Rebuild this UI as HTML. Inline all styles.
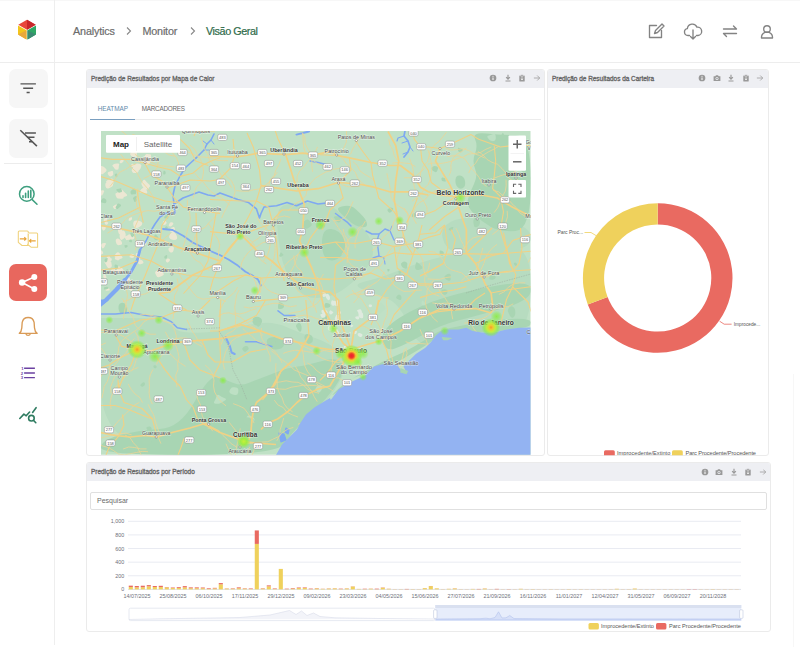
<!DOCTYPE html>
<html><head><meta charset="utf-8">
<style>
*{margin:0;padding:0;box-sizing:border-box}
html,body{width:800px;height:647px;overflow:hidden;background:#fff;font-family:"Liberation Sans",sans-serif;position:relative}
.abs{position:absolute}
svg text{font-family:"Liberation Sans",sans-serif}
.crumb{top:25px;font-size:10.8px;color:#6c6c6c;white-space:nowrap;-webkit-text-stroke:0.2px currentColor}
.sbtn{left:8.5px;width:39px;height:39px;border-radius:7px;background:#f6f6f6}
.panel{border:1px solid #ebebeb;border-radius:3px;background:#fff;overflow:hidden}
.phead{position:absolute;left:0;top:0;right:0;height:17.6px;background:#eeeff3}
.ptitle{position:absolute;left:4px;top:5.2px;font-size:6.45px;font-weight:normal;-webkit-text-stroke:0.3px #666;color:#5e5e5e;white-space:nowrap;letter-spacing:0}
</style></head><body>
<div class="abs" style="left:0;top:0;width:800px;height:1px;background:#f7f7f7"></div>
<div class="abs" style="left:54px;top:0;width:1.1px;height:645px;background:#eeeeee"></div>
<div class="abs" style="left:0;top:62px;width:800px;height:1px;background:#ededed"></div>
<div class="abs" style="left:793px;top:374px;width:1px;height:273px;background:#f7f7f7"></div>
<svg class="abs" style="left:16px;top:18px" width="22" height="23" viewBox="0 0 22 23"><polygon points="11,1.7 19.7,6.7 11,11.7 2.3,6.7" fill="#e8463b"/><polygon points="11,1.7 19.7,6.7 11,11.7" fill="#c8262a"/><polygon points="2,7.4 10.5,12.3 10.5,21.5 2,16.6" fill="#f3c51c"/><polygon points="2,16.6 10.5,12.3 10.5,21.5" fill="#e9a83a"/><polygon points="20,7.4 11.5,12.3 11.5,21.5 20,16.6" fill="#2fa865"/><polygon points="20,16.6 11.5,12.3 11.5,21.5" fill="#3c8a72"/></svg>
<div class="abs crumb" style="left:73px;letter-spacing:-0.15px">Analytics</div>
<svg class="abs" style="left:124px;top:25px" width="10" height="12" viewBox="0 0 10 12"><path d="M3 2.5l3.5 3.5L3 9.5" stroke="#888" stroke-width="1.1" fill="none"/></svg>
<div class="abs crumb" style="left:142.5px;letter-spacing:-0.2px">Monitor</div>
<svg class="abs" style="left:187.5px;top:25px" width="10" height="12" viewBox="0 0 10 12"><path d="M3 2.5l3.5 3.5L3 9.5" stroke="#888" stroke-width="1.1" fill="none"/></svg>
<div class="abs crumb" style="left:206px;color:#2f6b4a;letter-spacing:-0.42px">Visão Geral</div>
<svg class="abs" style="left:646px;top:21px" width="20" height="20" viewBox="0 0 20 20" fill="none" stroke="#838383" stroke-width="1.35" stroke-linecap="round" stroke-linejoin="round"><path d="M10.5 4.5H3.5v12h12V9.5"/><path d="M8.5 12.5l1-3 6.5-6.5 2 2-6.5 6.5z"/></svg>
<svg class="abs" style="left:683px;top:21px" width="20" height="20" viewBox="0 0 20 20" fill="none" stroke="#838383" stroke-width="1.35" stroke-linecap="round" stroke-linejoin="round"><path d="M6.5 14.5H5a3.5 3.5 0 0 1-.6-6.95A5 5 0 0 1 14 6.2a4 4 0 0 1 1 8.3h-1.5"/><path d="M10 9v9M7.5 15.5L10 18l2.5-2.5"/></svg>
<svg class="abs" style="left:720px;top:21px" width="20" height="20" viewBox="0 0 20 20" fill="none" stroke="#838383" stroke-width="1.35" stroke-linecap="round" stroke-linejoin="round"><path d="M3.5 8h13l-3-3M16.5 12.5h-13l3 3"/></svg>
<svg class="abs" style="left:757px;top:21px" width="20" height="20" viewBox="0 0 20 20" fill="none" stroke="#838383" stroke-width="1.35" stroke-linecap="round" stroke-linejoin="round"><circle cx="10" cy="8" r="3.3"/><path d="M4.5 17v-1a5.5 5 0 0 1 11 0v1z"/></svg>
<div class="abs sbtn" style="top:68.5px"></div>
<div class="abs sbtn" style="top:118.5px"></div>
<div class="abs" style="left:4px;top:162.5px;width:48px;height:1px;background:#ececec"></div>
<div class="abs" style="left:9.3px;top:264.3px;width:37.5px;height:37.2px;border-radius:7px;background:#e8675e"></div>
<svg class="abs" style="left:8px;top:68px" width="40" height="40" viewBox="0 0 40 40" stroke="#555" stroke-width="1.4" stroke-linecap="butt"><path d="M12.5 15.9h15.4M15.2 20.2h9.9M18.6 24.5h3.1"/></svg>
<svg class="abs" style="left:8px;top:118px" width="40" height="40" viewBox="0 0 40 40" stroke="#555" stroke-width="1.4" stroke-linecap="butt"><path d="M17 15h10.9M19 19.3h7.5M21 23.8h3.1"/><path d="M12.3 12.2l16.6 15.9" stroke-width="1.5"/></svg>
<svg class="abs" style="left:8px;top:176px" width="40" height="40" viewBox="0 0 40 40" fill="none" stroke="#3e9f7f" stroke-width="1.5" stroke-linecap="round"><circle cx="18.8" cy="17.9" r="7.3"/><path d="M24.2 23.6l4.8 4.6"/><path d="M15 21.5v-1.8M17.6 21.5v-4.2M20.3 21.5v-6.5M22.8 21.5v-7.2" stroke-width="1.6"/></svg>
<svg class="abs" style="left:8px;top:222px" width="40" height="40" viewBox="0 0 40 40" fill="none" stroke-width="1.05" stroke-linejoin="round"><path d="M11.3 9h8a1 1 0 0 1 1 1v13.5h-6.3l-3.7-3.2V10a1 1 0 0 1 1-1z" stroke="#f0d27a" fill="#fff"/><path d="M20.3 11h8.3a1 1 0 0 1 1 1v13.2h-6.6l-3.7-3.2" stroke="#f0d27a" fill="#fff"/><path d="M20.3 12v10" stroke="#f0d27a"/><path d="M11.8 16.8h6.2M16.3 15.1l1.8 1.7-1.8 1.7" stroke="#e9a53b" stroke-width="1.15"/><path d="M27.7 18.8h-6.3M23.2 17.1l-1.8 1.7 1.8 1.7" stroke="#e9a53b" stroke-width="1.15"/></svg>
<svg class="abs" style="left:8px;top:262px" width="40" height="42" viewBox="0 0 40 42" fill="#fff" stroke="#fff"><path d="M14.1 20.5l12.2-5.4M14.1 20.5l12.2 6.5" stroke-width="1.6"/><circle cx="14.1" cy="20.5" r="3.2" stroke="none"/><circle cx="26.3" cy="15.1" r="3" stroke="none"/><circle cx="26.3" cy="27" r="3" stroke="none"/></svg>
<svg class="abs" style="left:8px;top:306px" width="40" height="40" viewBox="0 0 40 40" fill="none" stroke="#d99b57" stroke-width="1.35" stroke-linejoin="round"><path d="M11.3 27.4h17.8c-1.6-1.2-2.4-3-2.6-5.5l-.4-5.6a6.1 6.1 0 0 0-11.9 0l-.4 5.6c-.2 2.5-1 4.3-2.5 5.5z"/><path d="M17.8 27.6a2.4 2.4 0 0 0 4.6 0"/></svg>
<svg class="abs" style="left:8px;top:352px" width="40" height="40" viewBox="0 0 40 40" fill="none" stroke="#6b41a1" stroke-width="1.4"><path d="M16.1 16.3h10.8M16.1 21h10.8M16.1 25.6h10.8"/><text x="13.2" y="18" font-size="4.2" font-family="Liberation Sans" fill="#6b41a1" stroke="none" font-weight="bold">1</text><text x="12.8" y="22.6" font-size="4.2" font-family="Liberation Sans" fill="#6b41a1" stroke="none" font-weight="bold">2</text><text x="12.8" y="27.2" font-size="4.2" font-family="Liberation Sans" fill="#6b41a1" stroke="none" font-weight="bold">3</text></svg>
<svg class="abs" style="left:8px;top:396px" width="40" height="40" viewBox="0 0 40 40" fill="none" stroke="#2e7b60" stroke-width="1.6" stroke-linecap="round" stroke-linejoin="round"><path d="M11.8 22.5l4.1-4.4 2.3 1.7 3.4-3.8"/><path d="M24.6 16.4l3.5-4.7"/><circle cx="23.4" cy="22.2" r="2.8"/><path d="M25.4 24.3l2.4 2.4"/></svg>

<div class="abs panel" style="left:86px;top:69px;width:459px;height:386.5px">
  <div class="phead"><div class="ptitle">Predição de Resultados por Mapa de Calor</div></div>
</div>
<div class="abs" style="left:97.7px;top:104.5px;font-size:6.4px;color:#5f8aab;white-space:nowrap">HEATMAP</div>
<div class="abs" style="left:141.7px;top:104.5px;font-size:6.3px;color:#666;white-space:nowrap;letter-spacing:-0.2px">MARCADORES</div>
<div class="abs" style="left:90.4px;top:119px;width:451px;height:1px;background:#ececec"></div>
<div class="abs" style="left:90.4px;top:118.8px;width:44.4px;height:1.5px;background:#7a9fc0"></div>
<svg class="abs" style="left:489.4px;top:74px" width="8" height="8" viewBox="0 0 8 8"><circle cx="4" cy="4" r="3.35" fill="#999999"/><path d="M4 3.5v2.5" stroke="#fff" stroke-width="1"/><circle cx="4" cy="2.3" r="0.55" fill="#fff"/></svg>
<svg class="abs" style="left:503.9px;top:74px" width="8" height="8" viewBox="0 0 8 8"><path d="M4 0.8v4.2M2.1 3.2L4 5.1 5.9 3.2M1.5 7h5" stroke="#999999" stroke-width="1.15" fill="none"/></svg>
<svg class="abs" style="left:518.4px;top:74px" width="8" height="8" viewBox="0 0 8 8"><rect x="1.3" y="1.5" width="5.4" height="6" rx="0.6" fill="#999999"/><rect x="2.7" y="0.7" width="2.6" height="1.6" rx="0.3" fill="#999999" stroke="#eeeff3" stroke-width="0.5"/><path d="M4 3.3v2.6M3 4.9L4 5.9 5 4.9" stroke="#fff" stroke-width="0.75" fill="none"/></svg>
<svg class="abs" style="left:532.9px;top:74px" width="8" height="8" viewBox="0 0 8 8"><path d="M0.9 4h5.8M4.2 1.5L6.7 4 4.2 6.5" stroke="#9c9c9c" stroke-width="0.8" fill="none"/></svg>

<div class="abs panel" style="left:547px;top:69px;width:221.5px;height:386.5px">
  <div class="phead"><div class="ptitle">Predição de Resultados da Carteira</div></div>
</div>
<svg class="abs" style="left:698px;top:74px" width="8" height="8" viewBox="0 0 8 8"><circle cx="4" cy="4" r="3.35" fill="#999999"/><path d="M4 3.5v2.5" stroke="#fff" stroke-width="1"/><circle cx="4" cy="2.3" r="0.55" fill="#fff"/></svg>
<svg class="abs" style="left:712.5px;top:74px" width="8" height="8" viewBox="0 0 8 8"><path d="M0.6 2.3h1.7l.7-1h2l.7 1h1.7v4.6H0.6z" fill="#999999"/><circle cx="4" cy="4.5" r="1.5" fill="#eeeff3"/><circle cx="4" cy="4.5" r="0.8" fill="#999999"/></svg>
<svg class="abs" style="left:727.0px;top:74px" width="8" height="8" viewBox="0 0 8 8"><path d="M4 0.8v4.2M2.1 3.2L4 5.1 5.9 3.2M1.5 7h5" stroke="#999999" stroke-width="1.15" fill="none"/></svg>
<svg class="abs" style="left:741.5px;top:74px" width="8" height="8" viewBox="0 0 8 8"><rect x="1.3" y="1.5" width="5.4" height="6" rx="0.6" fill="#999999"/><rect x="2.7" y="0.7" width="2.6" height="1.6" rx="0.3" fill="#999999" stroke="#eeeff3" stroke-width="0.5"/><path d="M4 3.3v2.6M3 4.9L4 5.9 5 4.9" stroke="#fff" stroke-width="0.75" fill="none"/></svg>
<svg class="abs" style="left:756.0px;top:74px" width="8" height="8" viewBox="0 0 8 8"><path d="M0.9 4h5.8M4.2 1.5L6.7 4 4.2 6.5" stroke="#9c9c9c" stroke-width="0.8" fill="none"/></svg>

<div class="abs panel" style="left:86px;top:462.3px;width:685px;height:169.6px">
  <div class="phead"><div class="ptitle">Predição de Resultados por Período</div></div>
</div>
<svg class="abs" style="left:700.5px;top:467.5px" width="8" height="8" viewBox="0 0 8 8"><circle cx="4" cy="4" r="3.35" fill="#999999"/><path d="M4 3.5v2.5" stroke="#fff" stroke-width="1"/><circle cx="4" cy="2.3" r="0.55" fill="#fff"/></svg>
<svg class="abs" style="left:715.0px;top:467.5px" width="8" height="8" viewBox="0 0 8 8"><path d="M0.6 2.3h1.7l.7-1h2l.7 1h1.7v4.6H0.6z" fill="#999999"/><circle cx="4" cy="4.5" r="1.5" fill="#eeeff3"/><circle cx="4" cy="4.5" r="0.8" fill="#999999"/></svg>
<svg class="abs" style="left:729.5px;top:467.5px" width="8" height="8" viewBox="0 0 8 8"><path d="M4 0.8v4.2M2.1 3.2L4 5.1 5.9 3.2M1.5 7h5" stroke="#999999" stroke-width="1.15" fill="none"/></svg>
<svg class="abs" style="left:744.0px;top:467.5px" width="8" height="8" viewBox="0 0 8 8"><rect x="1.3" y="1.5" width="5.4" height="6" rx="0.6" fill="#999999"/><rect x="2.7" y="0.7" width="2.6" height="1.6" rx="0.3" fill="#999999" stroke="#eeeff3" stroke-width="0.5"/><path d="M4 3.3v2.6M3 4.9L4 5.9 5 4.9" stroke="#fff" stroke-width="0.75" fill="none"/></svg>
<svg class="abs" style="left:758.5px;top:467.5px" width="8" height="8" viewBox="0 0 8 8"><path d="M0.9 4h5.8M4.2 1.5L6.7 4 4.2 6.5" stroke="#9c9c9c" stroke-width="0.8" fill="none"/></svg>
<div class="abs" style="left:90.4px;top:492px;width:676.5px;height:17.6px;border:1px solid #e0e0e0;border-radius:2px"></div>
<div class="abs" style="left:97px;top:497.3px;font-size:7px;color:#6a6a6a">Pesquisar</div>

<svg class="abs" style="left:0;top:0" width="800" height="647">
<defs><clipPath id="mc"><rect x="101" y="131" width="429.5" height="323.8"/></clipPath>
<radialGradient id="hG"><stop offset="0" stop-color="#88ee3c" stop-opacity="0.85"/><stop offset="0.55" stop-color="#8bee45" stop-opacity="0.5"/><stop offset="1" stop-color="#8bee45" stop-opacity="0"/></radialGradient>
<radialGradient id="hY"><stop offset="0" stop-color="#c6f03a" stop-opacity="1"/><stop offset="0.45" stop-color="#9aee3c" stop-opacity="0.9"/><stop offset="1" stop-color="#8bee45" stop-opacity="0"/></radialGradient>
<radialGradient id="hO"><stop offset="0" stop-color="#f39a2c" stop-opacity="1"/><stop offset="0.2" stop-color="#f0c834" stop-opacity="1"/><stop offset="0.45" stop-color="#c4ef3a" stop-opacity="0.95"/><stop offset="0.75" stop-color="#8bee45" stop-opacity="0.6"/><stop offset="1" stop-color="#8bee45" stop-opacity="0"/></radialGradient>
<radialGradient id="hR"><stop offset="0" stop-color="#ee1c2e" stop-opacity="1"/><stop offset="0.2" stop-color="#f03a2a" stop-opacity="1"/><stop offset="0.4" stop-color="#f4c834" stop-opacity="1"/><stop offset="0.62" stop-color="#b4ef3c" stop-opacity="0.9"/><stop offset="0.85" stop-color="#8bee45" stop-opacity="0.5"/><stop offset="1" stop-color="#8bee45" stop-opacity="0"/></radialGradient>
</defs>
<g clip-path="url(#mc)">
<rect x="101" y="131" width="430" height="324" fill="#c0e1c6"/>
<path d="M101.0 318.0 Q101.0 318.0 123.5 318.0 Q146.0 318.0 154.0 319.0 Q162.0 320.0 167.0 322.5 Q172.0 325.0 175.0 328.5 Q178.0 332.0 189.0 332.5 Q200.0 333.0 210.0 332.0 Q220.0 331.0 235.0 327.5 Q250.0 324.0 262.5 323.0 Q275.0 322.0 287.5 327.5 Q300.0 333.0 315.0 338.0 Q330.0 343.0 340.0 352.5 Q350.0 362.0 340.0 381.0 Q330.0 400.0 315.0 410.0 Q300.0 420.0 288.0 437.5 Q276.0 455.0 188.5 455.0 Q101.0 455.0 101.0 386.5 Q101.0 318.0 101.0 318.0Z" fill="#b7dcc0"/>
<path d="M277.0 223.0 Q276.0 206.0 288.0 204.0 Q300.0 202.0 315.0 203.0 Q330.0 204.0 336.0 209.5 Q342.0 215.0 355.0 222.5 Q368.0 230.0 372.0 244.0 Q376.0 258.0 364.0 271.0 Q352.0 284.0 341.0 291.0 Q330.0 298.0 316.0 298.0 Q302.0 298.0 293.0 284.0 Q284.0 270.0 281.0 255.0 Q278.0 240.0 277.0 223.0Z" fill="#b7dcc0"/>
<path d="M365.0 290.0 Q350.0 285.0 365.0 281.5 Q380.0 278.0 400.0 270.0 Q420.0 262.0 445.0 256.0 Q470.0 250.0 500.5 245.0 Q531.0 240.0 531.0 284.0 Q531.0 328.0 515.5 330.0 Q500.0 332.0 470.0 333.5 Q440.0 335.0 430.0 342.5 Q420.0 350.0 410.0 327.5 Q400.0 305.0 390.0 300.0 Q380.0 295.0 365.0 290.0Z" fill="#b7dcc0"/>
<path d="M442.5 237.5 Q440.0 225.0 455.0 220.0 Q470.0 215.0 500.5 220.0 Q531.0 225.0 531.0 237.5 Q531.0 250.0 500.5 252.5 Q470.0 255.0 457.5 252.5 Q445.0 250.0 442.5 237.5Z" fill="#b7dcc0"/>
<path d="M101.0 447.5 Q101.0 440.0 120.5 435.0 Q140.0 430.0 160.0 429.0 Q180.0 428.0 195.0 401.0 Q210.0 374.0 218.0 377.0 Q226.0 380.0 233.5 383.0 Q241.0 386.0 248.5 383.0 Q256.0 380.0 264.0 377.0 Q272.0 374.0 279.5 371.0 Q287.0 368.0 295.0 367.0 Q303.0 366.0 310.5 364.0 Q318.0 362.0 326.5 360.0 Q335.0 358.0 340.0 361.5 Q345.0 365.0 342.5 372.5 Q340.0 380.0 333.0 389.5 Q326.0 399.0 317.5 407.5 Q309.0 416.0 300.5 424.5 Q292.0 433.0 284.0 444.0 Q276.0 455.0 188.5 455.0 Q101.0 455.0 101.0 447.5Z" fill="#a8d5b3"/>
<path d="M338.0 209.0 Q338.0 207.0 344.5 206.0 Q351.0 205.0 355.5 209.0 Q360.0 213.0 363.5 217.0 Q367.0 221.0 367.0 224.5 Q367.0 228.0 361.0 227.0 Q355.0 226.0 350.5 222.0 Q346.0 218.0 342.0 214.5 Q338.0 211.0 338.0 209.0Z" fill="#a8d5b3"/>
<path d="M475.0 139.0 Q472.0 132.0 486.0 133.5 Q500.0 135.0 515.5 135.0 Q531.0 135.0 531.0 182.5 Q531.0 230.0 515.5 231.0 Q500.0 232.0 491.0 227.0 Q482.0 222.0 474.0 214.0 Q466.0 206.0 468.0 199.0 Q470.0 192.0 474.0 184.0 Q478.0 176.0 475.0 168.5 Q472.0 161.0 475.0 153.5 Q478.0 146.0 475.0 139.0Z" fill="#a8d5b3"/>
<path d="M382.5 341.0 Q380.0 330.0 400.0 317.5 Q420.0 305.0 445.0 297.5 Q470.0 290.0 500.5 285.0 Q531.0 280.0 531.0 290.0 Q531.0 300.0 505.5 307.5 Q480.0 315.0 460.0 320.0 Q440.0 325.0 422.5 335.0 Q405.0 345.0 395.0 348.5 Q385.0 352.0 382.5 341.0Z" fill="#a8d5b3"/>
<path d="M335.0 393.5 Q340.0 390.0 346.0 384.0 Q352.0 378.0 360.0 374.0 Q368.0 370.0 376.5 365.0 Q385.0 360.0 395.0 356.0 Q405.0 352.0 415.0 346.0 Q425.0 340.0 432.5 335.0 Q440.0 330.0 450.0 328.0 Q460.0 326.0 475.0 323.0 Q490.0 320.0 510.5 319.0 Q531.0 318.0 531.0 322.5 Q531.0 327.0 521.0 328.0 Q511.0 329.0 502.5 330.5 Q494.0 332.0 485.5 332.0 Q477.0 332.0 471.0 332.5 Q465.0 333.0 456.5 333.0 Q448.0 333.0 442.0 335.5 Q436.0 338.0 430.5 342.0 Q425.0 346.0 419.0 349.5 Q413.0 353.0 404.5 358.0 Q396.0 363.0 387.5 365.5 Q379.0 368.0 373.0 370.5 Q367.0 373.0 358.5 376.0 Q350.0 379.0 344.5 383.5 Q339.0 388.0 334.5 392.5 Q330.0 397.0 335.0 393.5Z" fill="#a8d5b3"/>
<path d="M322.0 243.0 Q322.0 228.0 331.0 229.0 Q340.0 230.0 344.0 239.0 Q348.0 248.0 342.0 255.0 Q336.0 262.0 329.0 260.0 Q322.0 258.0 322.0 243.0Z" fill="#a8d5b3"/>
<path d="M455.5 179.5 Q456.0 175.0 460.0 175.5 Q464.0 176.0 465.0 181.0 Q466.0 186.0 463.0 188.0 Q460.0 190.0 457.5 187.0 Q455.0 184.0 455.5 179.5Z" fill="#a8d5b3"/>
<path d="M267.5 344.5 Q265.0 339.0 270.5 337.5 Q276.0 336.0 280.5 338.5 Q285.0 341.0 284.0 345.0 Q283.0 349.0 276.5 349.5 Q270.0 350.0 267.5 344.5Z" fill="#a8d5b3"/>
<path d="M252.5 321.5 Q252.0 318.0 255.0 317.0 Q258.0 316.0 260.5 318.0 Q263.0 320.0 261.5 323.0 Q260.0 326.0 256.5 325.5 Q253.0 325.0 252.5 321.5Z" fill="#a8d5b3"/>
<path d="M118.5 308.5 Q118.0 304.0 121.0 303.0 Q124.0 302.0 126.0 305.0 Q128.0 308.0 127.0 311.5 Q126.0 315.0 122.5 314.0 Q119.0 313.0 118.5 308.5Z" fill="#a8d5b3"/>
<path d="M125.4 233.1 Q126.4 235.9 125.1 237.2 Q123.9 238.5 122.4 239.5 Q121.0 240.6 120.2 238.7 Q119.5 236.7 119.5 235.9 Q119.5 235.1 120.7 233.0 Q121.9 231.0 123.2 230.6 Q124.5 230.3 125.4 233.1Z" fill="#ece7d3"/>
<path d="M173.9 248.4 Q173.7 249.7 173.4 250.7 Q173.0 251.7 172.4 252.2 Q171.7 252.7 170.6 252.5 Q169.4 252.2 168.6 250.3 Q167.8 248.3 169.4 247.4 Q171.0 246.4 172.6 246.7 Q174.2 247.1 173.9 248.4Z" fill="#ece7d3"/>
<path d="M126.2 193.8 Q128.1 195.4 126.2 196.2 Q124.4 196.9 123.3 197.1 Q122.2 197.4 120.2 197.3 Q118.2 197.3 117.6 194.4 Q117.0 191.5 118.8 189.6 Q120.6 187.6 122.5 189.9 Q124.4 192.2 126.2 193.8Z" fill="#ece7d3"/>
<path d="M108.8 288.1 Q109.7 289.3 109.7 289.9 Q109.8 290.5 108.0 290.6 Q106.3 290.7 105.8 290.4 Q105.3 290.1 104.9 288.1 Q104.5 286.2 105.3 286.3 Q106.2 286.5 107.0 286.7 Q107.9 286.9 108.8 288.1Z" fill="#ece7d3"/>
<path d="M132.1 218.1 Q132.0 219.3 131.7 219.8 Q131.4 220.2 130.8 220.4 Q130.3 220.6 129.2 220.7 Q128.1 220.7 128.7 219.4 Q129.2 218.1 129.9 217.8 Q130.6 217.6 131.4 217.2 Q132.2 216.9 132.1 218.1Z" fill="#ece7d3"/>
<path d="M141.4 165.5 Q141.3 166.5 140.5 168.4 Q139.7 170.3 138.7 170.1 Q137.6 169.8 135.9 170.0 Q134.2 170.1 133.7 167.9 Q133.2 165.6 134.9 164.3 Q136.6 163.0 139.0 163.7 Q141.5 164.5 141.4 165.5Z" fill="#ece7d3"/>
<path d="M133.5 281.1 Q134.6 281.4 133.6 282.4 Q132.6 283.4 132.2 283.9 Q131.8 284.5 131.1 283.4 Q130.4 282.3 130.1 281.2 Q129.8 280.2 130.7 280.1 Q131.6 280.1 132.0 280.5 Q132.4 280.9 133.5 281.1Z" fill="#ece7d3"/>
<path d="M146.0 189.2 Q147.1 190.7 147.3 192.2 Q147.5 193.6 145.7 193.6 Q143.9 193.5 141.5 193.1 Q139.0 192.6 140.1 190.8 Q141.1 189.0 142.5 188.3 Q143.9 187.6 144.5 187.6 Q145.0 187.6 146.0 189.2Z" fill="#ece7d3"/>
<path d="M123.6 160.3 Q123.7 160.9 123.4 161.5 Q123.0 162.2 121.6 162.9 Q120.3 163.7 119.8 162.8 Q119.4 161.9 119.9 161.2 Q120.4 160.4 120.7 160.2 Q121.0 160.1 122.3 159.8 Q123.5 159.6 123.6 160.3Z" fill="#ece7d3"/>
<path d="M142.0 222.5 Q142.7 223.8 141.6 225.2 Q140.5 226.6 138.0 227.8 Q135.6 229.0 134.4 227.3 Q133.2 225.7 133.2 223.5 Q133.3 221.4 134.7 220.8 Q136.0 220.2 138.7 220.8 Q141.3 221.3 142.0 222.5Z" fill="#ece7d3"/>
<path d="M123.1 269.2 Q124.1 270.8 123.3 272.3 Q122.5 273.8 120.6 273.4 Q118.8 273.0 116.4 272.9 Q114.0 272.7 114.8 270.1 Q115.7 267.5 116.9 266.7 Q118.1 265.8 120.1 266.8 Q122.1 267.7 123.1 269.2Z" fill="#ece7d3"/>
<path d="M151.1 155.3 Q150.9 156.4 150.5 157.9 Q150.1 159.3 148.6 160.0 Q147.0 160.8 146.9 159.2 Q146.8 157.5 145.8 156.4 Q144.7 155.2 146.1 154.8 Q147.4 154.3 149.4 154.3 Q151.4 154.2 151.1 155.3Z" fill="#ece7d3"/>
<path d="M123.3 284.9 Q123.1 285.9 123.2 287.0 Q123.4 288.1 121.6 288.4 Q119.8 288.7 119.4 287.9 Q119.0 287.1 119.4 286.1 Q119.7 285.2 120.2 283.9 Q120.6 282.6 122.1 283.2 Q123.6 283.9 123.3 284.9Z" fill="#ece7d3"/>
<path d="M107.3 218.6 Q107.5 219.2 107.1 220.4 Q106.7 221.5 105.8 222.1 Q105.0 222.6 104.1 221.3 Q103.2 220.0 103.6 219.6 Q104.0 219.3 104.7 218.8 Q105.4 218.2 106.3 218.1 Q107.1 217.9 107.3 218.6Z" fill="#ece7d3"/>
<path d="M113.9 270.0 Q113.9 270.4 114.0 271.1 Q114.1 271.9 113.2 271.8 Q112.4 271.8 111.8 271.8 Q111.2 271.9 111.0 270.9 Q110.9 270.0 111.5 269.4 Q112.2 268.8 113.1 269.2 Q113.9 269.7 113.9 270.0Z" fill="#ece7d3"/>
<path d="M108.1 222.6 Q108.6 222.7 108.0 223.6 Q107.4 224.5 107.0 224.8 Q106.5 225.0 105.6 224.5 Q104.7 223.9 104.6 223.0 Q104.5 222.0 105.2 221.4 Q105.9 220.8 106.8 221.6 Q107.7 222.5 108.1 222.6Z" fill="#ece7d3"/>
<path d="M169.9 259.6 Q170.2 260.3 169.5 261.1 Q168.8 261.9 168.1 262.3 Q167.4 262.8 166.5 261.9 Q165.5 261.1 165.8 260.3 Q166.1 259.5 166.7 258.9 Q167.2 258.3 168.4 258.6 Q169.7 259.0 169.9 259.6Z" fill="#ece7d3"/>
<path d="M148.7 183.9 Q150.9 185.7 149.6 187.0 Q148.3 188.2 146.4 189.0 Q144.4 189.7 143.0 187.3 Q141.6 184.8 141.4 184.0 Q141.2 183.2 142.7 181.0 Q144.1 178.9 145.4 180.5 Q146.6 182.1 148.7 183.9Z" fill="#ece7d3"/>
<path d="M115.8 269.2 Q115.9 269.8 115.6 271.1 Q115.3 272.3 114.2 272.5 Q113.1 272.7 112.4 272.0 Q111.6 271.4 112.1 270.6 Q112.6 269.9 113.2 269.3 Q113.7 268.7 114.7 268.7 Q115.6 268.7 115.8 269.2Z" fill="#ece7d3"/>
<path d="M129.6 277.7 Q130.4 278.2 130.0 280.3 Q129.5 282.4 128.4 282.6 Q127.4 282.7 125.9 280.9 Q124.4 279.1 124.9 278.3 Q125.5 277.4 126.2 276.4 Q126.9 275.4 127.9 276.3 Q128.8 277.2 129.6 277.7Z" fill="#ece7d3"/>
<path d="M174.8 228.3 Q175.2 229.9 174.8 230.9 Q174.3 231.9 173.4 232.0 Q172.5 232.2 170.7 231.7 Q169.0 231.2 169.9 229.6 Q170.7 228.0 171.3 227.8 Q171.9 227.7 173.2 227.1 Q174.4 226.6 174.8 228.3Z" fill="#ece7d3"/>
<path d="M166.4 221.9 Q167.1 223.0 166.1 224.0 Q165.1 225.0 164.5 224.9 Q163.9 224.8 163.4 224.7 Q162.9 224.6 162.8 223.5 Q162.7 222.4 163.1 221.6 Q163.6 220.9 164.6 220.8 Q165.7 220.8 166.4 221.9Z" fill="#ece7d3"/>
<path d="M105.8 227.3 Q105.9 228.2 105.4 229.1 Q104.9 230.1 104.1 230.5 Q103.2 230.8 102.8 230.2 Q102.3 229.6 101.9 228.4 Q101.4 227.3 102.2 226.5 Q103.0 225.7 104.3 226.0 Q105.6 226.4 105.8 227.3Z" fill="#ece7d3"/>
<path d="M111.3 262.3 Q111.5 263.9 111.8 265.4 Q112.1 267.0 110.0 267.9 Q108.0 268.8 106.8 266.2 Q105.7 263.7 104.7 262.7 Q103.7 261.8 105.6 261.3 Q107.4 260.8 109.2 260.8 Q111.1 260.8 111.3 262.3Z" fill="#ece7d3"/>
<path d="M119.7 253.9 Q120.3 254.5 119.9 255.6 Q119.4 256.8 119.0 256.6 Q118.5 256.3 117.8 255.8 Q117.0 255.2 117.3 254.7 Q117.6 254.2 117.8 254.0 Q118.0 253.9 118.6 253.6 Q119.1 253.3 119.7 253.9Z" fill="#ece7d3"/>
<path d="M128.2 236.5 Q128.3 237.0 128.3 238.4 Q128.2 239.8 127.3 239.1 Q126.4 238.4 125.6 238.7 Q124.9 239.1 124.8 237.7 Q124.7 236.3 125.5 235.9 Q126.3 235.5 127.2 235.7 Q128.1 235.9 128.2 236.5Z" fill="#ece7d3"/>
<path d="M137.0 153.0 Q136.7 154.5 136.9 155.9 Q137.0 157.3 135.4 156.9 Q133.8 156.6 132.5 156.4 Q131.3 156.2 130.3 154.7 Q129.4 153.2 131.7 151.5 Q134.0 149.7 135.7 150.6 Q137.3 151.5 137.0 153.0Z" fill="#ece7d3"/>
<path d="M121.5 241.6 Q122.3 243.0 122.0 243.9 Q121.6 244.8 119.4 245.1 Q117.3 245.5 116.6 244.1 Q116.0 242.6 115.7 241.0 Q115.5 239.4 116.9 238.8 Q118.2 238.2 119.4 239.2 Q120.7 240.1 121.5 241.6Z" fill="#ece7d3"/>
<path d="M147.4 161.1 Q147.0 162.6 147.3 163.6 Q147.6 164.6 146.3 164.5 Q145.0 164.4 143.9 163.8 Q142.7 163.1 142.8 162.3 Q142.9 161.6 144.0 160.8 Q145.1 160.0 146.4 159.8 Q147.7 159.6 147.4 161.1Z" fill="#ece7d3"/>
<path d="M140.2 256.0 Q140.0 257.8 140.3 259.4 Q140.5 261.0 139.1 260.8 Q137.7 260.6 136.8 259.8 Q135.9 259.0 135.8 257.7 Q135.7 256.3 135.9 254.3 Q136.0 252.4 138.2 253.3 Q140.4 254.3 140.2 256.0Z" fill="#ece7d3"/>
<path d="M176.2 234.6 Q177.8 237.7 176.9 238.9 Q176.0 240.1 173.6 239.9 Q171.1 239.7 170.1 238.7 Q169.0 237.8 169.1 236.8 Q169.2 235.9 170.1 234.1 Q171.0 232.4 172.8 231.9 Q174.6 231.4 176.2 234.6Z" fill="#ece7d3"/>
<path d="M122.4 229.1 Q122.4 230.8 122.0 232.4 Q121.7 233.9 120.5 234.4 Q119.4 234.9 118.8 233.5 Q118.2 232.0 118.1 231.2 Q117.9 230.4 118.0 228.9 Q118.1 227.3 120.2 227.3 Q122.3 227.3 122.4 229.1Z" fill="#ece7d3"/>
<path d="M151.3 158.3 Q150.8 160.2 150.4 161.8 Q149.9 163.3 148.4 164.5 Q146.8 165.8 145.6 163.9 Q144.4 162.1 144.3 159.1 Q144.1 156.0 145.4 154.7 Q146.6 153.3 149.3 154.8 Q151.9 156.3 151.3 158.3Z" fill="#ece7d3"/>
<path d="M105.9 244.3 Q105.0 245.3 104.8 246.2 Q104.5 247.1 103.6 248.0 Q102.7 248.9 102.0 247.8 Q101.4 246.7 101.2 245.5 Q101.0 244.4 102.1 243.5 Q103.2 242.7 104.9 243.0 Q106.7 243.4 105.9 244.3Z" fill="#ece7d3"/>
<path d="M148.9 187.3 Q149.0 188.3 148.3 188.7 Q147.7 189.1 147.1 189.5 Q146.6 189.9 145.7 189.2 Q144.9 188.6 144.9 187.6 Q144.8 186.6 145.5 186.5 Q146.2 186.5 147.5 186.4 Q148.8 186.3 148.9 187.3Z" fill="#ece7d3"/>
<path d="M104.1 191.5 Q103.6 192.8 103.3 193.4 Q102.9 194.0 102.4 194.9 Q101.9 195.9 100.5 194.9 Q99.0 193.9 99.2 192.8 Q99.3 191.6 100.1 191.0 Q100.9 190.4 102.7 190.3 Q104.5 190.2 104.1 191.5Z" fill="#ece7d3"/>
<path d="M106.1 169.0 Q107.0 170.3 106.0 171.4 Q104.9 172.4 103.3 173.7 Q101.8 175.0 100.0 173.6 Q98.3 172.2 99.0 170.0 Q99.7 167.7 100.5 166.5 Q101.2 165.3 103.2 166.5 Q105.1 167.8 106.1 169.0Z" fill="#ece7d3"/>
<path d="M119.2 164.6 Q118.7 165.9 118.7 167.9 Q118.6 169.8 116.9 169.8 Q115.1 169.7 114.5 168.5 Q113.8 167.3 112.7 166.3 Q111.7 165.3 113.2 164.4 Q114.7 163.5 117.2 163.4 Q119.7 163.2 119.2 164.6Z" fill="#ece7d3"/>
<path d="M113.1 172.1 Q113.2 173.7 113.3 174.5 Q113.3 175.3 111.7 176.1 Q110.0 176.9 108.7 175.5 Q107.5 174.1 107.7 173.1 Q107.9 172.1 109.1 171.8 Q110.2 171.4 111.6 171.0 Q113.0 170.5 113.1 172.1Z" fill="#ece7d3"/>
<path d="M117.4 205.5 Q118.1 206.7 117.9 207.7 Q117.8 208.6 116.2 209.0 Q114.7 209.3 113.9 208.4 Q113.1 207.5 112.9 206.8 Q112.6 206.0 114.2 205.4 Q115.7 204.8 116.2 204.6 Q116.7 204.4 117.4 205.5Z" fill="#ece7d3"/>
<path d="M133.9 235.7 Q134.9 237.6 134.0 238.7 Q133.0 239.8 130.6 239.8 Q128.3 239.7 126.8 240.1 Q125.2 240.6 126.2 238.0 Q127.2 235.4 128.0 234.8 Q128.9 234.2 130.9 233.9 Q133.0 233.7 133.9 235.7Z" fill="#ece7d3"/>
<path d="M112.9 183.7 Q113.6 185.1 112.4 186.3 Q111.1 187.5 109.0 188.2 Q106.8 188.9 106.1 187.8 Q105.4 186.8 105.3 184.7 Q105.2 182.6 107.1 182.1 Q109.0 181.6 110.6 181.9 Q112.3 182.2 112.9 183.7Z" fill="#ece7d3"/>
<path d="M162.6 272.2 Q164.7 274.2 163.1 275.2 Q161.5 276.3 159.5 277.0 Q157.5 277.7 156.7 276.2 Q155.9 274.7 155.2 273.2 Q154.5 271.7 157.0 270.5 Q159.5 269.3 160.0 269.8 Q160.5 270.3 162.6 272.2Z" fill="#ece7d3"/>
<path d="M122.6 193.9 Q123.6 194.8 123.8 196.9 Q124.0 198.9 121.4 198.8 Q118.9 198.7 117.9 198.6 Q116.9 198.6 115.8 195.7 Q114.8 192.9 116.7 193.1 Q118.7 193.3 120.1 193.1 Q121.6 192.9 122.6 193.9Z" fill="#ece7d3"/>
<path d="M110.5 258.0 Q110.7 259.2 110.4 260.2 Q110.1 261.2 108.7 261.7 Q107.4 262.1 106.0 261.7 Q104.6 261.3 105.3 259.9 Q106.1 258.5 107.3 256.8 Q108.4 255.1 109.4 255.9 Q110.3 256.7 110.5 258.0Z" fill="#ece7d3"/>
<path d="M173.1 222.9 Q173.8 223.6 172.8 224.8 Q171.8 226.1 171.1 226.3 Q170.4 226.5 169.3 226.3 Q168.3 226.1 168.9 224.8 Q169.5 223.5 169.7 223.0 Q169.9 222.6 171.2 222.3 Q172.4 222.1 173.1 222.9Z" fill="#ece7d3"/>
<path d="M146.5 241.9 Q146.3 242.6 146.4 243.6 Q146.6 244.7 145.4 244.9 Q144.2 245.1 143.7 244.1 Q143.1 243.1 143.3 242.7 Q143.5 242.3 144.0 242.1 Q144.6 241.8 145.6 241.5 Q146.7 241.2 146.5 241.9Z" fill="#ece7d3"/>
<path d="M111.7 258.8 Q112.0 259.5 111.5 260.4 Q111.0 261.3 110.3 261.0 Q109.6 260.8 109.1 260.4 Q108.6 259.9 109.0 259.3 Q109.4 258.8 109.8 258.5 Q110.2 258.2 110.8 258.1 Q111.4 258.1 111.7 258.8Z" fill="#ece7d3"/>
<path d="M106.1 276.2 Q106.4 276.6 106.5 277.5 Q106.6 278.5 105.4 278.6 Q104.2 278.8 103.8 278.1 Q103.4 277.3 103.1 276.6 Q102.7 275.9 103.9 274.8 Q105.1 273.6 105.5 274.7 Q105.8 275.8 106.1 276.2Z" fill="#ece7d3"/>
<path d="M118.5 257.5 Q118.9 258.6 119.1 259.4 Q119.4 260.3 117.7 260.2 Q116.1 260.0 115.6 259.6 Q115.1 259.2 114.9 258.4 Q114.6 257.7 115.4 257.2 Q116.1 256.7 117.2 256.6 Q118.2 256.4 118.5 257.5Z" fill="#ece7d3"/>
<path d="M113.5 179.8 Q114.6 181.5 113.4 183.5 Q112.1 185.6 110.5 186.2 Q108.9 186.7 108.2 185.2 Q107.6 183.6 106.4 182.4 Q105.3 181.1 107.3 180.2 Q109.2 179.4 110.8 178.7 Q112.3 178.1 113.5 179.8Z" fill="#ece7d3"/>
<path d="M134.5 164.9 Q134.9 165.2 134.6 165.9 Q134.4 166.5 133.5 166.9 Q132.5 167.3 131.9 166.9 Q131.3 166.6 131.2 165.2 Q131.2 163.9 132.1 163.8 Q132.9 163.7 133.6 164.1 Q134.2 164.5 134.5 164.9Z" fill="#ece7d3"/>
<path d="M121.9 256.3 Q123.4 257.9 121.6 258.5 Q119.8 259.0 118.8 259.9 Q117.9 260.8 116.8 259.4 Q115.7 258.0 114.9 256.7 Q114.2 255.3 116.1 253.3 Q118.1 251.2 119.3 253.0 Q120.4 254.7 121.9 256.3Z" fill="#ece7d3"/>
<path d="M152.1 286.2 Q153.1 287.2 153.0 288.5 Q152.9 289.8 150.7 290.0 Q148.4 290.2 147.3 289.5 Q146.1 288.7 145.9 287.5 Q145.8 286.3 147.7 285.7 Q149.7 285.2 150.3 285.2 Q151.0 285.2 152.1 286.2Z" fill="#ece7d3"/>
<path d="M134.4 255.9 Q134.2 257.1 133.6 257.5 Q133.1 257.8 132.2 257.9 Q131.3 258.0 130.4 257.6 Q129.5 257.1 129.6 256.2 Q129.7 255.3 130.3 254.4 Q130.9 253.4 132.8 254.1 Q134.7 254.8 134.4 255.9Z" fill="#ece7d3"/>
<path d="M138.1 168.9 Q139.6 169.7 138.5 171.5 Q137.4 173.3 135.2 173.1 Q133.1 173.0 132.5 172.2 Q132.0 171.4 131.7 170.7 Q131.5 169.9 133.0 167.4 Q134.6 164.9 135.6 166.4 Q136.5 168.0 138.1 168.9Z" fill="#ece7d3"/>
<path d="M143.1 261.5 Q144.0 262.8 143.1 263.3 Q142.2 263.8 141.2 264.1 Q140.3 264.4 139.2 264.2 Q138.2 264.0 138.1 263.0 Q138.0 262.0 138.8 261.0 Q139.6 260.0 140.9 260.1 Q142.2 260.1 143.1 261.5Z" fill="#ece7d3"/>
<path d="M102.9 252.2 Q103.4 253.2 103.0 253.6 Q102.5 254.0 101.6 254.4 Q100.7 254.8 99.9 254.1 Q99.1 253.3 99.0 252.4 Q98.9 251.5 100.1 250.8 Q101.3 250.1 101.9 250.6 Q102.5 251.2 102.9 252.2Z" fill="#ece7d3"/>
<path d="M133.0 286.9 Q134.1 287.8 133.2 289.0 Q132.2 290.1 131.8 290.8 Q131.3 291.5 129.4 290.0 Q127.5 288.6 127.7 287.3 Q127.9 286.0 129.0 285.3 Q130.0 284.6 131.0 285.3 Q132.0 285.9 133.0 286.9Z" fill="#ece7d3"/>
<path d="M134.4 233.8 Q134.9 234.6 134.1 235.7 Q133.4 236.7 132.7 237.1 Q132.1 237.4 131.6 236.8 Q131.1 236.1 130.5 234.7 Q129.8 233.3 130.8 232.8 Q131.9 232.3 133.0 232.6 Q134.0 233.0 134.4 233.8Z" fill="#a9d5b3"/>
<path d="M118.2 266.5 Q118.2 267.5 117.8 268.0 Q117.4 268.6 116.5 269.6 Q115.6 270.7 115.3 269.5 Q115.0 268.4 114.7 267.4 Q114.4 266.3 114.6 265.1 Q114.9 263.9 116.6 264.7 Q118.3 265.5 118.2 266.5Z" fill="#a9d5b3"/>
<path d="M127.5 245.4 Q128.0 245.5 127.6 246.4 Q127.1 247.2 126.0 247.7 Q124.9 248.1 124.9 247.4 Q124.9 246.6 124.4 246.0 Q123.9 245.4 124.9 245.2 Q126.0 245.0 126.5 245.1 Q127.0 245.2 127.5 245.4Z" fill="#a9d5b3"/>
<path d="M136.1 191.0 Q136.4 193.0 135.9 193.7 Q135.4 194.3 134.3 194.2 Q133.2 194.1 132.1 194.5 Q131.0 194.8 130.5 192.9 Q129.9 190.9 132.0 189.7 Q134.1 188.5 134.9 188.7 Q135.8 188.9 136.1 191.0Z" fill="#a9d5b3"/>
<path d="M167.7 227.2 Q168.0 227.6 167.6 228.3 Q167.3 228.9 166.9 229.0 Q166.6 229.1 165.6 228.9 Q164.7 228.6 164.8 227.9 Q164.9 227.2 165.8 226.6 Q166.7 226.1 167.0 226.4 Q167.3 226.7 167.7 227.2Z" fill="#a9d5b3"/>
<path d="M167.2 255.7 Q167.2 256.8 166.9 257.7 Q166.6 258.5 166.0 258.6 Q165.4 258.8 164.8 258.5 Q164.2 258.2 164.3 257.2 Q164.4 256.2 165.1 255.8 Q165.8 255.4 166.5 255.0 Q167.2 254.6 167.2 255.7Z" fill="#a9d5b3"/>
<path d="M120.8 204.7 Q121.7 205.6 120.2 206.7 Q118.8 207.7 118.2 208.5 Q117.6 209.4 116.3 208.7 Q115.1 208.1 115.8 206.8 Q116.5 205.5 117.1 204.4 Q117.7 203.4 118.8 203.6 Q119.9 203.8 120.8 204.7Z" fill="#a9d5b3"/>
<path d="M158.0 236.8 Q158.7 237.8 158.3 238.9 Q158.0 240.0 156.8 240.1 Q155.7 240.3 154.7 239.6 Q153.6 238.8 153.6 237.7 Q153.5 236.5 154.6 235.3 Q155.6 234.0 156.4 235.0 Q157.2 235.9 158.0 236.8Z" fill="#a9d5b3"/>
<path d="M136.9 197.3 Q136.8 198.8 136.9 200.1 Q137.1 201.4 135.7 201.8 Q134.3 202.2 134.0 201.0 Q133.8 199.9 133.2 199.1 Q132.6 198.3 133.6 197.3 Q134.6 196.3 135.8 196.1 Q136.9 195.9 136.9 197.3Z" fill="#a9d5b3"/>
<path d="M108.4 287.4 Q109.4 288.0 108.4 288.6 Q107.4 289.2 106.7 289.3 Q105.9 289.5 104.8 289.5 Q103.6 289.5 103.9 288.3 Q104.2 287.0 105.0 286.7 Q105.8 286.3 106.6 286.5 Q107.5 286.7 108.4 287.4Z" fill="#a9d5b3"/>
<path d="M121.7 189.7 Q122.4 191.5 121.7 191.9 Q121.0 192.3 119.8 192.6 Q118.5 192.9 117.9 192.0 Q117.2 191.1 116.4 190.2 Q115.6 189.3 117.3 189.0 Q119.0 188.8 120.0 188.4 Q121.0 188.0 121.7 189.7Z" fill="#a9d5b3"/>
<path d="M106.0 199.6 Q106.6 200.6 106.3 202.0 Q105.9 203.4 104.9 203.3 Q103.8 203.2 101.8 202.5 Q99.7 201.9 100.7 200.9 Q101.7 199.9 102.1 199.0 Q102.5 198.1 103.9 198.3 Q105.3 198.5 106.0 199.6Z" fill="#a9d5b3"/>
<path d="M168.2 216.5 Q168.6 218.0 168.2 218.2 Q167.9 218.5 166.9 218.5 Q165.9 218.6 165.0 218.6 Q164.1 218.6 164.3 217.3 Q164.4 215.9 165.4 215.5 Q166.3 215.2 167.1 215.1 Q167.9 215.0 168.2 216.5Z" fill="#a9d5b3"/>
<path d="M128.8 270.8 Q129.1 271.4 128.8 272.1 Q128.5 272.7 128.0 272.8 Q127.6 273.0 126.9 272.7 Q126.3 272.3 125.7 271.4 Q125.1 270.4 126.3 269.7 Q127.4 269.0 127.9 269.5 Q128.5 270.1 128.8 270.8Z" fill="#a9d5b3"/>
<path d="M107.7 258.9 Q107.3 259.7 107.4 260.4 Q107.4 261.0 106.5 262.0 Q105.6 262.9 105.0 261.7 Q104.4 260.4 104.5 259.9 Q104.7 259.3 105.4 258.6 Q106.2 257.9 107.1 258.0 Q108.1 258.1 107.7 258.9Z" fill="#a9d5b3"/>
<path d="M165.5 171.8 Q165.8 172.6 165.6 173.4 Q165.3 174.3 164.5 174.5 Q163.7 174.7 163.4 174.3 Q163.0 173.9 163.2 173.1 Q163.3 172.3 163.4 171.4 Q163.5 170.5 164.3 170.8 Q165.2 171.0 165.5 171.8Z" fill="#a9d5b3"/>
<path d="M131.8 240.2 Q132.1 240.9 131.9 241.7 Q131.7 242.5 131.2 242.2 Q130.7 242.0 129.8 241.9 Q128.9 241.9 129.1 241.0 Q129.2 240.1 129.9 239.7 Q130.7 239.4 131.1 239.4 Q131.5 239.4 131.8 240.2Z" fill="#a9d5b3"/>
<path d="M117.3 174.6 Q117.7 175.4 117.4 176.3 Q117.1 177.2 116.5 177.2 Q115.9 177.1 115.4 176.3 Q115.0 175.5 114.8 174.9 Q114.6 174.3 115.4 173.8 Q116.2 173.2 116.6 173.5 Q117.0 173.8 117.3 174.6Z" fill="#a9d5b3"/>
<path d="M253.8 417.9 Q255.1 419.1 254.2 420.8 Q253.4 422.5 251.0 424.0 Q248.5 425.6 247.4 423.9 Q246.3 422.1 246.3 419.2 Q246.2 416.3 247.9 415.7 Q249.6 415.1 251.0 415.9 Q252.5 416.6 253.8 417.9Z" fill="#bde0c4"/>
<path d="M224.3 398.0 Q227.3 399.1 225.0 400.4 Q222.8 401.8 220.7 402.9 Q218.7 404.1 215.8 403.8 Q213.0 403.6 214.4 401.2 Q215.9 398.7 216.6 396.2 Q217.3 393.7 219.3 395.3 Q221.2 397.0 224.3 398.0Z" fill="#bde0c4"/>
<path d="M384.6 306.0 Q386.4 308.4 384.2 310.0 Q382.0 311.7 380.9 312.9 Q379.8 314.2 377.9 312.6 Q376.0 311.0 376.1 308.2 Q376.1 305.3 378.5 303.8 Q380.9 302.3 381.9 303.0 Q382.8 303.7 384.6 306.0Z" fill="#bde0c4"/>
<path d="M424.9 302.5 Q425.5 303.2 425.4 304.3 Q425.3 305.5 424.2 305.4 Q423.1 305.3 422.3 305.1 Q421.6 304.8 421.5 303.6 Q421.4 302.5 421.8 301.2 Q422.1 300.0 423.2 301.0 Q424.3 301.9 424.9 302.5Z" fill="#bde0c4"/>
<path d="M322.3 387.6 Q322.0 389.2 321.4 390.3 Q320.8 391.4 319.7 392.3 Q318.7 393.2 316.7 391.6 Q314.7 390.0 315.5 388.6 Q316.3 387.3 317.5 386.1 Q318.8 384.9 320.7 385.4 Q322.7 385.9 322.3 387.6Z" fill="#bde0c4"/>
<path d="M521.8 171.5 Q523.6 173.2 523.2 175.8 Q522.7 178.4 519.8 177.1 Q516.9 175.9 516.1 175.2 Q515.3 174.5 514.9 173.6 Q514.5 172.8 516.1 169.7 Q517.7 166.6 518.9 168.2 Q520.0 169.8 521.8 171.5Z" fill="#bde0c4"/>
<path d="M238.0 388.6 Q238.7 389.5 238.2 392.6 Q237.7 395.6 234.7 395.0 Q231.6 394.4 230.1 393.2 Q228.7 392.0 229.8 390.0 Q231.0 388.0 231.8 387.5 Q232.5 387.0 234.9 387.3 Q237.3 387.7 238.0 388.6Z" fill="#bde0c4"/>
<path d="M311.3 453.6 Q311.6 454.7 311.4 455.7 Q311.3 456.8 309.9 456.3 Q308.6 455.7 307.3 455.6 Q305.9 455.4 306.4 454.2 Q306.9 453.0 308.0 451.7 Q309.0 450.3 310.0 451.5 Q311.1 452.6 311.3 453.6Z" fill="#bde0c4"/>
<path d="M193.2 441.2 Q194.0 441.8 193.3 442.9 Q192.5 443.9 191.7 444.1 Q190.9 444.3 189.9 443.4 Q188.9 442.4 189.6 441.6 Q190.4 440.9 190.9 440.4 Q191.4 439.9 192.0 440.3 Q192.5 440.7 193.2 441.2Z" fill="#bde0c4"/>
<path d="M495.5 135.1 Q496.0 137.0 495.7 139.1 Q495.5 141.2 493.1 141.2 Q490.6 141.1 489.6 140.0 Q488.7 139.0 487.6 137.4 Q486.6 135.8 488.9 135.4 Q491.3 135.1 493.1 134.1 Q495.0 133.2 495.5 135.1Z" fill="#bde0c4"/>
<path d="M514.8 195.1 Q516.1 195.9 515.9 198.2 Q515.7 200.6 512.5 201.7 Q509.3 202.9 508.2 200.9 Q507.1 199.0 507.4 196.9 Q507.8 194.8 508.2 193.2 Q508.6 191.6 511.1 192.9 Q513.6 194.3 514.8 195.1Z" fill="#a9d5b3"/>
<path d="M529.9 176.3 Q530.7 177.8 530.1 179.4 Q529.5 180.9 526.9 181.7 Q524.3 182.6 523.6 181.0 Q523.0 179.5 523.7 178.2 Q524.3 177.0 525.4 175.4 Q526.4 173.8 527.7 174.3 Q529.0 174.7 529.9 176.3Z" fill="#a9d5b3"/>
<path d="M283.3 254.4 Q283.8 255.2 283.0 255.6 Q282.2 256.1 281.4 256.6 Q280.7 257.1 279.8 256.5 Q279.0 256.0 279.6 255.0 Q280.1 254.0 280.3 252.9 Q280.5 251.8 281.6 252.7 Q282.7 253.7 283.3 254.4Z" fill="#a9d5b3"/>
<path d="M275.4 411.7 Q275.7 412.5 275.8 413.1 Q275.8 413.6 274.4 414.1 Q273.1 414.5 272.3 413.5 Q271.5 412.5 271.4 411.6 Q271.4 410.7 272.0 410.2 Q272.7 409.6 273.8 410.3 Q275.0 410.9 275.4 411.7Z" fill="#a9d5b3"/>
<path d="M450.8 276.1 Q450.5 278.1 450.7 279.2 Q450.8 280.2 449.5 280.7 Q448.2 281.1 446.5 279.8 Q444.9 278.5 444.4 277.4 Q444.0 276.3 446.0 274.9 Q448.0 273.4 449.5 273.7 Q451.1 274.1 450.8 276.1Z" fill="#a9d5b3"/>
<path d="M445.2 178.6 Q445.2 178.9 445.7 180.5 Q446.2 182.0 444.5 181.5 Q442.9 181.0 442.2 180.9 Q441.6 180.8 441.4 179.1 Q441.2 177.4 442.4 177.5 Q443.6 177.6 444.5 177.9 Q445.3 178.2 445.2 178.6Z" fill="#a9d5b3"/>
<path d="M389.7 269.4 Q389.7 269.9 389.4 270.5 Q389.1 271.0 388.5 271.4 Q387.9 271.8 387.7 271.2 Q387.6 270.6 387.4 269.9 Q387.1 269.2 387.6 269.1 Q388.0 269.1 388.9 269.0 Q389.8 269.0 389.7 269.4Z" fill="#a9d5b3"/>
<path d="M419.2 246.3 Q419.3 247.0 419.1 248.1 Q418.9 249.1 417.8 249.2 Q416.6 249.3 416.0 248.8 Q415.3 248.3 415.6 247.0 Q415.9 245.6 416.6 245.4 Q417.4 245.1 418.2 245.3 Q419.0 245.5 419.2 246.3Z" fill="#a9d5b3"/>
<path d="M479.8 221.1 Q480.5 223.6 479.2 225.2 Q477.9 226.8 476.2 227.2 Q474.5 227.7 474.1 226.0 Q473.8 224.4 473.4 223.0 Q472.9 221.7 473.8 219.3 Q474.6 217.0 476.8 217.8 Q479.0 218.6 479.8 221.1Z" fill="#a9d5b3"/>
<path d="M392.7 208.0 Q393.9 208.7 392.9 210.0 Q392.0 211.4 390.7 212.3 Q389.5 213.3 388.2 211.8 Q386.9 210.3 387.6 209.5 Q388.3 208.7 389.2 208.2 Q390.0 207.7 390.7 207.5 Q391.4 207.4 392.7 208.0Z" fill="#a9d5b3"/>
<path d="M253.5 419.3 Q254.0 420.3 252.8 422.7 Q251.6 425.1 249.8 425.4 Q248.1 425.8 246.0 424.7 Q243.9 423.6 243.8 420.4 Q243.7 417.2 246.5 417.3 Q249.2 417.5 251.1 417.9 Q253.1 418.3 253.5 419.3Z" fill="#a9d5b3"/>
<path d="M275.4 342.6 Q275.2 343.7 274.9 344.0 Q274.6 344.3 273.9 345.1 Q273.1 345.9 272.7 345.1 Q272.3 344.2 271.9 343.1 Q271.4 341.9 272.4 341.7 Q273.4 341.5 274.5 341.5 Q275.6 341.4 275.4 342.6Z" fill="#a9d5b3"/>
<path d="M437.4 166.8 Q438.7 167.7 437.5 170.3 Q436.4 172.8 435.6 172.2 Q434.8 171.6 433.3 170.9 Q431.7 170.2 431.3 169.1 Q430.8 168.1 432.2 167.0 Q433.6 165.9 434.9 165.9 Q436.1 165.9 437.4 166.8Z" fill="#a9d5b3"/>
<path d="M324.4 223.8 Q325.1 225.0 324.4 226.2 Q323.8 227.4 322.1 228.6 Q320.4 229.9 318.3 229.0 Q316.3 228.1 316.1 226.2 Q315.8 224.4 317.3 222.2 Q318.7 220.1 321.2 221.3 Q323.7 222.6 324.4 223.8Z" fill="#a9d5b3"/>
<path d="M516.7 263.5 Q517.4 263.9 516.9 264.9 Q516.4 265.9 515.9 265.9 Q515.4 265.9 515.0 265.5 Q514.7 265.0 514.0 264.3 Q513.4 263.6 514.2 263.0 Q515.1 262.3 515.6 262.7 Q516.0 263.0 516.7 263.5Z" fill="#a9d5b3"/>
<path d="M151.3 427.6 Q152.1 428.6 151.4 430.3 Q150.6 432.0 149.5 431.6 Q148.4 431.2 147.5 430.1 Q146.7 429.1 146.4 428.3 Q146.0 427.6 147.1 427.0 Q148.2 426.4 149.4 426.5 Q150.6 426.5 151.3 427.6Z" fill="#a9d5b3"/>
<path d="M462.6 149.6 Q463.4 150.2 462.6 150.8 Q461.9 151.5 460.9 152.2 Q459.9 152.8 459.0 152.0 Q458.1 151.2 457.8 149.7 Q457.6 148.2 458.2 147.8 Q458.8 147.4 460.3 148.2 Q461.8 149.0 462.6 149.6Z" fill="#a9d5b3"/>
<path d="M260.8 322.7 Q261.3 324.0 260.4 325.1 Q259.6 326.3 258.6 326.7 Q257.6 327.1 257.1 326.0 Q256.6 324.9 256.4 324.4 Q256.1 323.9 256.5 322.5 Q257.0 321.1 258.7 321.2 Q260.4 321.4 260.8 322.7Z" fill="#a9d5b3"/>
<path d="M278.4 220.1 Q279.4 221.5 277.4 223.6 Q275.5 225.8 274.4 226.8 Q273.4 227.8 271.6 226.0 Q269.8 224.1 269.5 223.0 Q269.3 222.0 270.6 220.5 Q271.9 219.1 274.7 218.9 Q277.5 218.8 278.4 220.1Z" fill="#a9d5b3"/>
<path d="M420.9 265.6 Q423.0 267.5 422.4 268.2 Q421.8 268.9 419.4 269.8 Q417.0 270.6 415.8 269.2 Q414.7 267.8 415.1 266.4 Q415.5 264.9 415.9 263.2 Q416.3 261.5 417.6 262.6 Q418.9 263.6 420.9 265.6Z" fill="#a9d5b3"/>
<path d="M515.0 309.5 Q515.5 311.3 515.2 314.1 Q514.9 317.0 513.0 317.7 Q511.2 318.4 509.9 315.8 Q508.7 313.3 508.0 311.8 Q507.3 310.4 508.8 308.0 Q510.4 305.6 512.5 306.6 Q514.6 307.7 515.0 309.5Z" fill="#a9d5b3"/>
<path d="M269.0 382.3 Q269.1 383.2 268.9 383.7 Q268.6 384.2 268.2 384.2 Q267.7 384.3 266.9 384.2 Q266.1 384.1 266.2 383.2 Q266.3 382.3 266.9 381.5 Q267.4 380.6 268.2 381.0 Q269.0 381.4 269.0 382.3Z" fill="#a9d5b3"/>
<path d="M309.8 447.4 Q309.6 448.9 309.8 449.9 Q309.9 450.9 308.5 450.8 Q307.1 450.7 306.0 450.8 Q305.0 450.9 304.8 449.2 Q304.7 447.5 305.7 446.7 Q306.8 445.9 308.5 445.8 Q310.1 445.8 309.8 447.4Z" fill="#a9d5b3"/>
<path d="M495.6 276.4 Q496.0 277.5 495.1 278.6 Q494.2 279.7 492.8 279.8 Q491.4 279.8 490.1 279.5 Q488.9 279.2 489.3 278.1 Q489.7 276.9 490.0 275.5 Q490.3 274.0 492.7 274.7 Q495.2 275.4 495.6 276.4Z" fill="#a9d5b3"/>
<path d="M144.9 383.3 Q145.3 384.4 144.6 385.2 Q143.9 386.1 143.0 386.6 Q142.1 387.1 141.0 386.3 Q139.9 385.5 140.6 384.6 Q141.3 383.8 142.2 382.9 Q143.1 382.1 143.8 382.2 Q144.6 382.3 144.9 383.3Z" fill="#a9d5b3"/>
<path d="M415.4 214.3 Q415.9 215.3 415.4 216.3 Q415.0 217.3 414.2 217.5 Q413.4 217.6 412.7 217.2 Q411.9 216.9 411.8 216.2 Q411.8 215.4 412.3 214.2 Q412.9 212.9 413.9 213.1 Q415.0 213.2 415.4 214.3Z" fill="#a9d5b3"/>
<path d="M471.4 326.6 Q472.0 328.5 471.6 330.3 Q471.1 332.0 469.3 331.3 Q467.5 330.5 466.2 330.8 Q465.0 331.2 464.7 328.8 Q464.5 326.5 465.9 325.8 Q467.3 325.0 469.1 324.8 Q470.8 324.7 471.4 326.6Z" fill="#a9d5b3"/>
<path d="M509.3 292.2 Q509.4 294.1 508.5 295.3 Q507.6 296.4 506.3 297.1 Q504.9 297.8 504.0 297.6 Q503.2 297.4 503.2 295.5 Q503.2 293.6 503.9 291.7 Q504.6 289.8 506.9 290.1 Q509.2 290.4 509.3 292.2Z" fill="#a9d5b3"/>
<path d="M128.7 345.8 Q129.2 346.1 128.7 347.2 Q128.2 348.4 127.3 348.5 Q126.5 348.5 126.5 347.8 Q126.4 347.0 126.4 346.5 Q126.3 346.0 126.7 345.5 Q127.1 345.1 127.7 345.3 Q128.2 345.6 128.7 345.8Z" fill="#a9d5b3"/>
<path d="M407.4 264.0 Q407.2 264.8 407.1 267.1 Q406.9 269.3 405.3 268.5 Q403.6 267.7 402.7 267.4 Q401.9 267.1 401.1 265.1 Q400.4 263.2 402.4 262.2 Q404.4 261.1 406.0 262.1 Q407.6 263.1 407.4 264.0Z" fill="#a9d5b3"/>
<path d="M505.3 135.8 Q506.8 136.8 505.9 138.1 Q505.1 139.5 503.6 138.9 Q502.1 138.3 500.5 138.4 Q498.9 138.5 499.9 137.3 Q501.0 136.2 502.0 134.1 Q503.0 132.0 503.4 133.4 Q503.7 134.8 505.3 135.8Z" fill="#a9d5b3"/>
<path d="M327.0 317.1 Q326.7 318.9 327.7 320.3 Q328.7 321.7 325.3 322.4 Q321.9 323.2 321.6 321.7 Q321.4 320.2 321.9 319.0 Q322.3 317.7 323.3 316.5 Q324.3 315.3 325.8 315.3 Q327.3 315.3 327.0 317.1Z" fill="#a9d5b3"/>
<path d="M248.3 347.2 Q249.3 348.7 248.1 349.7 Q246.8 350.7 245.9 351.5 Q245.0 352.4 243.8 351.2 Q242.7 350.1 242.3 349.2 Q241.8 348.3 243.0 347.4 Q244.1 346.4 245.7 346.1 Q247.3 345.8 248.3 347.2Z" fill="#a9d5b3"/>
<path d="M442.1 305.1 Q442.2 305.7 442.1 306.2 Q442.1 306.6 441.1 306.8 Q440.1 306.9 439.4 306.8 Q438.7 306.8 439.2 305.6 Q439.7 304.4 439.8 304.0 Q439.9 303.5 440.9 304.0 Q442.0 304.5 442.1 305.1Z" fill="#a9d5b3"/>
<path d="M443.8 252.4 Q443.9 253.5 443.4 254.7 Q442.9 255.8 442.0 255.8 Q441.1 255.8 440.3 255.0 Q439.6 254.1 439.6 253.2 Q439.6 252.2 439.6 251.2 Q439.6 250.2 441.6 250.8 Q443.7 251.3 443.8 252.4Z" fill="#a9d5b3"/>
<path d="M249.9 432.3 Q250.8 432.8 249.9 433.1 Q249.0 433.4 248.1 434.2 Q247.2 435.0 246.3 434.2 Q245.4 433.4 245.9 432.6 Q246.4 431.8 246.9 431.4 Q247.3 431.1 248.2 431.4 Q249.0 431.8 249.9 432.3Z" fill="#a9d5b3"/>
<path d="M330.3 304.8 Q331.1 306.2 329.8 306.9 Q328.4 307.6 327.9 307.7 Q327.4 307.8 325.7 307.8 Q323.9 307.9 324.4 305.6 Q324.9 303.3 325.6 303.1 Q326.3 302.9 327.9 303.2 Q329.4 303.5 330.3 304.8Z" fill="#a9d5b3"/>
<path d="M300.9 324.4 Q301.9 325.9 301.6 328.9 Q301.2 331.9 300.1 331.7 Q299.0 331.5 297.7 329.4 Q296.4 327.3 296.0 326.3 Q295.6 325.2 297.0 324.0 Q298.4 322.7 299.2 322.8 Q299.9 322.9 300.9 324.4Z" fill="#a9d5b3"/>
<path d="M447.6 290.9 Q447.3 292.2 447.3 293.1 Q447.2 294.0 446.0 294.6 Q444.8 295.2 443.2 294.3 Q441.5 293.5 441.2 292.0 Q440.8 290.5 442.2 289.8 Q443.6 289.1 445.7 289.4 Q447.8 289.7 447.6 290.9Z" fill="#a9d5b3"/>
<path d="M283.2 303.9 Q284.5 305.1 284.0 306.8 Q283.5 308.5 281.0 308.9 Q278.5 309.3 278.2 308.4 Q277.8 307.4 278.1 305.6 Q278.4 303.8 278.6 303.0 Q278.8 302.1 280.4 302.4 Q281.9 302.6 283.2 303.9Z" fill="#a9d5b3"/>
<path d="M171.0 436.7 Q171.6 437.2 171.1 438.5 Q170.6 439.8 169.3 440.6 Q168.0 441.3 167.4 440.1 Q166.8 438.9 166.5 438.2 Q166.3 437.6 167.1 436.5 Q167.8 435.4 169.1 435.8 Q170.4 436.2 171.0 436.7Z" fill="#a9d5b3"/>
<path d="M312.4 336.7 Q312.8 337.8 312.9 340.0 Q313.1 342.2 310.4 343.5 Q307.8 344.8 306.1 342.1 Q304.5 339.4 304.4 337.4 Q304.4 335.3 305.6 334.4 Q306.8 333.5 309.4 334.5 Q312.1 335.6 312.4 336.7Z" fill="#a9d5b3"/>
<path d="M311.4 223.4 Q312.2 224.5 311.5 225.5 Q310.8 226.6 308.4 228.1 Q306.0 229.6 304.2 227.5 Q302.3 225.4 302.9 223.4 Q303.6 221.5 305.7 220.1 Q307.8 218.8 309.3 220.6 Q310.7 222.4 311.4 223.4Z" fill="#a9d5b3"/>
<path d="M453.3 227.8 Q452.6 228.9 452.6 229.5 Q452.6 230.2 451.5 230.6 Q450.3 231.0 449.2 230.1 Q448.1 229.2 449.1 228.5 Q450.1 227.8 450.6 227.4 Q451.1 227.1 452.5 226.9 Q453.9 226.8 453.3 227.8Z" fill="#a9d5b3"/>
<path d="M156.4 366.0 Q156.9 366.6 156.5 367.4 Q156.0 368.2 155.1 368.3 Q154.2 368.5 153.8 367.6 Q153.3 366.8 153.4 366.2 Q153.5 365.6 153.9 365.4 Q154.3 365.1 155.1 365.2 Q155.8 365.3 156.4 366.0Z" fill="#a9d5b3"/>
<path d="M401.4 296.8 Q401.5 297.4 401.4 298.8 Q401.3 300.2 399.9 299.9 Q398.6 299.6 397.3 299.0 Q396.1 298.3 396.1 297.4 Q396.1 296.5 397.6 295.2 Q399.1 294.0 400.2 295.1 Q401.3 296.2 401.4 296.8Z" fill="#a9d5b3"/>
<path d="M473.9 303.0 Q474.3 304.4 474.4 305.3 Q474.4 306.2 473.1 306.5 Q471.7 306.7 471.1 306.0 Q470.4 305.2 469.7 304.1 Q468.9 302.9 470.4 301.7 Q472.0 300.5 472.8 301.1 Q473.6 301.7 473.9 303.0Z" fill="#a9d5b3"/>
<path d="M515.7 168.9 Q517.1 170.0 516.3 171.2 Q515.4 172.4 513.5 172.8 Q511.5 173.3 511.1 172.3 Q510.8 171.4 511.0 169.5 Q511.1 167.5 511.5 166.9 Q511.9 166.2 513.1 167.0 Q514.2 167.7 515.7 168.9Z" fill="#a9d5b3"/>
<path d="M340.4 217.4 Q341.4 219.0 340.8 220.8 Q340.3 222.6 338.5 222.4 Q336.7 222.2 336.2 221.0 Q335.8 219.8 334.3 218.0 Q332.9 216.2 335.5 216.2 Q338.1 216.2 338.7 215.9 Q339.3 215.7 340.4 217.4Z" fill="#a9d5b3"/>
<path d="M400.9 271.6 Q401.7 272.1 401.1 272.9 Q400.5 273.8 399.7 274.1 Q398.9 274.4 398.7 273.5 Q398.6 272.6 398.5 272.1 Q398.5 271.5 398.6 271.0 Q398.7 270.5 399.4 270.8 Q400.1 271.1 400.9 271.6Z" fill="#a9d5b3"/>
<path d="M150.3 437.5 Q151.2 439.9 151.1 442.2 Q151.0 444.5 148.7 444.1 Q146.4 443.7 144.0 443.5 Q141.6 443.4 142.1 440.8 Q142.7 438.2 143.7 436.2 Q144.7 434.2 147.0 434.6 Q149.3 435.1 150.3 437.5Z" fill="#a9d5b3"/>
<path d="M359.4 317.1 Q359.3 317.9 359.1 318.7 Q358.9 319.5 358.0 319.5 Q357.1 319.6 356.4 319.1 Q355.6 318.5 355.3 317.7 Q355.1 316.9 356.0 316.6 Q357.0 316.3 358.3 316.3 Q359.6 316.3 359.4 317.1Z" fill="#dfeadf"/>
<path d="M363.1 314.2 Q363.3 315.6 363.2 317.0 Q363.1 318.3 361.7 318.2 Q360.4 318.1 359.5 317.4 Q358.7 316.6 358.5 315.5 Q358.3 314.4 359.4 313.1 Q360.6 311.7 361.7 312.2 Q362.9 312.7 363.1 314.2Z" fill="#dfeadf"/>
<path d="M325.4 314.7 Q325.8 315.7 325.3 316.7 Q324.7 317.8 323.3 317.8 Q321.8 317.9 321.5 317.2 Q321.2 316.5 320.5 315.5 Q319.7 314.5 321.3 314.1 Q322.8 313.7 323.9 313.7 Q325.0 313.7 325.4 314.7Z" fill="#dfeadf"/>
<path d="M362.2 334.2 Q362.8 334.9 362.2 336.1 Q361.5 337.3 360.4 337.0 Q359.3 336.7 358.7 336.3 Q358.2 335.9 357.7 334.7 Q357.3 333.5 358.3 333.2 Q359.2 333.0 360.4 333.2 Q361.6 333.5 362.2 334.2Z" fill="#dfeadf"/>
<path d="M332.2 327.8 Q332.8 328.5 332.2 329.6 Q331.7 330.7 331.0 331.1 Q330.3 331.5 329.0 330.6 Q327.6 329.7 327.8 327.9 Q328.0 326.1 329.2 325.9 Q330.5 325.7 331.1 326.4 Q331.7 327.0 332.2 327.8Z" fill="#dfeadf"/>
<path d="M338.6 331.6 Q339.3 332.6 339.0 333.1 Q338.6 333.7 337.7 333.6 Q336.7 333.6 335.6 333.6 Q334.5 333.6 334.7 332.6 Q334.9 331.6 336.0 330.1 Q337.0 328.5 337.5 329.5 Q337.9 330.5 338.6 331.6Z" fill="#dfeadf"/>
<path d="M329.6 295.9 Q330.1 297.3 330.0 298.4 Q329.9 299.5 329.0 300.0 Q328.1 300.6 327.0 299.0 Q325.9 297.4 325.5 296.3 Q325.1 295.2 325.9 294.3 Q326.7 293.4 328.0 294.0 Q329.2 294.6 329.6 295.9Z" fill="#dfeadf"/>
<path d="M340.5 316.7 Q340.8 317.8 339.6 318.7 Q338.5 319.6 338.0 320.2 Q337.5 320.8 336.0 320.4 Q334.5 320.1 334.8 318.4 Q335.2 316.7 336.0 315.4 Q336.7 314.1 338.5 314.9 Q340.3 315.7 340.5 316.7Z" fill="#dfeadf"/>
<path d="M332.9 311.7 Q334.0 312.0 332.7 313.2 Q331.4 314.4 330.9 314.5 Q330.3 314.6 329.7 313.8 Q329.1 313.1 329.2 312.4 Q329.2 311.7 329.9 310.8 Q330.5 309.9 331.1 310.6 Q331.7 311.4 332.9 311.7Z" fill="#dfeadf"/>
<path d="M327.2 311.2 Q328.4 312.7 327.1 313.2 Q325.8 313.7 325.1 314.9 Q324.4 316.2 323.3 315.1 Q322.2 314.0 321.6 312.3 Q321.0 310.5 322.1 310.1 Q323.2 309.6 324.6 309.6 Q326.0 309.6 327.2 311.2Z" fill="#dfeadf"/>
<path d="M341.1 312.2 Q341.1 312.7 341.0 313.2 Q340.9 313.7 340.2 313.9 Q339.4 314.2 338.7 314.2 Q338.1 314.3 338.1 313.2 Q338.2 312.2 338.6 311.4 Q339.0 310.7 340.1 311.2 Q341.2 311.6 341.1 312.2Z" fill="#dfeadf"/>
<path d="M356.9 331.3 Q357.0 332.1 356.6 332.9 Q356.3 333.8 355.4 334.1 Q354.4 334.4 353.3 333.7 Q352.1 333.0 352.9 332.4 Q353.8 331.8 354.2 331.4 Q354.5 331.0 355.7 330.8 Q356.8 330.6 356.9 331.3Z" fill="#dfeadf"/>
<path d="M339.0 301.6 Q339.6 303.8 338.9 305.0 Q338.2 306.1 337.0 305.9 Q335.8 305.7 334.2 305.2 Q332.7 304.7 333.0 302.5 Q333.3 300.4 334.8 300.8 Q336.2 301.3 337.3 300.4 Q338.4 299.5 339.0 301.6Z" fill="#dfeadf"/>
<path d="M350.7 321.2 Q351.0 322.3 350.3 322.6 Q349.6 322.9 349.1 322.8 Q348.7 322.7 348.3 322.8 Q347.9 322.9 348.0 322.1 Q348.2 321.3 348.4 320.3 Q348.7 319.4 349.6 319.7 Q350.5 320.0 350.7 321.2Z" fill="#dfeadf"/>
<path d="M352.9 325.3 Q353.7 325.7 353.0 326.2 Q352.2 326.7 351.8 327.1 Q351.3 327.4 350.7 327.0 Q350.2 326.6 350.5 326.0 Q350.8 325.3 350.9 324.7 Q350.9 324.1 351.5 324.5 Q352.1 324.9 352.9 325.3Z" fill="#dfeadf"/>
<path d="M361.5 310.4 Q362.1 311.4 361.8 312.4 Q361.5 313.4 360.0 314.1 Q358.6 314.8 358.4 313.4 Q358.3 311.9 357.3 311.3 Q356.2 310.7 357.7 310.0 Q359.1 309.3 360.0 309.3 Q360.9 309.4 361.5 310.4Z" fill="#dfeadf"/>
<path d="M347.3 346.6 Q348.0 347.2 347.6 348.1 Q347.2 348.9 346.1 349.5 Q344.9 350.0 344.6 349.4 Q344.2 348.9 343.8 347.8 Q343.5 346.7 344.2 346.1 Q344.9 345.5 345.7 345.7 Q346.5 345.9 347.3 346.6Z" fill="#dfeadf"/>
<path d="M372.0 305.6 Q372.4 306.4 371.9 306.5 Q371.4 306.7 370.9 307.0 Q370.3 307.3 369.4 306.9 Q368.4 306.4 368.7 305.5 Q368.9 304.6 369.6 304.5 Q370.2 304.4 370.9 304.5 Q371.7 304.7 372.0 305.6Z" fill="#dfeadf"/>
<path d="M326.3 319.8 Q326.1 320.6 326.7 321.4 Q327.3 322.2 326.0 322.2 Q324.7 322.2 324.0 322.0 Q323.3 321.8 323.6 320.7 Q323.9 319.6 324.2 319.1 Q324.5 318.6 325.5 318.9 Q326.5 319.1 326.3 319.8Z" fill="#dfeadf"/>
<path d="M336.1 301.7 Q337.4 302.1 336.4 303.1 Q335.5 304.1 334.4 305.3 Q333.2 306.4 332.1 305.3 Q330.9 304.2 331.1 302.7 Q331.3 301.2 331.8 300.6 Q332.3 300.0 333.5 300.7 Q334.8 301.3 336.1 301.7Z" fill="#dfeadf"/>
<path d="M325.5 292.8 Q325.7 293.5 326.4 294.7 Q327.0 295.9 324.9 296.7 Q322.7 297.5 322.6 296.2 Q322.4 294.9 322.1 293.9 Q321.9 293.0 322.4 292.3 Q322.9 291.7 324.1 291.9 Q325.3 292.1 325.5 292.8Z" fill="#dfeadf"/>
<path d="M332.0 322.0 Q332.5 322.6 332.0 323.5 Q331.5 324.4 330.9 324.3 Q330.2 324.2 329.7 323.9 Q329.1 323.6 329.3 323.1 Q329.4 322.7 329.9 321.8 Q330.4 321.0 331.0 321.2 Q331.6 321.4 332.0 322.0Z" fill="#dfeadf"/>
<polygon points="279.0,433.0 284.0,434.0 286.0,440.0 281.0,442.0" fill="#7ea8f2" stroke="#7ea8f2" stroke-width="1.2" stroke-linejoin="round"/>
<polygon points="286.0,428.0 289.0,430.0 288.0,434.0 285.0,432.0" fill="#7ea8f2" stroke="#7ea8f2" stroke-width="1.2" stroke-linejoin="round"/>
<polygon points="100.0,300.0 108.0,300.0 100.0,306.0" fill="#7ea8f2" stroke="#7ea8f2" stroke-width="1.2" stroke-linejoin="round"/>
<path d="M214.0 134.0 L211.0 140.0 L207.0 144.0 L204.0 150.0 L200.0 154.0 L196.0 158.0" stroke="#7ea8f2" stroke-width="1.6" fill="none" stroke-linejoin="round" stroke-linecap="round"/>
<path d="M211.0 140.0 L214.0 144.0" stroke="#7ea8f2" stroke-width="1.0" fill="none" stroke-linejoin="round" stroke-linecap="round"/>
<path d="M207.0 144.0 L203.0 141.0" stroke="#7ea8f2" stroke-width="1.0" fill="none" stroke-linejoin="round" stroke-linecap="round"/>
<path d="M204.0 150.0 L209.0 150.0" stroke="#7ea8f2" stroke-width="1.0" fill="none" stroke-linejoin="round" stroke-linecap="round"/>
<path d="M405.0 131.0 L404.0 136.0 L408.0 141.0 L410.0 147.0 L408.0 152.0 L404.0 157.0" stroke="#7ea8f2" stroke-width="1.7" fill="none" stroke-linejoin="round" stroke-linecap="round"/>
<path d="M404.0 136.0 L398.0 138.0 L397.0 141.0" stroke="#7ea8f2" stroke-width="1.2" fill="none" stroke-linejoin="round" stroke-linecap="round"/>
<path d="M408.0 141.0 L402.0 143.0" stroke="#7ea8f2" stroke-width="1.0" fill="none" stroke-linejoin="round" stroke-linecap="round"/>
<path d="M410.0 147.0 L413.0 151.0" stroke="#7ea8f2" stroke-width="1.0" fill="none" stroke-linejoin="round" stroke-linecap="round"/>
<path d="M408.0 152.0 L403.0 154.0" stroke="#7ea8f2" stroke-width="1.0" fill="none" stroke-linejoin="round" stroke-linecap="round"/>
<path d="M366.0 231.0 L372.0 234.0 L379.0 234.0 L385.0 229.0 L390.0 231.0 L394.0 240.0" stroke="#7ea8f2" stroke-width="1.4" fill="none" stroke-linejoin="round" stroke-linecap="round"/>
<path d="M379.0 234.0 L377.0 241.0 L378.0 248.0 L379.0 256.0 L373.0 258.0" stroke="#7ea8f2" stroke-width="1.4" fill="none" stroke-linejoin="round" stroke-linecap="round"/>
<path d="M379.0 256.0 L384.0 258.0 L385.0 264.0" stroke="#7ea8f2" stroke-width="1.2" fill="none" stroke-linejoin="round" stroke-linecap="round"/>
<path d="M390.0 231.0 L392.0 226.0" stroke="#7ea8f2" stroke-width="1.0" fill="none" stroke-linejoin="round" stroke-linecap="round"/>
<path d="M196.0 158.0 L185.0 168.0 L180.0 176.0 L175.0 186.0 L173.0 195.0 L174.0 204.0 L175.0 213.0 L166.0 213.0 L160.0 217.0 L155.0 224.0 L152.0 229.0 L146.0 241.0 L140.0 250.0 L137.0 261.0 L131.0 272.0 L125.0 280.0 L116.0 290.0 L106.0 300.0 L100.0 304.0" stroke="#7ea8f2" stroke-width="1.6" fill="none" stroke-linejoin="round" stroke-linecap="round"/>
<path d="M125.0 280.0 L116.0 290.0 L106.0 300.0 L100.0 305.0" stroke="#7ea8f2" stroke-width="4.2" fill="none" stroke-linejoin="round" stroke-linecap="round"/>
<path d="M140.0 250.0 L137.0 261.0 L131.0 272.0 L125.0 280.0" stroke="#7ea8f2" stroke-width="2.8" fill="none" stroke-linejoin="round" stroke-linecap="round"/>
<path d="M174.0 204.0 L183.0 198.0 L199.0 192.0 L208.0 195.0 L214.0 196.0 L220.0 193.0 L237.8 199.5 L248.6 202.6 L256.4 208.8 L259.5 218.0 L261.0 213.5 L264.0 207.0 L276.5 205.7 L287.0 202.6 L296.6 205.7 L307.4 201.0 L318.0 204.0 L330.0 202.6" stroke="#7ea8f2" stroke-width="1.6" fill="none" stroke-linejoin="round" stroke-linecap="round"/>
<path d="M163.0 229.0 L172.6 230.0 L183.5 236.0 L192.7 242.5 L208.2 250.0 L219.3 254.8 L228.5 259.5 L237.8 265.6 L245.5 271.8 L251.7 275.0 L258.0 279.6 L261.0 285.7" stroke="#7ea8f2" stroke-width="1.8" fill="none" stroke-linejoin="round" stroke-linecap="round"/>
<path d="M100.0 314.0 L115.5 314.0 L131.0 312.4 L146.4 315.5 L161.8 317.0 L171.1 321.6 L177.3 327.8 L186.6 329.4" stroke="#7ea8f2" stroke-width="1.5" fill="none" stroke-linejoin="round" stroke-linecap="round"/>
<path d="M225.5 337.0 L230.0 346.4 L231.6 352.5 L234.7 354.0" stroke="#7ea8f2" stroke-width="2.0" fill="none" stroke-linejoin="round" stroke-linecap="round"/>
<path d="M245.5 341.7 L256.4 341.7 L271.8 346.4" stroke="#7ea8f2" stroke-width="1.6" fill="none" stroke-linejoin="round" stroke-linecap="round"/>
<path d="M278.0 310.8 L284.2 315.5 L295.0 315.5" stroke="#7ea8f2" stroke-width="1.5" fill="none" stroke-linejoin="round" stroke-linecap="round"/>
<path d="M310.0 161.0 L318.0 162.5 L330.0 165.5" stroke="#7ea8f2" stroke-width="1.4" fill="none" stroke-linejoin="round" stroke-linecap="round"/>
<path d="M296.5 134.6 L309.0 131.5" stroke="#7ea8f2" stroke-width="2.0" fill="none" stroke-linejoin="round" stroke-linecap="round"/>
<path d="M335.5 213.5 L347.8 222.7 L351.0 226.0" stroke="#7ea8f2" stroke-width="1.5" fill="none" stroke-linejoin="round" stroke-linecap="round"/>
<path d="M484.7 158.1 L479.4 155.4 L473.7 153.6 L468.5 150.5 L462.8 148.6 L456.9 149.7 L450.9 150.0 L445.3 148.0" stroke="#ecd496" stroke-width="0.8" fill="none" stroke-linejoin="round"/>
<path d="M146.5 448.9 L140.5 448.9 L134.7 447.5 L128.7 447.0 L123.1 449.0" stroke="#ecd496" stroke-width="0.8" fill="none" stroke-linejoin="round"/>
<path d="M437.7 321.9 L433.2 318.0 L429.7 313.1 L426.5 308.0 L425.3 302.2 L426.8 296.4 L427.1 290.4 L430.1 285.2 L433.5 280.2" stroke="#ecd496" stroke-width="0.8" fill="none" stroke-linejoin="round"/>
<path d="M451.1 188.6 L445.2 189.5 L439.2 189.6 L433.5 191.6 L428.8 195.2 L424.8 199.7 L419.5 202.6 L415.4 207.0 L413.3 212.6 L413.5 218.6 L416.4 223.9" stroke="#ecd496" stroke-width="0.8" fill="none" stroke-linejoin="round"/>
<path d="M219.5 316.6 L219.8 310.6 L222.4 305.2 L225.3 299.9 L230.0 296.2 L234.4 292.2 L237.6 287.1" stroke="#ecd496" stroke-width="0.8" fill="none" stroke-linejoin="round"/>
<path d="M165.3 331.8 L168.1 337.1 L172.2 341.4 L176.1 346.0 L177.9 351.7 L179.0 357.6 L177.6 363.4 L178.1 369.4 L175.8 375.0 L176.1 381.0 L176.9 386.9" stroke="#ecd496" stroke-width="0.8" fill="none" stroke-linejoin="round"/>
<path d="M111.0 393.3 L110.5 387.3 L112.6 381.7 L114.9 376.2 L119.6 372.4 L125.0 369.8" stroke="#ecd496" stroke-width="0.8" fill="none" stroke-linejoin="round"/>
<path d="M249.8 446.7 L247.9 452.4 L247.3 458.3 L246.4 464.3 L244.0 469.8 L241.9 475.4" stroke="#ecd496" stroke-width="0.8" fill="none" stroke-linejoin="round"/>
<path d="M228.1 160.7 L222.1 160.6 L216.1 160.2 L210.6 157.9 L204.6 157.1 L198.6 156.8 L193.2 154.2 L187.7 151.8 L181.9 150.4 L177.1 146.8" stroke="#ecd496" stroke-width="0.8" fill="none" stroke-linejoin="round"/>
<path d="M396.7 264.7 L397.0 258.7 L398.7 252.9 L400.6 247.3 L402.1 241.5 L402.5 235.5 L404.9 230.0 L407.9 224.8 L408.4 218.8 L407.5 212.9 L404.1 208.0" stroke="#ecd496" stroke-width="0.8" fill="none" stroke-linejoin="round"/>
<path d="M160.9 443.6 L158.6 438.1 L159.0 432.1 L156.9 426.5 L155.2 420.7 L153.7 414.9 L150.7 409.7 L148.1 404.3" stroke="#ecd496" stroke-width="0.8" fill="none" stroke-linejoin="round"/>
<path d="M303.4 276.7 L301.3 271.1 L296.8 267.0 L294.6 261.5 L293.8 255.5" stroke="#ecd496" stroke-width="0.8" fill="none" stroke-linejoin="round"/>
<path d="M273.8 388.1 L279.7 389.0 L285.7 389.3 L291.3 387.2 L297.2 386.3 L303.1 385.2 L309.1 385.3 L315.1 385.6 L321.1 386.3 L327.0 387.0" stroke="#ecd496" stroke-width="0.8" fill="none" stroke-linejoin="round"/>
<path d="M229.1 422.2 L232.8 426.9 L236.5 431.6 L238.7 437.2 L240.0 443.0" stroke="#ecd496" stroke-width="0.8" fill="none" stroke-linejoin="round"/>
<path d="M361.2 225.5 L357.1 229.9 L354.2 235.1 L349.3 238.6 L345.9 243.6 L345.0 249.5 L341.9 254.7" stroke="#ecd496" stroke-width="0.8" fill="none" stroke-linejoin="round"/>
<path d="M388.2 375.9 L391.7 371.0 L392.9 365.1 L392.4 359.2 L390.6 353.5 L390.8 347.5 L391.1 341.5 L389.0 335.8 L386.7 330.3" stroke="#ecd496" stroke-width="0.8" fill="none" stroke-linejoin="round"/>
<path d="M153.0 314.4 L148.9 318.8 L143.8 321.9 L140.2 326.7 L135.5 330.5 L130.6 333.9 L125.8 337.4 L121.3 341.4 L118.8 346.9 L118.1 352.9 L117.0 358.8" stroke="#ecd496" stroke-width="0.8" fill="none" stroke-linejoin="round"/>
<path d="M368.5 383.7 L371.6 388.9 L373.7 394.5 L376.9 399.5 L381.9 402.8 L385.2 407.9 L387.7 413.3 L391.8 417.7 L393.4 423.5" stroke="#ecd496" stroke-width="0.8" fill="none" stroke-linejoin="round"/>
<path d="M493.1 190.2 L498.8 192.0 L503.3 196.0 L508.4 199.0 L512.0 203.8 L516.5 207.8 L519.7 212.9 L524.8 216.1 L530.7 216.7" stroke="#ecd496" stroke-width="0.8" fill="none" stroke-linejoin="round"/>
<path d="M427.7 164.2 L433.6 162.9 L439.5 163.7 L445.5 162.7 L451.3 161.3 L456.8 158.9 L462.5 157.1" stroke="#ecd496" stroke-width="0.8" fill="none" stroke-linejoin="round"/>
<path d="M330.3 409.3 L324.7 411.5 L320.0 415.1 L315.0 418.5 L309.3 420.5 L303.8 422.8 L298.0 424.2" stroke="#ecd496" stroke-width="0.8" fill="none" stroke-linejoin="round"/>
<path d="M254.3 449.2 L252.2 454.8 L250.8 460.6 L251.3 466.6 L250.8 472.6" stroke="#ecd496" stroke-width="0.8" fill="none" stroke-linejoin="round"/>
<path d="M170.6 233.3 L165.9 237.1 L161.4 241.1 L156.0 243.6 L150.3 245.5" stroke="#ecd496" stroke-width="0.8" fill="none" stroke-linejoin="round"/>
<path d="M279.2 210.7 L277.9 216.6 L274.9 221.7 L272.5 227.2 L270.8 233.0 L269.0 238.7 L270.2 244.6 L269.0 250.5 L267.0 256.1 L263.4 260.9" stroke="#ecd496" stroke-width="0.8" fill="none" stroke-linejoin="round"/>
<path d="M179.1 273.6 L181.7 279.0 L186.3 282.8 L189.4 288.0 L193.1 292.8 L197.2 297.1 L202.9 299.2 L208.8 298.5 L214.7 297.3 L220.5 298.8 L225.8 301.7" stroke="#ecd496" stroke-width="0.8" fill="none" stroke-linejoin="round"/>
<path d="M405.8 347.6 L407.1 353.4 L405.4 359.2 L402.5 364.4 L398.0 368.5 L393.7 372.6" stroke="#ecd496" stroke-width="0.8" fill="none" stroke-linejoin="round"/>
<path d="M283.1 353.4 L288.8 351.5 L294.7 350.3 L300.7 350.6 L306.6 351.5 L312.5 352.6 L318.4 352.0 L324.2 350.4 L330.1 351.6 L336.1 351.5 L341.9 350.1" stroke="#ecd496" stroke-width="0.8" fill="none" stroke-linejoin="round"/>
<path d="M313.1 307.9 L313.7 301.9 L315.6 296.2 L316.0 290.3 L317.3 284.4 L320.2 279.2 L323.5 274.1" stroke="#ecd496" stroke-width="0.8" fill="none" stroke-linejoin="round"/>
<path d="M128.2 383.9 L131.1 389.2 L134.9 393.9 L139.7 397.4 L142.5 402.7" stroke="#ecd496" stroke-width="0.8" fill="none" stroke-linejoin="round"/>
<path d="M351.5 399.7 L357.5 399.6 L362.9 402.1 L368.0 405.4 L373.0 408.7" stroke="#ecd496" stroke-width="0.8" fill="none" stroke-linejoin="round"/>
<path d="M218.0 316.6 L223.1 313.5 L229.1 312.8 L234.8 314.6 L240.2 317.2 L245.0 320.8 L249.2 325.1 L254.7 327.6 L259.0 331.7 L263.4 335.8" stroke="#ecd496" stroke-width="0.8" fill="none" stroke-linejoin="round"/>
<path d="M212.8 431.2 L209.0 426.5 L205.6 421.6 L202.5 416.5 L201.0 410.7 L200.4 404.7 L197.7 399.3 L196.6 393.4" stroke="#ecd496" stroke-width="0.8" fill="none" stroke-linejoin="round"/>
<path d="M253.2 320.1 L247.7 322.6 L242.2 325.0 L236.8 327.6 L232.1 331.4 L226.7 334.0 L223.1 338.8 L221.2 344.5" stroke="#ecd496" stroke-width="0.8" fill="none" stroke-linejoin="round"/>
<path d="M233.1 403.6 L238.7 405.7 L244.1 408.3 L247.7 413.0 L250.8 418.2 L254.2 423.1" stroke="#ecd496" stroke-width="0.8" fill="none" stroke-linejoin="round"/>
<path d="M319.0 393.3 L313.2 391.6 L307.6 389.3 L303.4 385.1 L298.1 382.3 L292.1 382.0 L286.2 380.8 L280.3 381.9 L274.4 382.6" stroke="#ecd496" stroke-width="0.8" fill="none" stroke-linejoin="round"/>
<path d="M424.8 168.3 L420.3 172.3 L415.8 176.3 L410.0 177.8 L404.0 177.7" stroke="#ecd496" stroke-width="0.8" fill="none" stroke-linejoin="round"/>
<path d="M143.6 211.3 L139.7 215.8 L137.5 221.4 L135.1 226.9 L134.1 232.8 L135.8 238.5 L137.0 244.4 L135.3 250.2" stroke="#ecd496" stroke-width="0.8" fill="none" stroke-linejoin="round"/>
<path d="M434.6 369.5 L438.7 374.0 L444.3 376.1 L450.3 375.5 L456.1 376.8 L462.1 376.0 L467.9 377.6 L473.8 378.3 L479.7 377.3" stroke="#ecd496" stroke-width="0.8" fill="none" stroke-linejoin="round"/>
<path d="M404.5 349.2 L403.1 355.0 L401.7 360.9 L398.7 366.1 L396.3 371.5 L392.9 376.5 L390.2 381.9 L386.4 386.5 L384.2 392.1 L380.1 396.5 L374.5 398.6" stroke="#ecd496" stroke-width="0.8" fill="none" stroke-linejoin="round"/>
<path d="M111.2 409.1 L110.1 403.2 L111.2 397.3 L113.2 391.7 L116.1 386.4 L120.5 382.4 L124.3 377.7 L127.6 372.7 L132.7 369.6 L138.3 367.5" stroke="#ecd496" stroke-width="0.8" fill="none" stroke-linejoin="round"/>
<path d="M277.1 172.3 L273.7 177.3 L269.6 181.7 L265.0 185.6 L260.0 188.9 L254.1 189.7 L248.3 191.2 L242.3 191.2 L236.3 190.6" stroke="#ecd496" stroke-width="0.8" fill="none" stroke-linejoin="round"/>
<path d="M274.0 240.8 L275.3 246.7 L274.9 252.7 L274.1 258.6 L271.3 263.9" stroke="#ecd496" stroke-width="0.8" fill="none" stroke-linejoin="round"/>
<path d="M307.3 363.0 L312.5 365.9 L316.4 370.4 L321.3 374.0 L327.1 375.4 L332.7 377.5 L338.7 378.0 L343.8 381.2" stroke="#ecd496" stroke-width="0.8" fill="none" stroke-linejoin="round"/>
<path d="M283.7 418.1 L282.0 423.9 L280.2 429.6 L279.8 435.6 L276.8 440.8" stroke="#ecd496" stroke-width="0.8" fill="none" stroke-linejoin="round"/>
<path d="M187.4 200.3 L187.4 206.3 L189.5 211.9 L190.3 217.9 L189.6 223.8 L187.5 229.5 L186.4 235.4 L185.0 241.2 L183.1 246.9" stroke="#ecd496" stroke-width="0.8" fill="none" stroke-linejoin="round"/>
<path d="M466.5 147.7 L461.9 151.5 L456.5 154.2 L452.7 158.8 L450.9 164.6 L451.0 170.6 L448.9 176.2" stroke="#ecd496" stroke-width="0.8" fill="none" stroke-linejoin="round"/>
<path d="M223.1 171.7 L226.8 176.5 L231.3 180.5 L234.0 185.8 L235.1 191.7 L233.6 197.5 L229.5 201.9 L226.9 207.3 L224.0 212.6 L221.6 218.1" stroke="#ecd496" stroke-width="0.8" fill="none" stroke-linejoin="round"/>
<path d="M358.5 325.1 L364.3 326.4 L369.6 329.3 L374.1 333.3 L376.9 338.6" stroke="#ecd496" stroke-width="0.8" fill="none" stroke-linejoin="round"/>
<path d="M455.6 306.3 L450.3 303.4 L444.3 303.2 L438.4 303.9 L432.4 302.9" stroke="#ecd496" stroke-width="0.8" fill="none" stroke-linejoin="round"/>
<path d="M376.3 383.5 L370.9 381.0 L364.9 380.3 L359.3 382.3 L353.3 382.1 L347.3 381.4" stroke="#ecd496" stroke-width="0.8" fill="none" stroke-linejoin="round"/>
<path d="M148.1 451.7 L142.1 451.4 L136.2 452.5 L130.3 453.7 L124.4 454.9 L118.5 454.1 L113.6 450.6 L108.5 447.5 L102.7 446.0 L97.3 443.4 L93.5 438.7" stroke="#ecd496" stroke-width="0.8" fill="none" stroke-linejoin="round"/>
<path d="M152.9 369.5 L150.2 374.9 L149.1 380.8 L149.5 386.7 L149.1 392.7 L149.9 398.7 L152.4 404.1" stroke="#ecd496" stroke-width="0.8" fill="none" stroke-linejoin="round"/>
<path d="M137.8 188.3 L138.2 194.3 L136.1 199.9 L136.7 205.9 L139.9 211.0" stroke="#ecd496" stroke-width="0.8" fill="none" stroke-linejoin="round"/>
<path d="M178.9 143.6 L173.3 141.4 L167.4 140.2 L161.5 139.1 L155.8 137.2 L149.9 137.9 L144.1 136.3 L138.1 136.1 L132.4 134.4" stroke="#ecd496" stroke-width="0.8" fill="none" stroke-linejoin="round"/>
<path d="M158.2 161.4 L157.3 167.3 L153.9 172.3 L149.1 175.9 L143.7 178.4" stroke="#ecd496" stroke-width="0.8" fill="none" stroke-linejoin="round"/>
<path d="M290.3 217.4 L284.5 216.0 L278.6 217.3 L273.9 221.1 L268.7 224.0 L265.4 229.0 L262.2 234.0 L258.3 238.6 L253.1 241.6 L249.9 246.7" stroke="#ecd496" stroke-width="0.8" fill="none" stroke-linejoin="round"/>
<path d="M273.8 232.4 L268.2 230.4 L263.8 226.3 L259.6 222.0 L257.1 216.6" stroke="#ecd496" stroke-width="0.8" fill="none" stroke-linejoin="round"/>
<path d="M498.8 294.4 L504.2 291.8 L508.2 287.3 L513.3 284.1 L519.2 282.9 L525.2 282.8" stroke="#ecd496" stroke-width="0.8" fill="none" stroke-linejoin="round"/>
<path d="M236.3 446.9 L231.2 443.7 L227.1 439.3 L222.7 435.2 L218.9 430.6 L213.5 428.1 L207.5 428.1" stroke="#ecd496" stroke-width="0.8" fill="none" stroke-linejoin="round"/>
<path d="M241.7 335.5 L236.2 337.7 L231.4 341.4 L228.5 346.6 L225.5 351.9 L224.1 357.7 L223.1 363.6 L224.5 369.5" stroke="#ecd496" stroke-width="0.8" fill="none" stroke-linejoin="round"/>
<path d="M139.7 314.9 L145.7 314.3 L151.5 315.6 L157.3 317.1 L162.2 320.5 L167.9 322.6 L173.8 323.7" stroke="#ecd496" stroke-width="0.8" fill="none" stroke-linejoin="round"/>
<path d="M513.3 303.8 L508.0 306.6 L502.0 306.9 L496.2 308.6 L491.4 312.2 L487.1 316.4 L481.7 318.9 L475.7 319.8 L470.4 322.6 L464.4 323.1" stroke="#ecd496" stroke-width="0.8" fill="none" stroke-linejoin="round"/>
<path d="M519.3 182.3 L515.9 177.4 L514.7 171.5 L513.1 165.7 L511.8 159.8" stroke="#ecd496" stroke-width="0.8" fill="none" stroke-linejoin="round"/>
<path d="M492.8 178.7 L498.4 176.5 L504.1 174.6 L510.1 174.0 L515.6 171.6" stroke="#ecd496" stroke-width="0.8" fill="none" stroke-linejoin="round"/>
<path d="M451.1 276.9 L445.2 277.7 L439.4 279.4 L433.4 279.3 L427.5 278.9" stroke="#ecd496" stroke-width="0.8" fill="none" stroke-linejoin="round"/>
<path d="M280.9 158.8 L279.0 164.5 L276.0 169.7 L274.1 175.4 L270.1 179.9 L268.8 185.8 L267.0 191.5" stroke="#ecd496" stroke-width="0.8" fill="none" stroke-linejoin="round"/>
<path d="M298.0 417.0 L292.3 414.9 L286.9 412.3 L283.3 407.6 L277.9 404.9 L274.3 400.1" stroke="#ecd496" stroke-width="0.8" fill="none" stroke-linejoin="round"/>
<path d="M134.9 154.3 L139.8 157.7 L145.2 160.4 L151.0 162.0 L156.3 164.7 L162.2 166.0 L168.2 166.2 L174.2 166.9" stroke="#ecd496" stroke-width="0.8" fill="none" stroke-linejoin="round"/>
<path d="M506.0 179.7 L506.2 185.6 L505.2 191.6 L501.9 196.6 L500.0 202.3 L497.7 207.8 L494.1 212.6" stroke="#ecd496" stroke-width="0.8" fill="none" stroke-linejoin="round"/>
<path d="M331.2 217.7 L334.9 222.4 L338.1 227.5 L341.7 232.3 L343.9 237.8 L345.5 243.6 L347.7 249.2 L346.9 255.2 L348.1 261.1 L351.9 265.7 L357.2 268.6" stroke="#ecd496" stroke-width="0.8" fill="none" stroke-linejoin="round"/>
<path d="M397.6 160.8 L394.3 155.8 L392.9 149.9 L389.8 144.8 L388.8 138.9" stroke="#ecd496" stroke-width="0.8" fill="none" stroke-linejoin="round"/>
<path d="M155.8 287.6 L150.8 290.9 L145.6 293.8 L139.7 295.0 L134.1 297.1 L128.7 299.9 L123.0 301.5" stroke="#ecd496" stroke-width="0.8" fill="none" stroke-linejoin="round"/>
<path d="M428.2 355.4 L429.2 361.3 L430.9 367.1 L434.6 371.8 L437.2 377.2 L440.3 382.4 L442.3 388.0 L442.0 394.0" stroke="#ecd496" stroke-width="0.8" fill="none" stroke-linejoin="round"/>
<path d="M266.4 264.1 L261.5 260.6 L257.6 256.1 L255.2 250.5 L254.1 244.7 L250.3 240.0 L245.6 236.3 L240.1 233.9 L234.1 234.3 L228.1 233.9" stroke="#ecd496" stroke-width="0.8" fill="none" stroke-linejoin="round"/>
<path d="M355.2 248.3 L355.0 242.3 L356.9 236.6 L358.8 230.9 L362.3 226.1 L365.4 221.0" stroke="#ecd496" stroke-width="0.8" fill="none" stroke-linejoin="round"/>
<path d="M301.9 132.3 L304.9 137.5 L305.1 143.5 L307.8 148.9 L310.9 154.0 L311.9 159.9 L311.8 165.9 L312.6 171.8" stroke="#ecd496" stroke-width="0.8" fill="none" stroke-linejoin="round"/>
<path d="M412.1 217.3 L407.3 213.7 L403.7 208.9 L398.5 205.9 L393.8 202.2 L391.0 196.9 L390.7 190.9 L389.5 185.0 L388.1 179.1 L386.9 173.3" stroke="#ecd496" stroke-width="0.8" fill="none" stroke-linejoin="round"/>
<path d="M154.9 202.7 L153.2 196.9 L150.1 191.8 L146.4 187.1 L142.4 182.6 L139.4 177.4 L136.5 172.2 L132.0 168.2 L128.2 163.6 L124.4 159.0 L120.7 154.2" stroke="#ecd496" stroke-width="0.8" fill="none" stroke-linejoin="round"/>
<path d="M292.6 411.8 L287.6 408.5 L284.0 403.7 L282.2 398.0 L279.2 392.7 L277.2 387.1 L277.1 381.1 L276.1 375.2 L275.6 369.2 L276.0 363.2" stroke="#ecd496" stroke-width="0.8" fill="none" stroke-linejoin="round"/>
<path d="M331.8 170.5 L326.0 171.9 L320.8 174.8 L315.7 178.0 L311.4 182.2 L308.2 187.3" stroke="#ecd496" stroke-width="0.8" fill="none" stroke-linejoin="round"/>
<path d="M312.4 378.4 L317.0 382.3 L322.3 385.0 L327.7 387.7 L332.8 390.7" stroke="#ecd496" stroke-width="0.8" fill="none" stroke-linejoin="round"/>
<path d="M261.5 328.0 L260.6 333.9 L262.3 339.6 L265.8 344.5 L267.6 350.2 L270.1 355.7 L270.2 361.7" stroke="#ecd496" stroke-width="0.8" fill="none" stroke-linejoin="round"/>
<path d="M131.6 434.9 L125.9 433.1 L119.9 433.8 L114.0 434.5 L108.2 436.2 L102.4 437.6 L96.4 438.2 L90.5 437.5" stroke="#ecd496" stroke-width="0.8" fill="none" stroke-linejoin="round"/>
<path d="M302.9 133.1 L303.0 139.1 L303.4 145.1 L304.7 151.0 L308.5 155.6 L312.5 160.0 L317.4 163.5 L323.0 165.6 L328.5 168.0 L334.4 169.3 L340.2 168.1" stroke="#ecd496" stroke-width="0.8" fill="none" stroke-linejoin="round"/>
<path d="M202.9 344.6 L198.3 340.7 L195.3 335.5 L191.9 330.6 L189.5 325.1 L186.8 319.7" stroke="#ecd496" stroke-width="0.8" fill="none" stroke-linejoin="round"/>
<path d="M124.8 434.9 L130.1 437.8 L133.4 442.8 L137.5 447.1 L139.9 452.6 L143.2 457.7" stroke="#ecd496" stroke-width="0.8" fill="none" stroke-linejoin="round"/>
<path d="M485.5 277.5 L490.9 275.0 L496.6 273.1 L502.6 272.5 L508.6 272.3 L514.4 270.6" stroke="#ecd496" stroke-width="0.8" fill="none" stroke-linejoin="round"/>
<path d="M427.2 213.3 L426.9 207.3 L424.2 202.0 L420.4 197.3 L416.4 192.9 L414.4 187.2 L413.3 181.3 L413.7 175.3 L413.1 169.3 L411.5 163.6 L409.4 158.0" stroke="#ecd496" stroke-width="0.8" fill="none" stroke-linejoin="round"/>
<path d="M201.1 137.5 L202.8 143.2 L204.5 149.0 L207.6 154.1 L209.3 159.8 L213.4 164.2 L217.5 168.6 L220.5 173.8 L223.6 178.9 L228.4 182.6 L231.4 187.8" stroke="#ecd496" stroke-width="0.8" fill="none" stroke-linejoin="round"/>
<path d="M109.2 431.2 L113.5 427.0 L117.2 422.3 L121.5 418.1 L125.6 413.7 L130.1 409.7 L134.1 405.3 L139.4 402.4" stroke="#ecd496" stroke-width="0.8" fill="none" stroke-linejoin="round"/>
<path d="M233.4 312.8 L239.3 314.0 L245.1 312.8 L250.6 310.3 L256.4 308.7" stroke="#ecd496" stroke-width="0.8" fill="none" stroke-linejoin="round"/>
<path d="M107.4 233.2 L112.5 230.0 L117.8 227.2 L122.4 223.3 L126.0 218.5 L131.3 215.7 L136.8 213.5 L142.5 211.5 L148.4 210.6 L154.4 211.3 L160.3 210.0" stroke="#ecd496" stroke-width="0.8" fill="none" stroke-linejoin="round"/>
<path d="M437.7 287.4 L440.7 292.6 L444.5 297.2 L447.8 302.3 L451.0 307.3 L451.6 313.2 L452.7 319.2" stroke="#ecd496" stroke-width="0.8" fill="none" stroke-linejoin="round"/>
<path d="M412.0 201.2 L416.8 197.5 L421.5 193.8 L424.2 188.5 L428.4 184.2 L430.5 178.6 L431.4 172.6 L432.0 166.7 L430.9 160.8 L429.5 154.9 L427.7 149.2" stroke="#ecd496" stroke-width="0.8" fill="none" stroke-linejoin="round"/>
<path d="M329.0 342.3 L324.9 337.9 L322.7 332.3 L322.8 326.3 L320.7 320.7" stroke="#ecd496" stroke-width="0.8" fill="none" stroke-linejoin="round"/>
<path d="M107.8 371.4 L101.9 370.2 L96.5 367.6 L92.3 363.3 L90.6 357.5 L89.3 351.7 L85.7 346.9 L81.1 343.1 L76.3 339.5" stroke="#ecd496" stroke-width="0.8" fill="none" stroke-linejoin="round"/>
<path d="M477.9 151.4 L482.9 154.8 L486.8 159.3 L492.0 162.3 L497.7 164.3 L502.0 168.5 L505.9 173.0 L509.0 178.2 L513.9 181.6 L519.8 182.4" stroke="#ecd496" stroke-width="0.8" fill="none" stroke-linejoin="round"/>
<path d="M420.0 329.3 L422.3 334.8 L426.0 339.6 L428.0 345.3 L427.9 351.3 L428.8 357.2 L428.3 363.2 L426.0 368.7" stroke="#ecd496" stroke-width="0.8" fill="none" stroke-linejoin="round"/>
<path d="M380.6 332.2 L382.8 326.7 L384.3 320.9 L387.0 315.5 L387.5 309.5 L386.4 303.6 L387.0 297.6" stroke="#ecd496" stroke-width="0.8" fill="none" stroke-linejoin="round"/>
<path d="M249.0 272.1 L252.5 277.0 L255.5 282.2 L256.7 288.1 L257.7 294.0" stroke="#ecd496" stroke-width="0.8" fill="none" stroke-linejoin="round"/>
<path d="M377.9 267.5 L382.5 271.3 L386.3 276.0 L390.9 279.9 L393.8 285.1 L398.6 288.7 L403.9 291.4 L409.9 291.3 L415.8 290.3 L421.8 290.1" stroke="#ecd496" stroke-width="0.8" fill="none" stroke-linejoin="round"/>
<path d="M106.3 358.3 L104.5 352.6 L100.9 347.8 L96.0 344.3 L92.3 339.6" stroke="#ecd496" stroke-width="0.8" fill="none" stroke-linejoin="round"/>
<path d="M369.3 285.2 L364.6 289.0 L360.2 293.1 L357.5 298.4 L353.5 303.0" stroke="#ecd496" stroke-width="0.8" fill="none" stroke-linejoin="round"/>
<path d="M288.0 210.9 L292.1 206.5 L296.7 202.7 L302.0 199.9 L305.9 195.3 L307.2 189.5 L307.8 183.5" stroke="#ecd496" stroke-width="0.8" fill="none" stroke-linejoin="round"/>
<path d="M172.2 325.0 L174.8 330.4 L176.4 336.2 L175.4 342.1 L172.3 347.2 L167.7 351.1 L162.8 354.5 L158.5 358.7 L156.6 364.4" stroke="#ecd496" stroke-width="0.8" fill="none" stroke-linejoin="round"/>
<path d="M403.5 366.9 L407.3 371.5 L412.6 374.4 L418.3 376.2 L424.0 378.2 L429.7 380.0 L434.7 383.2 L440.6 384.5 L446.2 386.7" stroke="#ecd496" stroke-width="0.8" fill="none" stroke-linejoin="round"/>
<path d="M178.0 168.7 L178.5 162.7 L176.1 157.2 L172.2 152.6 L169.1 147.5 L166.1 142.3 L161.0 139.0 L155.2 137.7 L149.2 137.4 L143.5 139.2 L137.5 139.7" stroke="#ecd496" stroke-width="0.8" fill="none" stroke-linejoin="round"/>
<path d="M378.7 339.9 L380.2 334.1 L380.2 328.1 L377.5 322.7 L373.2 318.5 L370.1 313.4 L367.1 308.2 L364.0 303.0 L360.8 298.0 L355.6 294.9 L352.2 290.0" stroke="#ecd496" stroke-width="0.8" fill="none" stroke-linejoin="round"/>
<path d="M345.6 320.6 L339.7 321.0 L333.7 321.1 L327.9 319.5 L321.9 320.0 L316.1 318.5 L310.5 316.3 L304.6 315.1 L298.7 316.0 L292.7 316.7 L287.1 318.7" stroke="#ecd496" stroke-width="0.8" fill="none" stroke-linejoin="round"/>
<path d="M101.8 398.2 L103.3 392.4 L104.2 386.4 L107.4 381.4 L109.3 375.7 L109.7 369.7 L109.9 363.7" stroke="#ecd496" stroke-width="0.8" fill="none" stroke-linejoin="round"/>
<path d="M392.4 163.1 L398.4 162.4 L404.4 163.1 L410.3 163.6 L415.5 166.7" stroke="#ecd496" stroke-width="0.8" fill="none" stroke-linejoin="round"/>
<path d="M470.4 281.4 L466.2 277.2 L461.9 273.0 L456.1 271.3 L450.4 269.6 L445.7 265.8 L443.4 260.3 L439.5 255.7 L434.7 252.2 L428.7 251.3" stroke="#ecd496" stroke-width="0.8" fill="none" stroke-linejoin="round"/>
<path d="M132.5 139.7 L127.6 136.1 L123.1 132.2 L118.5 128.3 L112.7 126.8 L106.7 126.7 L100.7 127.2 L95.1 129.1" stroke="#ecd496" stroke-width="0.8" fill="none" stroke-linejoin="round"/>
<path d="M341.4 153.5 L343.8 148.0 L346.2 142.5 L346.6 136.5 L346.5 130.5" stroke="#ecd496" stroke-width="0.8" fill="none" stroke-linejoin="round"/>
<path d="M482.7 248.0 L481.4 253.8 L479.7 259.6 L478.5 265.5 L475.5 270.7 L471.0 274.7 L465.5 276.9 L461.2 281.1" stroke="#ecd496" stroke-width="0.8" fill="none" stroke-linejoin="round"/>
<path d="M173.0 319.0 L173.7 313.0 L175.4 307.2 L174.1 301.4 L174.6 295.4 L177.5 290.1 L178.2 284.2 L177.1 278.3" stroke="#ecd496" stroke-width="0.8" fill="none" stroke-linejoin="round"/>
<path d="M194.9 173.2 L198.6 177.9 L203.2 181.8 L206.7 186.6 L210.5 191.3 L215.4 194.7 L220.9 197.2 L225.5 201.1 L229.8 205.2" stroke="#ecd496" stroke-width="0.8" fill="none" stroke-linejoin="round"/>
<path d="M398.5 243.5 L393.2 246.3 L389.3 250.9 L386.2 256.0 L383.5 261.3 L380.1 266.3 L374.8 269.2 L370.1 272.9 L364.8 275.6 L359.6 278.7 L353.7 279.6" stroke="#ecd496" stroke-width="0.8" fill="none" stroke-linejoin="round"/>
<path d="M316.5 379.4 L310.9 377.2 L305.5 374.6 L299.9 372.4 L294.4 370.0 L290.1 365.9 L285.4 362.1 L280.6 358.6 L276.1 354.5 L271.5 350.7" stroke="#ecd496" stroke-width="0.8" fill="none" stroke-linejoin="round"/>
<path d="M293.5 279.8 L294.6 285.7 L297.6 290.9 L302.5 294.4 L307.7 297.3 L311.1 302.3 L315.0 306.9 L316.6 312.6" stroke="#ecd496" stroke-width="0.8" fill="none" stroke-linejoin="round"/>
<path d="M447.1 156.6 L453.0 155.8 L459.0 155.8 L464.4 158.5 L467.9 163.4 L471.2 168.4 L475.4 172.7 L479.1 177.4 L481.9 182.7 L486.5 186.5" stroke="#ecd496" stroke-width="0.8" fill="none" stroke-linejoin="round"/>
<path d="M446.5 132.2 L442.8 136.9 L438.9 141.5 L434.2 145.2 L430.5 149.9 L429.0 155.8 L427.5 161.6 L423.4 166.0 L420.9 171.4 L420.0 177.4 L419.9 183.4" stroke="#ecd496" stroke-width="0.8" fill="none" stroke-linejoin="round"/>
<path d="M338.4 181.1 L342.9 185.1 L348.7 186.8 L354.7 186.6 L360.7 186.2" stroke="#ecd496" stroke-width="0.8" fill="none" stroke-linejoin="round"/>
<path d="M288.2 298.8 L283.4 295.2 L277.5 294.2 L271.8 292.2 L266.8 289.0 L263.3 284.1 L262.2 278.2" stroke="#ecd496" stroke-width="0.8" fill="none" stroke-linejoin="round"/>
<path d="M271.4 265.3 L270.1 271.2 L267.0 276.3 L264.8 281.9 L261.3 286.8 L260.3 292.7" stroke="#ecd496" stroke-width="0.8" fill="none" stroke-linejoin="round"/>
<path d="M209.4 270.4 L204.1 267.7 L200.6 262.8 L195.3 260.0 L191.7 255.3 L188.9 249.9" stroke="#ecd496" stroke-width="0.8" fill="none" stroke-linejoin="round"/>
<path d="M528.1 262.4 L531.1 257.2 L534.2 252.1 L538.9 248.4 L542.8 243.8 L547.5 240.0 L552.3 236.5 L557.9 234.3 L563.9 234.6" stroke="#ecd496" stroke-width="0.8" fill="none" stroke-linejoin="round"/>
<path d="M343.1 228.7 L344.4 234.5 L347.6 239.6 L349.2 245.4 L347.9 251.2 L347.5 257.2 L347.0 263.2" stroke="#ecd496" stroke-width="0.8" fill="none" stroke-linejoin="round"/>
<path d="M273.4 237.5 L268.6 241.2 L262.8 242.6 L257.8 245.9 L252.5 248.6 L248.1 252.7 L244.4 257.5 L241.7 262.8 L240.6 268.7" stroke="#ecd496" stroke-width="0.8" fill="none" stroke-linejoin="round"/>
<path d="M353.2 201.4 L350.6 206.8 L348.2 212.3 L345.0 217.4 L339.7 220.3 L333.8 220.8" stroke="#ecd496" stroke-width="0.8" fill="none" stroke-linejoin="round"/>
<path d="M388.8 297.8 L382.8 297.8 L377.4 295.3 L371.4 294.9 L365.5 293.8 L359.6 294.5 L353.6 293.6" stroke="#ecd496" stroke-width="0.8" fill="none" stroke-linejoin="round"/>
<path d="M225.9 443.7 L228.4 449.2 L231.3 454.5 L232.0 460.4 L235.2 465.5 L240.0 469.1 L243.0 474.3 L247.9 477.8 L251.3 482.7" stroke="#ecd496" stroke-width="0.8" fill="none" stroke-linejoin="round"/>
<path d="M364.1 135.3 L359.1 138.6 L356.0 143.7 L352.8 148.8 L350.5 154.3" stroke="#ecd496" stroke-width="0.8" fill="none" stroke-linejoin="round"/>
<path d="M317.3 401.7 L314.1 396.6 L311.7 391.1 L307.9 386.5 L304.4 381.6 L300.6 376.9 L298.4 371.4 L295.3 366.2" stroke="#ecd496" stroke-width="0.8" fill="none" stroke-linejoin="round"/>
<path d="M135.1 331.6 L137.9 336.9 L138.6 342.8 L139.3 348.8 L138.4 354.7 L136.0 360.2 L134.4 366.0 L131.6 371.3" stroke="#ecd496" stroke-width="0.8" fill="none" stroke-linejoin="round"/>
<path d="M439.4 296.2 L433.8 294.1 L429.0 290.6 L425.6 285.6 L424.5 279.7 L425.3 273.8 L428.5 268.7 L429.7 262.8" stroke="#ecd496" stroke-width="0.8" fill="none" stroke-linejoin="round"/>
<path d="M134.7 344.2 L129.7 340.7 L124.9 337.2 L119.5 334.5 L113.9 332.5 L107.9 332.8 L101.9 332.5 L95.9 333.0 L89.9 332.5 L84.2 334.2 L78.4 335.8" stroke="#ecd496" stroke-width="0.8" fill="none" stroke-linejoin="round"/>
<path d="M291.7 338.1 L296.5 341.7 L301.0 345.7 L306.7 347.6 L312.0 350.5 L316.2 354.7 L321.3 357.9 L326.8 360.3 L332.7 361.4 L338.6 362.6 L344.4 361.2" stroke="#ecd496" stroke-width="0.8" fill="none" stroke-linejoin="round"/>
<path d="M134.6 338.4 L130.4 342.7 L128.5 348.4 L125.6 353.6 L120.7 357.1 L117.2 362.0 L113.3 366.5 L107.7 368.8 L103.2 372.7 L100.2 377.9 L97.2 383.1" stroke="#ecd496" stroke-width="0.8" fill="none" stroke-linejoin="round"/>
<path d="M123.3 318.9 L124.2 313.0 L125.4 307.1 L126.6 301.2 L127.5 295.3 L126.5 289.3 L126.2 283.4" stroke="#ecd496" stroke-width="0.8" fill="none" stroke-linejoin="round"/>
<path d="M166.5 352.0 L171.6 355.1 L175.7 359.6 L180.5 363.1 L185.5 366.4" stroke="#ecd496" stroke-width="0.8" fill="none" stroke-linejoin="round"/>
<path d="M497.0 244.4 L492.3 248.1 L488.4 252.6 L485.5 257.9 L483.8 263.7 L481.2 269.1 L478.5 274.4" stroke="#ecd496" stroke-width="0.8" fill="none" stroke-linejoin="round"/>
<path d="M341.4 329.1 L338.9 334.5 L334.5 338.6 L332.6 344.3 L332.4 350.3 L332.3 356.3 L332.6 362.3 L331.4 368.2 L330.9 374.2" stroke="#ecd496" stroke-width="0.8" fill="none" stroke-linejoin="round"/>
<path d="M105.9 342.9 L100.4 345.3 L95.8 349.1 L91.5 353.3 L85.8 355.1 L79.8 354.5 L73.8 354.8 L67.9 356.0 L62.7 359.0 L56.8 359.8" stroke="#ecd496" stroke-width="0.8" fill="none" stroke-linejoin="round"/>
<path d="M499.2 146.0 L494.1 149.1 L488.7 151.7 L483.6 154.8 L478.6 158.2 L475.6 163.4 L471.2 167.5 L468.7 173.0" stroke="#ecd496" stroke-width="0.8" fill="none" stroke-linejoin="round"/>
<path d="M348.5 416.3 L343.1 418.9 L338.8 423.1 L336.4 428.6 L334.6 434.3 L331.0 439.1 L329.0 444.7 L327.1 450.4 L324.6 455.9" stroke="#ecd496" stroke-width="0.8" fill="none" stroke-linejoin="round"/>
<path d="M180.9 252.3 L185.2 248.1 L190.3 244.9 L194.0 240.2 L195.6 234.4 L199.6 230.0 L205.1 227.4 L208.9 222.8 L213.0 218.5 L217.3 214.3 L219.4 208.7" stroke="#ecd496" stroke-width="0.8" fill="none" stroke-linejoin="round"/>
<path d="M293.4 427.4 L287.7 429.2 L282.7 432.5 L278.4 436.7 L272.9 439.2 L267.5 441.8 L261.6 442.1 L255.6 442.4 L249.7 443.5 L243.7 443.8 L238.5 446.8" stroke="#ecd496" stroke-width="0.8" fill="none" stroke-linejoin="round"/>
<path d="M307.1 245.0 L302.1 248.2 L299.2 253.5 L294.4 257.1 L289.6 260.7 L285.4 265.0 L281.4 269.5 L278.2 274.6" stroke="#ecd496" stroke-width="0.8" fill="none" stroke-linejoin="round"/>
<path d="M427.3 277.2 L424.2 272.0 L423.5 266.1 L422.7 260.1 L419.9 254.8 L415.7 250.5 L410.8 247.1 L407.2 242.3 L401.7 239.8" stroke="#ecd496" stroke-width="0.8" fill="none" stroke-linejoin="round"/>
<path d="M205.2 365.1 L209.6 369.2 L212.8 374.3 L214.0 380.2 L213.5 386.1 L214.6 392.0 L217.6 397.2 L221.3 402.0 L226.0 405.8" stroke="#ecd496" stroke-width="0.8" fill="none" stroke-linejoin="round"/>
<path d="M491.3 338.7 L485.8 336.4 L480.1 334.7 L475.3 331.0 L472.0 326.0" stroke="#ecd496" stroke-width="0.8" fill="none" stroke-linejoin="round"/>
<path d="M243.9 306.9 L249.8 308.0 L255.6 306.7 L261.6 306.3 L267.4 304.6 L273.2 303.3 L279.2 303.4 L284.8 305.5 L290.7 306.8 L296.6 305.6" stroke="#ecd496" stroke-width="0.8" fill="none" stroke-linejoin="round"/>
<path d="M366.3 185.8 L361.4 182.4 L357.5 177.9 L355.4 172.3 L351.1 168.0 L346.6 164.1 L343.1 159.2 L338.6 155.3" stroke="#ecd496" stroke-width="0.8" fill="none" stroke-linejoin="round"/>
<path d="M242.5 328.2 L246.8 332.3 L251.6 336.0 L255.8 340.2 L261.3 342.7 L266.9 344.8 L271.5 348.6 L276.1 352.5 L279.3 357.5 L282.2 362.8" stroke="#ecd496" stroke-width="0.8" fill="none" stroke-linejoin="round"/>
<path d="M239.2 290.0 L236.5 295.3 L235.6 301.3 L234.7 307.2 L235.4 313.1 L235.8 319.1 L235.2 325.1" stroke="#ecd496" stroke-width="0.8" fill="none" stroke-linejoin="round"/>
<path d="M507.2 210.8 L507.5 216.8 L505.7 222.5 L501.5 226.8 L497.1 231.0 L492.4 234.6" stroke="#ecd496" stroke-width="0.8" fill="none" stroke-linejoin="round"/>
<path d="M454.7 252.0 L460.6 250.8 L465.2 246.9 L468.3 241.8 L472.9 238.0 L478.7 236.4 L484.6 235.2" stroke="#ecd496" stroke-width="0.8" fill="none" stroke-linejoin="round"/>
<path d="M384.4 271.9 L381.6 277.2 L377.5 281.6 L372.3 284.6 L367.4 288.2 L361.9 290.4 L356.5 293.0 L350.7 294.6 L345.6 297.8" stroke="#ecd496" stroke-width="0.8" fill="none" stroke-linejoin="round"/>
<path d="M405.6 341.6 L411.2 343.9 L417.1 343.5 L423.1 343.7 L429.1 344.4 L434.7 342.3 L440.7 342.6 L446.6 343.9" stroke="#ecd496" stroke-width="0.8" fill="none" stroke-linejoin="round"/>
<path d="M397.1 211.5 L395.9 217.4 L393.4 222.8 L391.9 228.6 L387.9 233.1 L383.3 237.0 L379.5 241.6 L376.9 247.0 L372.1 250.7" stroke="#ecd496" stroke-width="0.8" fill="none" stroke-linejoin="round"/>
<path d="M463.3 156.7 L468.7 154.0 L474.7 153.5 L480.6 152.4 L485.8 149.3 L491.3 147.0" stroke="#ecd496" stroke-width="0.8" fill="none" stroke-linejoin="round"/>
<path d="M121.9 298.2 L125.3 303.1 L127.3 308.8 L130.5 313.8 L133.7 318.9 L135.0 324.8 L138.9 329.3 L144.2 332.2 L149.9 334.2 L155.9 334.2" stroke="#ecd496" stroke-width="0.8" fill="none" stroke-linejoin="round"/>
<path d="M214.6 267.7 L217.7 262.6 L218.3 256.6 L218.7 250.6 L219.7 244.7 L217.9 239.0 L214.2 234.2 L212.0 228.6 L208.5 223.7" stroke="#ecd496" stroke-width="0.8" fill="none" stroke-linejoin="round"/>
<path d="M473.0 258.9 L468.2 255.3 L465.1 250.2 L463.3 244.4 L460.4 239.2 L458.7 233.5 L455.9 228.1" stroke="#ecd496" stroke-width="0.8" fill="none" stroke-linejoin="round"/>
<path d="M374.7 181.2 L370.1 177.4 L364.8 174.4 L360.0 170.9 L357.3 165.5 L352.9 161.5" stroke="#ecd496" stroke-width="0.8" fill="none" stroke-linejoin="round"/>
<path d="M318.5 385.8 L314.8 381.0 L311.2 376.3 L307.5 371.5 L304.9 366.1 L303.8 360.2 L303.3 354.2 L301.9 348.4 L302.2 342.4" stroke="#ecd496" stroke-width="0.8" fill="none" stroke-linejoin="round"/>
<path d="M190.0 145.2 L194.7 149.1 L197.3 154.5 L200.6 159.5 L202.5 165.2 L203.6 171.0 L202.8 177.0 L200.8 182.6 L196.5 186.9 L194.5 192.5 L193.1 198.4" stroke="#ecd496" stroke-width="0.8" fill="none" stroke-linejoin="round"/>
<path d="M297.9 254.5 L296.1 260.2 L294.1 265.9 L291.2 271.1 L286.6 274.9" stroke="#ecd496" stroke-width="0.8" fill="none" stroke-linejoin="round"/>
<path d="M317.5 146.9 L315.0 152.4 L311.7 157.3 L307.5 161.7 L304.2 166.7 L299.8 170.8 L297.1 176.2 L297.1 182.2" stroke="#ecd496" stroke-width="0.8" fill="none" stroke-linejoin="round"/>
<path d="M110.0 186.5 L113.7 181.8 L116.4 176.4 L120.3 171.9 L125.7 169.3 L130.7 165.9 L136.2 163.6" stroke="#ecd496" stroke-width="0.8" fill="none" stroke-linejoin="round"/>
<path d="M163.8 343.6 L169.7 342.5 L174.6 339.0 L180.5 338.0 L186.5 338.0 L191.9 340.6 L196.9 343.8 L202.2 346.6" stroke="#ecd496" stroke-width="0.8" fill="none" stroke-linejoin="round"/>
<path d="M317.0 276.8 L320.0 282.0 L322.3 287.6 L322.9 293.5 L320.6 299.1 L316.9 303.8 L311.5 306.5 L306.0 308.9 L300.6 311.4 L294.7 312.3 L288.8 313.7" stroke="#ecd496" stroke-width="0.8" fill="none" stroke-linejoin="round"/>
<path d="M134.5 150.1 L140.2 151.9 L146.2 151.8 L152.1 150.6 L158.0 151.1 L164.0 151.7 L169.0 155.0 L174.9 156.2" stroke="#ecd496" stroke-width="0.8" fill="none" stroke-linejoin="round"/>
<path d="M240.3 428.4 L239.2 434.3 L238.1 440.2 L236.8 446.0 L235.7 451.9 L235.4 457.9 L233.1 463.5 L231.2 469.2 L227.3 473.7 L221.6 475.8" stroke="#ecd496" stroke-width="0.8" fill="none" stroke-linejoin="round"/>
<path d="M100.0 157.8 L112.4 159.4 L131.0 159.4 L144.8 163.2 L158.7 167.0 L171.0 170.0 L180.4 176.4 L192.7 173.3 L202.0 165.5 L211.3 161.0 L220.0 157.8" stroke="#f0d185" stroke-width="1.1" fill="none" stroke-linejoin="round"/>
<path d="M144.8 163.2 L151.0 174.8 L161.8 181.0 L168.0 188.7 L174.2 198.0 L183.5 207.3 L199.0 210.4 L220.0 213.5" stroke="#f0d185" stroke-width="1.1" fill="none" stroke-linejoin="round"/>
<path d="M100.0 176.4 L115.5 181.0 L137.0 190.3 L151.0 196.5 L165.0 201.0 L177.3 202.6" stroke="#f0d185" stroke-width="1.1" fill="none" stroke-linejoin="round"/>
<path d="M137.0 190.3 L140.0 207.3 L143.3 222.7" stroke="#f0d185" stroke-width="1.1" fill="none" stroke-linejoin="round"/>
<path d="M100.0 222.7 L118.5 218.0 L140.0 207.3" stroke="#f0d185" stroke-width="1.1" fill="none" stroke-linejoin="round"/>
<path d="M180.4 139.3 L189.6 148.5 L195.8 161.0 L208.2 165.5" stroke="#f0d185" stroke-width="1.1" fill="none" stroke-linejoin="round"/>
<path d="M233.0 139.0 L234.7 156.3 L230.0 168.6 L219.3 179.5 L210.0 181.0" stroke="#f0d185" stroke-width="1.1" fill="none" stroke-linejoin="round"/>
<path d="M285.7 154.7 L278.0 139.0 L275.0 130.0" stroke="#f0d185" stroke-width="1.1" fill="none" stroke-linejoin="round"/>
<path d="M247.0 133.0 L253.3 147.0 L259.5 170.0 L261.0 185.6 L256.4 201.0 L248.6 216.5 L241.0 230.0" stroke="#f0d185" stroke-width="1.1" fill="none" stroke-linejoin="round"/>
<path d="M210.0 199.5 L241.0 201.0 L256.4 201.0 L268.7 207.3 L273.4 226.0 L276.5 241.0 L278.0 261.0 L282.6 271.8 L284.2 281.0" stroke="#f0d185" stroke-width="1.1" fill="none" stroke-linejoin="round"/>
<path d="M172.6 210.0 L161.8 225.5 L160.3 239.4 L151.0 261.0 L144.8 276.5 L135.5 296.5 L131.0 310.0" stroke="#f0d185" stroke-width="1.1" fill="none" stroke-linejoin="round"/>
<path d="M100.0 256.4 L131.0 254.8 L151.0 261.0 L171.0 271.8 L186.6 275.0 L220.0 278.0 L245.5 275.0 L261.0 278.0 L287.3 276.5 L330.0 279.6" stroke="#f0d185" stroke-width="1.1" fill="none" stroke-linejoin="round"/>
<path d="M158.7 293.5 L172.6 302.7 L186.6 310.0" stroke="#f0d185" stroke-width="1.1" fill="none" stroke-linejoin="round"/>
<path d="M196.0 213.0 L197.4 255.0" stroke="#f0d185" stroke-width="1.1" fill="none" stroke-linejoin="round"/>
<path d="M216.0 213.0 L208.0 261.0 L200.5 275.0 L183.5 293.5" stroke="#f0d185" stroke-width="1.1" fill="none" stroke-linejoin="round"/>
<path d="M240.9 234.7 L228.5 248.6 L219.3 264.0 L213.0 279.6 L210.0 290.4" stroke="#f0d185" stroke-width="1.1" fill="none" stroke-linejoin="round"/>
<path d="M261.0 278.0 L245.5 275.0 L233.2 281.0 L219.3 290.4 L210.0 295.0" stroke="#f0d185" stroke-width="1.1" fill="none" stroke-linejoin="round"/>
<path d="M253.3 301.2 L271.8 299.6 L302.7 296.5 L330.0 292.0" stroke="#f0d185" stroke-width="1.1" fill="none" stroke-linejoin="round"/>
<path d="M253.3 301.2 L259.5 290.4 L261.0 278.0" stroke="#f0d185" stroke-width="1.1" fill="none" stroke-linejoin="round"/>
<path d="M210.0 231.6 L240.9 234.7 L268.0 225.0 L282.0 210.0 L302.7 210.0" stroke="#f0d185" stroke-width="1.1" fill="none" stroke-linejoin="round"/>
<path d="M304.3 251.7 L310.5 237.8 L319.7 225.5 L330.0 219.3" stroke="#f0d185" stroke-width="1.1" fill="none" stroke-linejoin="round"/>
<path d="M320.0 154.7 L337.0 155.5 L349.4 157.8 L351.0 170.2 L338.5 182.5 L343.2 198.0 L330.0 210.0 L322.0 230.0" stroke="#f0d185" stroke-width="1.1" fill="none" stroke-linejoin="round"/>
<path d="M355.5 140.8 L361.7 150.0 L371.0 162.5 L372.5 174.8 L377.2 191.8 L378.7 198.0 L394.2 211.9 L402.0 224.3" stroke="#f0d185" stroke-width="1.1" fill="none" stroke-linejoin="round"/>
<path d="M412.7 130.0 L414.3 139.3 L420.5 147.0 L428.2 147.0 L440.0 148.5 L451.0 144.0 L471.0 134.6 L478.7 139.3 L500.4 147.0 L512.7 145.5 L531.0 145.5" stroke="#f0d185" stroke-width="1.1" fill="none" stroke-linejoin="round"/>
<path d="M420.5 147.0 L422.0 161.0 L428.2 170.2 L431.3 182.5 L440.0 188.7" stroke="#f0d185" stroke-width="1.1" fill="none" stroke-linejoin="round"/>
<path d="M417.4 198.0 L412.7 210.4 L406.6 222.7" stroke="#f0d185" stroke-width="1.1" fill="none" stroke-linejoin="round"/>
<path d="M494.2 145.5 L495.7 161.0 L494.2 176.4 L492.6 188.7 L500.4 196.5 L503.5 211.9 L500.4 230.0 L506.6 250.0 L512.7 270.0" stroke="#f0d185" stroke-width="1.1" fill="none" stroke-linejoin="round"/>
<path d="M455.5 196.5 L435.5 210.4 L420.0 216.5" stroke="#f0d185" stroke-width="1.1" fill="none" stroke-linejoin="round"/>
<path d="M458.6 207.3 L444.7 216.5 L429.3 230.0" stroke="#f0d185" stroke-width="1.1" fill="none" stroke-linejoin="round"/>
<path d="M320.0 245.0 L335.5 242.0 L355.5 243.5 L371.0 240.5 L394.2 246.6 L412.7 243.5 L428.2 237.4 L440.0 234.3 L444.7 225.0" stroke="#f0d185" stroke-width="1.1" fill="none" stroke-linejoin="round"/>
<path d="M320.0 257.5 L338.5 257.5 L358.6 260.5 L381.8 257.5 L394.2 252.8 L412.7 254.4 L443.2 254.4 L466.4 253.6 L489.6 254.4 L512.7 252.8 L531.0 251.3" stroke="#f0d185" stroke-width="1.1" fill="none" stroke-linejoin="round"/>
<path d="M335.5 242.0 L347.8 255.9 L335.5 265.2 L334.0 286.8 L337.0 305.4 L338.5 325.0" stroke="#f0d185" stroke-width="1.1" fill="none" stroke-linejoin="round"/>
<path d="M320.0 279.0 L335.5 279.0 L354.0 277.5 L371.0 272.9 L385.0 279.0 L397.3 277.5 L406.6 274.5 L420.0 285.3 L441.6 284.5 L463.3 282.2 L481.8 276.0 L497.3 272.9 L506.6 271.4 L531.0 269.8" stroke="#f0d185" stroke-width="1.1" fill="none" stroke-linejoin="round"/>
<path d="M406.6 274.5 L412.7 255.9 L419.0 237.4 L422.0 225.0" stroke="#f0d185" stroke-width="1.1" fill="none" stroke-linejoin="round"/>
<path d="M397.3 277.5 L386.5 290.0 L378.7 302.3 L374.0 317.7 L371.0 325.0" stroke="#f0d185" stroke-width="1.1" fill="none" stroke-linejoin="round"/>
<path d="M415.8 290.0 L405.0 302.3 L394.2 314.6 L389.6 325.0" stroke="#f0d185" stroke-width="1.1" fill="none" stroke-linejoin="round"/>
<path d="M412.7 283.7 L428.2 283.7 L440.0 285.3" stroke="#f0d185" stroke-width="1.1" fill="none" stroke-linejoin="round"/>
<path d="M400.4 225.0 L406.6 245.0 L412.7 254.4" stroke="#f0d185" stroke-width="1.1" fill="none" stroke-linejoin="round"/>
<path d="M394.2 246.6 L397.3 268.3 L406.6 274.5" stroke="#f0d185" stroke-width="1.1" fill="none" stroke-linejoin="round"/>
<path d="M444.7 225.0 L447.8 248.2 L443.2 263.6 L429.3 271.4 L420.0 276.0" stroke="#f0d185" stroke-width="1.1" fill="none" stroke-linejoin="round"/>
<path d="M420.0 317.7 L438.5 311.6 L454.0 310.0" stroke="#f0d185" stroke-width="1.1" fill="none" stroke-linejoin="round"/>
<path d="M137.1 349.5 L118.5 358.7 L109.3 364.9 L100.0 368.0" stroke="#f0d185" stroke-width="1.1" fill="none" stroke-linejoin="round"/>
<path d="M115.5 335.5 L121.6 346.4 L137.1 349.5" stroke="#f0d185" stroke-width="1.1" fill="none" stroke-linejoin="round"/>
<path d="M155.6 355.6 L164.9 369.6 L171.1 377.3 L180.4 386.5 L186.6 400.0 L193.0 407.0 L197.5 419.0 L205.0 425.0 L220.0 432.5" stroke="#f0d185" stroke-width="1.1" fill="none" stroke-linejoin="round"/>
<path d="M137.1 349.5 L131.0 365.0 L123.2 377.3 L118.5 389.6 L118.0 380.0 L119.5 392.0 L124.0 402.5 L142.0 408.5 L152.5 419.0 L155.5 431.0 L157.0 437.0" stroke="#f0d185" stroke-width="1.1" fill="none" stroke-linejoin="round"/>
<path d="M100.0 405.5 L115.0 405.5 L130.0 410.0 L140.5 414.5 L152.5 419.0" stroke="#f0d185" stroke-width="1.1" fill="none" stroke-linejoin="round"/>
<path d="M122.5 414.5 L124.0 425.0 L118.0 437.0 L109.0 447.5 L106.0 455.0" stroke="#f0d185" stroke-width="1.1" fill="none" stroke-linejoin="round"/>
<path d="M184.0 438.5 L181.0 447.5 L178.0 455.0" stroke="#f0d185" stroke-width="1.1" fill="none" stroke-linejoin="round"/>
<path d="M210.0 331.0 L219.3 331.0 L240.9 323.2 L256.4 315.5 L265.6 300.0" stroke="#f0d185" stroke-width="1.1" fill="none" stroke-linejoin="round"/>
<path d="M220.8 300.0 L219.3 331.0 L220.8 361.8 L213.0 377.3" stroke="#f0d185" stroke-width="1.1" fill="none" stroke-linejoin="round"/>
<path d="M305.8 300.0 L309.0 335.5" stroke="#f0d185" stroke-width="1.1" fill="none" stroke-linejoin="round"/>
<path d="M281.0 371.0 L275.0 385.0 L268.7 392.7 L262.5 400.0" stroke="#f0d185" stroke-width="1.1" fill="none" stroke-linejoin="round"/>
<path d="M100.0 330.0 L115.0 331.0 L140.0 320.0 L160.0 318.0 L180.0 310.0 L198.0 312.0 L210.0 300.0" stroke="#f0d185" stroke-width="1.1" fill="none" stroke-linejoin="round"/>
<path d="M183.5 341.7 L190.0 360.0 L200.0 370.0 L220.0 378.0" stroke="#f0d185" stroke-width="1.1" fill="none" stroke-linejoin="round"/>
<path d="M202.0 340.2 L208.0 355.0 L215.0 362.0 L232.0 362.0 L250.0 352.0 L266.0 349.0" stroke="#f0d185" stroke-width="1.1" fill="none" stroke-linejoin="round"/>
<path d="M351.0 349.5 L335.5 361.8 L327.7 372.6 L320.0 380.4" stroke="#f0d185" stroke-width="1.1" fill="none" stroke-linejoin="round"/>
<path d="M351.0 349.5 L360.2 365.0 L366.4 374.2" stroke="#f0d185" stroke-width="1.1" fill="none" stroke-linejoin="round"/>
<path d="M381.8 340.2 L386.5 349.5 L389.6 361.8" stroke="#f0d185" stroke-width="1.1" fill="none" stroke-linejoin="round"/>
<path d="M100.0 270.0 L120.0 268.0 L137.0 261.0" stroke="#f0d185" stroke-width="1.1" fill="none" stroke-linejoin="round"/>
<path d="M168.0 188.0 L190.0 180.0 L210.0 181.0" stroke="#f0d185" stroke-width="1.1" fill="none" stroke-linejoin="round"/>
<path d="M194.0 136.0 L196.0 131.0 L215.0 131.0" stroke="#f0d185" stroke-width="1.1" fill="none" stroke-linejoin="round"/>
<path d="M503.5 232.7 L506.6 248.2 L509.6 263.6 L515.8 274.5 L512.7 286.8 L506.6 299.2 L500.4 325.0" stroke="#f0d185" stroke-width="1.1" fill="none" stroke-linejoin="round"/>
<path d="M520.5 228.0 L522.0 248.2 L519.0 263.6 L512.7 271.4" stroke="#f0d185" stroke-width="1.1" fill="none" stroke-linejoin="round"/>
<path d="M451.0 229.6 L455.5 238.9 L452.5 251.3" stroke="#f0d185" stroke-width="1.1" fill="none" stroke-linejoin="round"/>
<path d="M420.0 234.3 L435.5 232.7 L444.7 225.0" stroke="#f0d185" stroke-width="1.1" fill="none" stroke-linejoin="round"/>
<path d="M475.6 263.6 L491.0 256.0 L503.5 253.0" stroke="#f0d185" stroke-width="1.1" fill="none" stroke-linejoin="round"/>
<path d="M503.5 253.0 L512.7 240.5 L531.0 234.3" stroke="#f0d185" stroke-width="1.1" fill="none" stroke-linejoin="round"/>
<path d="M420.0 297.6 L435.5 293.0 L454.0 290.0 L466.4 286.8" stroke="#f0d185" stroke-width="1.1" fill="none" stroke-linejoin="round"/>
<path d="M491.0 293.0 L506.6 290.0 L531.0 286.8" stroke="#f0d185" stroke-width="1.1" fill="none" stroke-linejoin="round"/>
<path d="M512.7 286.8 L528.0 302.0 L531.0 311.6" stroke="#f0d185" stroke-width="1.1" fill="none" stroke-linejoin="round"/>
<path d="M466.4 308.5 L475.6 299.2 L485.0 293.0" stroke="#f0d185" stroke-width="1.1" fill="none" stroke-linejoin="round"/>
<path d="M420.0 276.0 L429.3 271.4 L443.2 263.6" stroke="#f0d185" stroke-width="1.1" fill="none" stroke-linejoin="round"/>
<path d="M466.4 253.0 L480.0 240.0 L492.0 228.0" stroke="#f0d185" stroke-width="1.1" fill="none" stroke-linejoin="round"/>
<path d="M285.7 154.7 L290.4 168.6 L294.2 181.0 L298.9 190.3 L304.3 204.2 L302.7 230.0 L299.6 241.0 L304.3 251.7 L312.0 268.7 L318.2 284.2 L321.3 296.5 L324.4 310.0 L335.5 331.0 L343.2 343.3 L351.0 349.5" stroke="#f0d185" stroke-width="1.7" fill="none" stroke-linejoin="round"/>
<path d="M240.9 234.7 L256.4 250.2 L271.8 261.0 L287.3 275.0 L301.2 285.7 L318.2 290.4 L330.0 292.0 L338.5 300.0 L340.0 320.0 L351.0 349.5" stroke="#f0d185" stroke-width="1.7" fill="none" stroke-linejoin="round"/>
<path d="M351.0 349.5 L366.4 344.8 L381.8 340.2 L400.4 331.0 L419.0 318.5 L440.0 309.3 L454.0 310.0 L475.6 308.5 L491.1 313.0" stroke="#f0d185" stroke-width="1.7" fill="none" stroke-linejoin="round"/>
<path d="M378.7 300.0 L375.6 315.5 L366.4 321.6 L354.0 331.0 L351.0 349.5" stroke="#f0d185" stroke-width="1.7" fill="none" stroke-linejoin="round"/>
<path d="M398.8 231.0 L397.3 216.5 L394.2 199.5 L395.7 181.0 L398.8 161.0 L395.7 145.5 L388.0 131.5" stroke="#f0d185" stroke-width="1.7" fill="none" stroke-linejoin="round"/>
<path d="M440.0 148.5 L435.5 161.0 L440.0 168.6 L449.4 184.0 L455.5 196.5 L458.6 207.3 L461.7 216.5 L466.4 230.0 L466.4 252.8 L475.6 263.6 L481.8 276.0 L485.0 283.7 L491.1 293.0 L492.6 305.4 L491.1 313.0" stroke="#f0d185" stroke-width="1.7" fill="none" stroke-linejoin="round"/>
<path d="M219.3 331.0 L240.9 324.7 L261.0 331.0 L281.0 338.6 L302.7 343.3 L318.2 347.9 L330.0 349.5 L351.0 349.5" stroke="#f0d185" stroke-width="1.7" fill="none" stroke-linejoin="round"/>
<path d="M137.1 349.5 L151.0 351.0 L168.0 344.8 L183.5 341.7 L202.0 340.2 L220.0 338.6 L240.0 335.0 L261.0 331.0" stroke="#f0d185" stroke-width="1.7" fill="none" stroke-linejoin="round"/>
<path d="M249.0 440.0 L251.0 431.0 L252.0 419.0 L253.5 410.0 L256.5 402.5 L265.5 395.0 L273.0 386.0 L281.0 371.0 L296.6 357.2 L309.0 335.5" stroke="#f0d185" stroke-width="1.7" fill="none" stroke-linejoin="round"/>
<path d="M261.0 429.5 L267.0 423.5 L277.5 419.0 L288.0 411.5 L297.0 402.5 L306.0 395.0 L318.0 389.0 L330.0 386.0 L351.0 349.5" stroke="#f0d185" stroke-width="1.7" fill="none" stroke-linejoin="round"/>
<path d="M100.0 432.5 L115.0 435.5 L130.0 437.0 L145.0 435.5 L157.0 437.0 L172.0 432.5 L190.0 428.0 L205.0 423.5 L220.0 432.5 L244.5 441.5 L255.0 443.0 L276.0 444.5" stroke="#f0d185" stroke-width="1.7" fill="none" stroke-linejoin="round"/>
<path d="M146.4 234.7 L160.3 239.4 L177.3 247.1 L197.4 253.3 L220.0 261.0 L240.9 234.7" stroke="#f0d185" stroke-width="1.7" fill="none" stroke-linejoin="round"/>
<path d="M100.0 225.5 L120.0 228.5 L146.4 234.7" stroke="#f0d185" stroke-width="1.7" fill="none" stroke-linejoin="round"/>
<path d="M210.0 156.3 L237.0 157.0 L258.0 153.2 L285.7 154.7 L302.7 153.2 L315.0 154.7 L330.0 151.6 L337.0 155.5 L349.4 157.8 L371.0 162.5 L389.6 165.5 L400.4 165.5 L412.7 174.8 L420.5 187.2 L428.2 191.8 L440.0 195.0 L455.5 196.5 L481.8 195.0 L497.3 198.0 L512.7 207.3 L531.0 216.5" stroke="#f0d185" stroke-width="1.7" fill="none" stroke-linejoin="round"/>
<path d="M261.0 185.6 L296.6 191.0 L318.0 188.7 L330.0 185.0 L338.5 182.5 L358.6 184.0 L374.0 187.2 L389.6 191.8 L412.7 191.8 L428.2 195.0" stroke="#f0d185" stroke-width="1.7" fill="none" stroke-linejoin="round"/>
<path d="M158.7 293.5 L169.6 292.0 L192.7 275.0 L220.0 262.5" stroke="#f0d185" stroke-width="1.7" fill="none" stroke-linejoin="round"/>
<path d="M466 293 Q490 285 531 274" stroke="#9aa89c" stroke-width="0.5" fill="none" stroke-dasharray="1.5 1"/>
<path d="M186 329 L200 328.6 L220 327.8" stroke="#9aa89c" stroke-width="0.5" fill="none" stroke-dasharray="1.5 1"/>
<path d="M219 331 L228 345 L233 370 L241 385 L247 400" stroke="#9aa89c" stroke-width="0.5" fill="none" stroke-dasharray="1.5 1"/>
<polygon points="276.0,455.0 282.0,444.5 291.0,435.5 297.0,429.5 300.0,423.5 306.0,414.5 315.0,407.0 330.0,398.0 330.8,400.0 338.5,389.6 351.0,381.9 364.8,375.7 374.0,366.5 385.0,363.4 397.3,365.0 400.4,369.6 406.6,372.6 403.5,366.5 409.6,360.3 415.8,354.0 425.0,347.9 431.3,341.7 436.0,335.5 443.2,329.4 458.6,329.4 466.4,327.8 472.5,331.0 481.8,332.5 494.2,332.5 506.6,329.4 518.9,327.8 531.0,327.5 531.0,456.0 276.0,456.0" fill="#93b3f2"/>
<polygon points="400.4,368.0 408.1,371.0 406.6,374.2 400.4,372.6" fill="#a8d5b3"/>
<polygon points="441.6,337.0 452.5,337.9 447.8,340.2 443.2,340.2" fill="#a8d5b3"/>
<rect x="217.8" y="134.3" width="9.2" height="6.2" rx="1.6" fill="#fff" stroke="#8c8c8c" stroke-width="0.5"/>
<text x="222.4" y="138.9" font-size="4" fill="#555" text-anchor="middle">483</text>
<rect x="177.9" y="149.4" width="9.2" height="6.2" rx="1.6" fill="#fff" stroke="#8c8c8c" stroke-width="0.5"/>
<text x="182.5" y="154.0" font-size="4" fill="#555" text-anchor="middle">364</text>
<rect x="209.4" y="149.4" width="9.2" height="6.2" rx="1.6" fill="#fff" stroke="#8c8c8c" stroke-width="0.5"/>
<text x="214.0" y="154.0" font-size="4" fill="#555" text-anchor="middle">365</text>
<rect x="257.7" y="149.4" width="9.2" height="6.2" rx="1.6" fill="#fff" stroke="#8c8c8c" stroke-width="0.5"/>
<text x="262.3" y="154.0" font-size="4" fill="#555" text-anchor="middle">365</text>
<rect x="308.4" y="151.9" width="9.2" height="6.2" rx="1.6" fill="#fff" stroke="#8c8c8c" stroke-width="0.5"/>
<text x="313.0" y="156.5" font-size="4" fill="#555" text-anchor="middle">365</text>
<rect x="264.4" y="160.4" width="9.2" height="6.2" rx="1.6" fill="#fff" stroke="#8c8c8c" stroke-width="0.5"/>
<text x="269.0" y="165.0" font-size="4" fill="#555" text-anchor="middle">497</text>
<rect x="293.4" y="160.4" width="9.2" height="6.2" rx="1.6" fill="#fff" stroke="#8c8c8c" stroke-width="0.5"/>
<text x="298.0" y="165.0" font-size="4" fill="#555" text-anchor="middle">452</text>
<rect x="176.4" y="165.1" width="9.2" height="6.2" rx="1.6" fill="#fff" stroke="#8c8c8c" stroke-width="0.5"/>
<text x="181.0" y="169.7" font-size="4" fill="#555" text-anchor="middle">483</text>
<rect x="151.8" y="170.9" width="9.2" height="6.2" rx="1.6" fill="#fff" stroke="#8c8c8c" stroke-width="0.5"/>
<text x="156.4" y="175.5" font-size="4" fill="#555" text-anchor="middle">158</text>
<rect x="209.4" y="165.9" width="9.2" height="6.2" rx="1.6" fill="#fff" stroke="#8c8c8c" stroke-width="0.5"/>
<text x="214.0" y="170.5" font-size="4" fill="#555" text-anchor="middle">364</text>
<rect x="230.2" y="162.6" width="9.2" height="6.2" rx="1.6" fill="#fff" stroke="#8c8c8c" stroke-width="0.5"/>
<text x="234.8" y="167.2" font-size="4" fill="#555" text-anchor="middle">154</text>
<rect x="241.2" y="163.2" width="9.2" height="6.2" rx="1.6" fill="#fff" stroke="#8c8c8c" stroke-width="0.5"/>
<text x="245.8" y="167.8" font-size="4" fill="#555" text-anchor="middle">464</text>
<rect x="180.7" y="184.6" width="9.2" height="6.2" rx="1.6" fill="#fff" stroke="#8c8c8c" stroke-width="0.5"/>
<text x="185.3" y="189.2" font-size="4" fill="#555" text-anchor="middle">497</text>
<rect x="216.4" y="179.1" width="9.2" height="6.2" rx="1.6" fill="#fff" stroke="#8c8c8c" stroke-width="0.5"/>
<text x="221.0" y="183.7" font-size="4" fill="#555" text-anchor="middle">497</text>
<rect x="241.2" y="183.8" width="9.2" height="6.2" rx="1.6" fill="#fff" stroke="#8c8c8c" stroke-width="0.5"/>
<text x="245.8" y="188.4" font-size="4" fill="#555" text-anchor="middle">364</text>
<rect x="271.4" y="178.3" width="9.2" height="6.2" rx="1.6" fill="#fff" stroke="#8c8c8c" stroke-width="0.5"/>
<text x="276.0" y="182.9" font-size="4" fill="#555" text-anchor="middle">455</text>
<rect x="264.4" y="186.5" width="9.2" height="6.2" rx="1.6" fill="#fff" stroke="#8c8c8c" stroke-width="0.5"/>
<text x="269.0" y="191.1" font-size="4" fill="#555" text-anchor="middle">262</text>
<rect x="298.9" y="207.7" width="9.2" height="6.2" rx="1.6" fill="#fff" stroke="#8c8c8c" stroke-width="0.5"/>
<text x="303.5" y="212.3" font-size="4" fill="#555" text-anchor="middle">050</text>
<rect x="111.9" y="223.1" width="9.2" height="6.2" rx="1.6" fill="#fff" stroke="#8c8c8c" stroke-width="0.5"/>
<text x="116.5" y="227.7" font-size="4" fill="#555" text-anchor="middle">262</text>
<rect x="191.7" y="225.9" width="9.2" height="6.2" rx="1.6" fill="#fff" stroke="#8c8c8c" stroke-width="0.5"/>
<text x="196.3" y="230.5" font-size="4" fill="#555" text-anchor="middle">262</text>
<rect x="135.3" y="240.7" width="9.2" height="6.2" rx="1.6" fill="#fff" stroke="#8c8c8c" stroke-width="0.5"/>
<text x="139.9" y="245.3" font-size="4" fill="#555" text-anchor="middle">158</text>
<rect x="265.9" y="236.9" width="9.2" height="6.2" rx="1.6" fill="#fff" stroke="#8c8c8c" stroke-width="0.5"/>
<text x="270.5" y="241.5" font-size="4" fill="#555" text-anchor="middle">265</text>
<rect x="296.2" y="228.6" width="9.2" height="6.2" rx="1.6" fill="#fff" stroke="#8c8c8c" stroke-width="0.5"/>
<text x="300.8" y="233.2" font-size="4" fill="#555" text-anchor="middle">050</text>
<rect x="254.9" y="250.6" width="9.2" height="6.2" rx="1.6" fill="#fff" stroke="#8c8c8c" stroke-width="0.5"/>
<text x="259.5" y="255.2" font-size="4" fill="#555" text-anchor="middle">456</text>
<rect x="212.3" y="264.9" width="9.2" height="6.2" rx="1.6" fill="#fff" stroke="#8c8c8c" stroke-width="0.5"/>
<text x="216.9" y="269.5" font-size="4" fill="#555" text-anchor="middle">267</text>
<rect x="131.2" y="290.9" width="9.2" height="6.2" rx="1.6" fill="#fff" stroke="#8c8c8c" stroke-width="0.5"/>
<text x="135.8" y="295.5" font-size="4" fill="#555" text-anchor="middle">158</text>
<rect x="98.1" y="278.7" width="9.2" height="6.2" rx="1.6" fill="#fff" stroke="#8c8c8c" stroke-width="0.5"/>
<text x="102.7" y="283.3" font-size="4" fill="#555" text-anchor="middle">267</text>
<rect x="278.4" y="294.6" width="9.2" height="6.2" rx="1.6" fill="#fff" stroke="#8c8c8c" stroke-width="0.5"/>
<text x="283.0" y="299.2" font-size="4" fill="#555" text-anchor="middle">369</text>
<rect x="172.7" y="304.9" width="9.2" height="6.2" rx="1.6" fill="#fff" stroke="#8c8c8c" stroke-width="0.5"/>
<text x="177.3" y="309.5" font-size="4" fill="#555" text-anchor="middle">374</text>
<rect x="408.9" y="129.9" width="9.2" height="6.2" rx="1.6" fill="#fff" stroke="#8c8c8c" stroke-width="0.5"/>
<text x="413.5" y="134.5" font-size="4" fill="#555" text-anchor="middle">040</text>
<rect x="416.6" y="143.6" width="9.2" height="6.2" rx="1.6" fill="#fff" stroke="#8c8c8c" stroke-width="0.5"/>
<text x="421.2" y="148.2" font-size="4" fill="#555" text-anchor="middle">040</text>
<rect x="323.1" y="163.7" width="9.2" height="6.2" rx="1.6" fill="#fff" stroke="#8c8c8c" stroke-width="0.5"/>
<text x="327.7" y="168.3" font-size="4" fill="#555" text-anchor="middle">462</text>
<rect x="340.1" y="166.8" width="9.2" height="6.2" rx="1.6" fill="#fff" stroke="#8c8c8c" stroke-width="0.5"/>
<text x="344.7" y="171.4" font-size="4" fill="#555" text-anchor="middle">146</text>
<rect x="378.0" y="160.1" width="9.2" height="6.2" rx="1.6" fill="#fff" stroke="#8c8c8c" stroke-width="0.5"/>
<text x="382.6" y="164.7" font-size="4" fill="#555" text-anchor="middle">352</text>
<rect x="412.0" y="176.4" width="9.2" height="6.2" rx="1.6" fill="#fff" stroke="#8c8c8c" stroke-width="0.5"/>
<text x="416.6" y="181.0" font-size="4" fill="#555" text-anchor="middle">352</text>
<rect x="350.2" y="179.9" width="9.2" height="6.2" rx="1.6" fill="#fff" stroke="#8c8c8c" stroke-width="0.5"/>
<text x="354.8" y="184.5" font-size="4" fill="#555" text-anchor="middle">262</text>
<rect x="408.9" y="190.3" width="9.2" height="6.2" rx="1.6" fill="#fff" stroke="#8c8c8c" stroke-width="0.5"/>
<text x="413.5" y="194.9" font-size="4" fill="#555" text-anchor="middle">262</text>
<rect x="325.4" y="200.3" width="9.2" height="6.2" rx="1.6" fill="#fff" stroke="#8c8c8c" stroke-width="0.5"/>
<text x="330.0" y="204.9" font-size="4" fill="#555" text-anchor="middle">464</text>
<rect x="415.6" y="211.6" width="9.2" height="6.2" rx="1.6" fill="#fff" stroke="#8c8c8c" stroke-width="0.5"/>
<text x="420.2" y="216.2" font-size="4" fill="#555" text-anchor="middle">494</text>
<rect x="397.4" y="223.9" width="9.2" height="6.2" rx="1.6" fill="#fff" stroke="#8c8c8c" stroke-width="0.5"/>
<text x="402.0" y="228.5" font-size="4" fill="#555" text-anchor="middle">354</text>
<rect x="445.4" y="141.1" width="9.2" height="6.2" rx="1.6" fill="#fff" stroke="#8c8c8c" stroke-width="0.5"/>
<text x="450.0" y="145.7" font-size="4" fill="#555" text-anchor="middle">259</text>
<rect x="500.4" y="196.8" width="9.2" height="6.2" rx="1.6" fill="#fff" stroke="#8c8c8c" stroke-width="0.5"/>
<text x="505.0" y="201.4" font-size="4" fill="#555" text-anchor="middle">262</text>
<rect x="498.1" y="222.9" width="9.2" height="6.2" rx="1.6" fill="#fff" stroke="#8c8c8c" stroke-width="0.5"/>
<text x="502.7" y="227.5" font-size="4" fill="#555" text-anchor="middle">120</text>
<rect x="371.8" y="238.9" width="9.2" height="6.2" rx="1.6" fill="#fff" stroke="#8c8c8c" stroke-width="0.5"/>
<text x="376.4" y="243.5" font-size="4" fill="#555" text-anchor="middle">265</text>
<rect x="395.0" y="238.1" width="9.2" height="6.2" rx="1.6" fill="#fff" stroke="#8c8c8c" stroke-width="0.5"/>
<text x="399.6" y="242.7" font-size="4" fill="#555" text-anchor="middle">369</text>
<rect x="413.5" y="241.2" width="9.2" height="6.2" rx="1.6" fill="#fff" stroke="#8c8c8c" stroke-width="0.5"/>
<text x="418.1" y="245.8" font-size="4" fill="#555" text-anchor="middle">381</text>
<rect x="369.4" y="260.2" width="9.2" height="6.2" rx="1.6" fill="#fff" stroke="#8c8c8c" stroke-width="0.5"/>
<text x="374.0" y="264.8" font-size="4" fill="#555" text-anchor="middle">491</text>
<rect x="395.0" y="275.2" width="9.2" height="6.2" rx="1.6" fill="#fff" stroke="#8c8c8c" stroke-width="0.5"/>
<text x="399.6" y="279.8" font-size="4" fill="#555" text-anchor="middle">381</text>
<rect x="408.1" y="282.2" width="9.2" height="6.2" rx="1.6" fill="#fff" stroke="#8c8c8c" stroke-width="0.5"/>
<text x="412.7" y="286.8" font-size="4" fill="#555" text-anchor="middle">267</text>
<rect x="365.2" y="289.6" width="9.2" height="6.2" rx="1.6" fill="#fff" stroke="#8c8c8c" stroke-width="0.5"/>
<text x="369.8" y="294.2" font-size="4" fill="#555" text-anchor="middle">459</text>
<rect x="418.2" y="309.2" width="9.2" height="6.2" rx="1.6" fill="#fff" stroke="#8c8c8c" stroke-width="0.5"/>
<text x="422.8" y="313.8" font-size="4" fill="#555" text-anchor="middle">116</text>
<rect x="368.3" y="314.3" width="9.2" height="6.2" rx="1.6" fill="#fff" stroke="#8c8c8c" stroke-width="0.5"/>
<text x="372.9" y="318.9" font-size="4" fill="#555" text-anchor="middle">381</text>
<rect x="477.2" y="228.4" width="9.2" height="6.2" rx="1.6" fill="#fff" stroke="#8c8c8c" stroke-width="0.5"/>
<text x="481.8" y="233.0" font-size="4" fill="#555" text-anchor="middle">482</text>
<rect x="520.4" y="236.6" width="9.2" height="6.2" rx="1.6" fill="#fff" stroke="#8c8c8c" stroke-width="0.5"/>
<text x="525.0" y="241.2" font-size="4" fill="#555" text-anchor="middle">116</text>
<rect x="453.3" y="248.9" width="9.2" height="6.2" rx="1.6" fill="#fff" stroke="#8c8c8c" stroke-width="0.5"/>
<text x="457.9" y="253.5" font-size="4" fill="#555" text-anchor="middle">265</text>
<rect x="433.2" y="282.2" width="9.2" height="6.2" rx="1.6" fill="#fff" stroke="#8c8c8c" stroke-width="0.5"/>
<text x="437.8" y="286.8" font-size="4" fill="#555" text-anchor="middle">267</text>
<rect x="205.1" y="318.5" width="9.2" height="6.2" rx="1.6" fill="#fff" stroke="#8c8c8c" stroke-width="0.5"/>
<text x="209.7" y="323.1" font-size="4" fill="#555" text-anchor="middle">374</text>
<rect x="182.7" y="338.6" width="9.2" height="6.2" rx="1.6" fill="#fff" stroke="#8c8c8c" stroke-width="0.5"/>
<text x="187.3" y="343.2" font-size="4" fill="#555" text-anchor="middle">369</text>
<rect x="98.4" y="367.9" width="9.2" height="6.2" rx="1.6" fill="#fff" stroke="#8c8c8c" stroke-width="0.5"/>
<text x="103.0" y="372.5" font-size="4" fill="#555" text-anchor="middle">487</text>
<rect x="112.7" y="388.1" width="9.2" height="6.2" rx="1.6" fill="#fff" stroke="#8c8c8c" stroke-width="0.5"/>
<text x="117.3" y="392.7" font-size="4" fill="#555" text-anchor="middle">158</text>
<rect x="196.6" y="389.6" width="9.2" height="6.2" rx="1.6" fill="#fff" stroke="#8c8c8c" stroke-width="0.5"/>
<text x="201.2" y="394.2" font-size="4" fill="#555" text-anchor="middle">153</text>
<rect x="154.1" y="395.9" width="9.2" height="6.2" rx="1.6" fill="#fff" stroke="#8c8c8c" stroke-width="0.5"/>
<text x="158.7" y="400.5" font-size="4" fill="#555" text-anchor="middle">487</text>
<rect x="283.4" y="337.9" width="9.2" height="6.2" rx="1.6" fill="#fff" stroke="#8c8c8c" stroke-width="0.5"/>
<text x="288.0" y="342.5" font-size="4" fill="#555" text-anchor="middle">374</text>
<rect x="307.1" y="376.5" width="9.2" height="6.2" rx="1.6" fill="#fff" stroke="#8c8c8c" stroke-width="0.5"/>
<text x="311.7" y="381.1" font-size="4" fill="#555" text-anchor="middle">478</text>
<rect x="266.4" y="388.1" width="9.2" height="6.2" rx="1.6" fill="#fff" stroke="#8c8c8c" stroke-width="0.5"/>
<text x="271.0" y="392.7" font-size="4" fill="#555" text-anchor="middle">373</text>
<rect x="298.9" y="392.4" width="9.2" height="6.2" rx="1.6" fill="#fff" stroke="#8c8c8c" stroke-width="0.5"/>
<text x="303.5" y="397.0" font-size="4" fill="#555" text-anchor="middle">478</text>
<rect x="402.0" y="323.2" width="9.2" height="6.2" rx="1.6" fill="#fff" stroke="#8c8c8c" stroke-width="0.5"/>
<text x="406.6" y="327.8" font-size="4" fill="#555" text-anchor="middle">116</text>
<rect x="424.4" y="332.1" width="9.2" height="6.2" rx="1.6" fill="#fff" stroke="#8c8c8c" stroke-width="0.5"/>
<text x="429.0" y="336.7" font-size="4" fill="#555" text-anchor="middle">101</text>
<rect x="326.5" y="371.9" width="9.2" height="6.2" rx="1.6" fill="#fff" stroke="#8c8c8c" stroke-width="0.5"/>
<text x="331.1" y="376.5" font-size="4" fill="#555" text-anchor="middle">116</text>
<rect x="342.4" y="379.6" width="9.2" height="6.2" rx="1.6" fill="#fff" stroke="#8c8c8c" stroke-width="0.5"/>
<text x="347.0" y="384.2" font-size="4" fill="#555" text-anchor="middle">101</text>
<rect x="197.4" y="406.1" width="9.2" height="6.2" rx="1.6" fill="#fff" stroke="#8c8c8c" stroke-width="0.5"/>
<text x="202.0" y="410.7" font-size="4" fill="#555" text-anchor="middle">153</text>
<rect x="104.4" y="426.7" width="9.2" height="6.2" rx="1.6" fill="#fff" stroke="#8c8c8c" stroke-width="0.5"/>
<text x="109.0" y="431.3" font-size="4" fill="#555" text-anchor="middle">277</text>
<rect x="105.9" y="439.9" width="9.2" height="6.2" rx="1.6" fill="#fff" stroke="#8c8c8c" stroke-width="0.5"/>
<text x="110.5" y="444.5" font-size="4" fill="#555" text-anchor="middle">158</text>
<rect x="184.6" y="436.9" width="9.2" height="6.2" rx="1.6" fill="#fff" stroke="#8c8c8c" stroke-width="0.5"/>
<text x="189.2" y="441.5" font-size="4" fill="#555" text-anchor="middle">277</text>
<rect x="250.4" y="406.1" width="9.2" height="6.2" rx="1.6" fill="#fff" stroke="#8c8c8c" stroke-width="0.5"/>
<text x="255.0" y="410.7" font-size="4" fill="#555" text-anchor="middle">476</text>
<rect x="263.1" y="421.1" width="9.2" height="6.2" rx="1.6" fill="#fff" stroke="#8c8c8c" stroke-width="0.5"/>
<text x="267.7" y="425.7" font-size="4" fill="#555" text-anchor="middle">116</text>
<rect x="253.4" y="442.9" width="9.2" height="6.2" rx="1.6" fill="#fff" stroke="#8c8c8c" stroke-width="0.5"/>
<text x="258.0" y="447.5" font-size="4" fill="#555" text-anchor="middle">277</text>
<circle cx="440" cy="148.5" r="1.1" fill="#fff" stroke="#666" stroke-width="0.5"/>
<circle cx="489" cy="184.9" r="1.1" fill="#fff" stroke="#666" stroke-width="0.5"/>
<circle cx="516" cy="178" r="1.1" fill="#fff" stroke="#666" stroke-width="0.5"/>
<circle cx="477.2" cy="218.9" r="1.1" fill="#fff" stroke="#666" stroke-width="0.5"/>
<circle cx="455.9" cy="198.8" r="1.1" fill="#fff" stroke="#666" stroke-width="0.5"/>
<circle cx="354.3" cy="278.8" r="1.1" fill="#fff" stroke="#666" stroke-width="0.5"/>
<circle cx="156.2" cy="437" r="1.1" fill="#fff" stroke="#666" stroke-width="0.5"/>
<circle cx="208.7" cy="424.2" r="1.1" fill="#fff" stroke="#666" stroke-width="0.5"/>
<circle cx="240" cy="447" r="1.1" fill="#fff" stroke="#666" stroke-width="0.5"/>
<circle cx="253.3" cy="301.5" r="1.1" fill="#fff" stroke="#666" stroke-width="0.5"/>
<circle cx="217.7" cy="297.5" r="1.1" fill="#fff" stroke="#666" stroke-width="0.5"/>
<circle cx="198.1" cy="316" r="1.1" fill="#fff" stroke="#666" stroke-width="0.5"/>
<circle cx="116.2" cy="335" r="1.1" fill="#fff" stroke="#666" stroke-width="0.5"/>
<circle cx="119.3" cy="377" r="1.1" fill="#fff" stroke="#666" stroke-width="0.5"/>
<circle cx="110" cy="360" r="1.1" fill="#fff" stroke="#666" stroke-width="0.5"/>
<circle cx="237.5" cy="156" r="1.1" fill="#fff" stroke="#666" stroke-width="0.5"/>
<circle cx="284" cy="154" r="1.1" fill="#fff" stroke="#666" stroke-width="0.5"/>
<circle cx="145" cy="162.5" r="1.1" fill="#fff" stroke="#666" stroke-width="0.5"/>
<circle cx="167" cy="187" r="1.1" fill="#fff" stroke="#666" stroke-width="0.5"/>
<circle cx="204.5" cy="212.5" r="1.1" fill="#fff" stroke="#666" stroke-width="0.5"/>
<circle cx="273.4" cy="225" r="1.1" fill="#fff" stroke="#666" stroke-width="0.5"/>
<circle cx="267.2" cy="236.5" r="1.1" fill="#fff" stroke="#666" stroke-width="0.5"/>
<circle cx="197.4" cy="253" r="1.1" fill="#fff" stroke="#666" stroke-width="0.5"/>
<circle cx="171.9" cy="274" r="1.1" fill="#fff" stroke="#666" stroke-width="0.5"/>
<circle cx="288.8" cy="277.5" r="1.1" fill="#fff" stroke="#666" stroke-width="0.5"/>
<circle cx="300.4" cy="288" r="1.1" fill="#fff" stroke="#666" stroke-width="0.5"/>
<circle cx="356.3" cy="140.5" r="1.1" fill="#fff" stroke="#666" stroke-width="0.5"/>
<circle cx="336.7" cy="155" r="1.1" fill="#fff" stroke="#666" stroke-width="0.5"/>
<circle cx="338.5" cy="183" r="1.1" fill="#fff" stroke="#666" stroke-width="0.5"/>
<circle cx="454" cy="309" r="1.1" fill="#fff" stroke="#666" stroke-width="0.5"/>
<circle cx="491.1" cy="309.2" r="1.1" fill="#fff" stroke="#666" stroke-width="0.5"/>
<circle cx="484.1" cy="277" r="1.1" fill="#fff" stroke="#666" stroke-width="0.5"/>
<text x="196.0" y="133.4" font-size="5.4" fill="#484848" text-anchor="middle" stroke="#fff" stroke-opacity="0.6" stroke-width="0.9" paint-order="stroke">Quirinópolis</text>
<text x="237.5" y="154.4" font-size="5.4" fill="#484848" text-anchor="middle" stroke="#fff" stroke-opacity="0.6" stroke-width="0.9" paint-order="stroke">Ituiutaba</text>
<text x="284.0" y="151.9" font-size="5.3" font-weight="bold" fill="#333" text-anchor="middle" stroke="#fff" stroke-opacity="0.6" stroke-width="0.9" paint-order="stroke">Uberlândia</text>
<text x="145.0" y="160.9" font-size="5.4" fill="#484848" text-anchor="middle" stroke="#fff" stroke-opacity="0.6" stroke-width="0.9" paint-order="stroke">Cassilândia</text>
<text x="167.0" y="184.9" font-size="5.4" fill="#484848" text-anchor="middle" stroke="#fff" stroke-opacity="0.6" stroke-width="0.9" paint-order="stroke">Paranaíba</text>
<text x="298.0" y="187.4" font-size="5.34" font-weight="bold" fill="#333" text-anchor="middle" stroke="#fff" stroke-opacity="0.6" stroke-width="0.9" paint-order="stroke">Uberaba</text>
<text x="167.0" y="209.4" font-size="5.4" fill="#484848" text-anchor="middle" stroke="#fff" stroke-opacity="0.6" stroke-width="0.9" paint-order="stroke">Santa Fé</text>
<text x="167.0" y="214.7" font-size="5.4" fill="#484848" text-anchor="middle" stroke="#fff" stroke-opacity="0.6" stroke-width="0.9" paint-order="stroke">do Sul</text>
<text x="204.5" y="210.9" font-size="5.4" fill="#484848" text-anchor="middle" stroke="#fff" stroke-opacity="0.6" stroke-width="0.9" paint-order="stroke">Fernandópolis</text>
<text x="106.0" y="217.9" font-size="5.4" fill="#484848" text-anchor="middle" stroke="#fff" stroke-opacity="0.6" stroke-width="0.9" paint-order="stroke">Clara</text>
<text x="273.4" y="223.5" font-size="5.4" fill="#484848" text-anchor="middle" stroke="#fff" stroke-opacity="0.6" stroke-width="0.9" paint-order="stroke">Barretos</text>
<text x="240.9" y="227.9" font-size="5.34" font-weight="bold" fill="#333" text-anchor="middle" stroke="#fff" stroke-opacity="0.6" stroke-width="0.9" paint-order="stroke">São José do</text>
<text x="238.6" y="233.5" font-size="5.34" font-weight="bold" fill="#333" text-anchor="middle" stroke="#fff" stroke-opacity="0.6" stroke-width="0.9" paint-order="stroke">Rio Preto</text>
<text x="146.4" y="232.8" font-size="5.2" fill="#484848" text-anchor="middle" stroke="#fff" stroke-opacity="0.6" stroke-width="0.9" paint-order="stroke">Três Lagoas</text>
<text x="267.2" y="235.1" font-size="5.4" fill="#484848" text-anchor="middle" stroke="#fff" stroke-opacity="0.6" stroke-width="0.9" paint-order="stroke">Olímpia</text>
<text x="160.3" y="246.2" font-size="5.4" fill="#484848" text-anchor="middle" stroke="#fff" stroke-opacity="0.6" stroke-width="0.9" paint-order="stroke">Andradina</text>
<text x="197.4" y="250.9" font-size="5.4" font-weight="bold" fill="#333" text-anchor="middle" stroke="#fff" stroke-opacity="0.6" stroke-width="0.9" paint-order="stroke">Araçatuba</text>
<text x="304.3" y="248.9" font-size="5.34" font-weight="bold" fill="#333" text-anchor="middle" stroke="#fff" stroke-opacity="0.6" stroke-width="0.9" paint-order="stroke">Ribeirão Preto</text>
<text x="171.9" y="272.2" font-size="5.4" fill="#484848" text-anchor="middle" stroke="#fff" stroke-opacity="0.6" stroke-width="0.9" paint-order="stroke">Adamantina</text>
<text x="288.8" y="276.0" font-size="5.4" fill="#484848" text-anchor="middle" stroke="#fff" stroke-opacity="0.6" stroke-width="0.9" paint-order="stroke">Araraquara</text>
<text x="117.0" y="273.9" font-size="5.4" fill="#484848" text-anchor="middle" stroke="#fff" stroke-opacity="0.6" stroke-width="0.9" paint-order="stroke">Bataguassu</text>
<text x="130.0" y="283.8" font-size="5.4" fill="#484848" text-anchor="middle" stroke="#fff" stroke-opacity="0.6" stroke-width="0.9" paint-order="stroke">Presidente</text>
<text x="130.0" y="288.7" font-size="5.4" fill="#484848" text-anchor="middle" stroke="#fff" stroke-opacity="0.6" stroke-width="0.9" paint-order="stroke">Epitácio</text>
<text x="159.5" y="284.7" font-size="5.34" font-weight="bold" fill="#333" text-anchor="middle" stroke="#fff" stroke-opacity="0.6" stroke-width="0.9" paint-order="stroke">Presidente</text>
<text x="159.5" y="290.5" font-size="5.34" font-weight="bold" fill="#333" text-anchor="middle" stroke="#fff" stroke-opacity="0.6" stroke-width="0.9" paint-order="stroke">Prudente</text>
<text x="300.4" y="286.1" font-size="5.34" font-weight="bold" fill="#333" text-anchor="middle" stroke="#fff" stroke-opacity="0.6" stroke-width="0.9" paint-order="stroke">São Carlos</text>
<text x="217.6" y="295.4" font-size="5.4" fill="#484848" text-anchor="middle" stroke="#fff" stroke-opacity="0.6" stroke-width="0.9" paint-order="stroke">Marília</text>
<text x="253.5" y="299.0" font-size="5.6" fill="#484848" text-anchor="middle" stroke="#fff" stroke-opacity="0.6" stroke-width="0.9" paint-order="stroke">Bauru</text>
<text x="320.5" y="221.9" font-size="5.34" font-weight="bold" fill="#333" text-anchor="middle" stroke="#fff" stroke-opacity="0.6" stroke-width="0.9" paint-order="stroke">Franca</text>
<text x="356.3" y="138.9" font-size="5.4" fill="#484848" text-anchor="middle" stroke="#fff" stroke-opacity="0.6" stroke-width="0.9" paint-order="stroke">Patos de Minas</text>
<text x="336.7" y="153.2" font-size="5.4" fill="#484848" text-anchor="middle" stroke="#fff" stroke-opacity="0.6" stroke-width="0.9" paint-order="stroke">Patrocínio</text>
<text x="338.5" y="181.4" font-size="5.4" fill="#484848" text-anchor="middle" stroke="#fff" stroke-opacity="0.6" stroke-width="0.9" paint-order="stroke">Araxá</text>
<text x="440.9" y="155.1" font-size="5.4" fill="#484848" text-anchor="middle" stroke="#fff" stroke-opacity="0.6" stroke-width="0.9" paint-order="stroke">Curvelo</text>
<text x="460.5" y="195.0" font-size="6.8" font-weight="bold" fill="#333" text-anchor="middle" stroke="#fff" stroke-opacity="0.6" stroke-width="0.9" paint-order="stroke">Belo Horizonte</text>
<text x="455.9" y="205.3" font-size="5.34" font-weight="bold" fill="#333" text-anchor="middle" stroke="#fff" stroke-opacity="0.6" stroke-width="0.9" paint-order="stroke">Contagem</text>
<text x="489.1" y="182.9" font-size="5.4" fill="#484848" text-anchor="middle" stroke="#fff" stroke-opacity="0.6" stroke-width="0.9" paint-order="stroke">Itabira</text>
<text x="516.1" y="175.6" font-size="5.34" font-weight="bold" fill="#333" text-anchor="middle" stroke="#fff" stroke-opacity="0.6" stroke-width="0.9" paint-order="stroke">Ipatinga</text>
<text x="478.0" y="216.6" font-size="5.4" fill="#484848" text-anchor="middle" stroke="#fff" stroke-opacity="0.6" stroke-width="0.9" paint-order="stroke">Ouro Preto</text>
<text x="354.8" y="270.9" font-size="5.4" fill="#484848" text-anchor="middle" stroke="#fff" stroke-opacity="0.6" stroke-width="0.9" paint-order="stroke">Poços de</text>
<text x="354.0" y="276.1" font-size="5.4" fill="#484848" text-anchor="middle" stroke="#fff" stroke-opacity="0.6" stroke-width="0.9" paint-order="stroke">Caldas</text>
<text x="484.1" y="275.2" font-size="5.6" fill="#484848" text-anchor="middle" stroke="#fff" stroke-opacity="0.6" stroke-width="0.9" paint-order="stroke">Juiz de Fora</text>
<text x="454.0" y="307.7" font-size="5.6" fill="#484848" text-anchor="middle" stroke="#fff" stroke-opacity="0.6" stroke-width="0.9" paint-order="stroke">Volta Redonda</text>
<text x="491.1" y="307.7" font-size="5.6" fill="#484848" text-anchor="middle" stroke="#fff" stroke-opacity="0.6" stroke-width="0.9" paint-order="stroke">Petrópolis</text>
<text x="491.1" y="324.6" font-size="6.62" font-weight="bold" fill="#333" text-anchor="middle" stroke="#fff" stroke-opacity="0.6" stroke-width="0.9" paint-order="stroke">Rio de Janeiro</text>
<text x="296.6" y="322.0" font-size="5.6" fill="#484848" text-anchor="middle" stroke="#fff" stroke-opacity="0.6" stroke-width="0.9" paint-order="stroke">Piracicaba</text>
<text x="334.7" y="324.9" font-size="6.9" font-weight="bold" fill="#333" text-anchor="middle" stroke="#fff" stroke-opacity="0.6" stroke-width="0.9" paint-order="stroke">Campinas</text>
<text x="341.6" y="337.1" font-size="5.4" fill="#484848" text-anchor="middle" stroke="#fff" stroke-opacity="0.6" stroke-width="0.9" paint-order="stroke">Jundiaí</text>
<text x="381.0" y="333.0" font-size="5.6" fill="#484848" text-anchor="middle" stroke="#fff" stroke-opacity="0.6" stroke-width="0.9" paint-order="stroke">São José</text>
<text x="381.0" y="338.8" font-size="5.6" fill="#484848" text-anchor="middle" stroke="#fff" stroke-opacity="0.6" stroke-width="0.9" paint-order="stroke">dos Campos</text>
<text x="351.0" y="352.6" font-size="6.6" font-weight="bold" fill="#333" text-anchor="middle" stroke="#fff" stroke-opacity="0.6" stroke-width="0.9" paint-order="stroke">São Paulo</text>
<text x="401.1" y="364.9" font-size="5.4" fill="#484848" text-anchor="middle" stroke="#fff" stroke-opacity="0.6" stroke-width="0.9" paint-order="stroke">São Sebastião</text>
<text x="354.0" y="369.3" font-size="5.8" fill="#484848" text-anchor="middle" stroke="#fff" stroke-opacity="0.6" stroke-width="0.9" paint-order="stroke">São Bernardo</text>
<text x="354.0" y="374.4" font-size="5.8" fill="#484848" text-anchor="middle" stroke="#fff" stroke-opacity="0.6" stroke-width="0.9" paint-order="stroke">do Campo</text>
<text x="198.1" y="314.3" font-size="5.4" fill="#484848" text-anchor="middle" stroke="#fff" stroke-opacity="0.6" stroke-width="0.9" paint-order="stroke">Assis</text>
<text x="116.2" y="332.9" font-size="5.4" fill="#484848" text-anchor="middle" stroke="#fff" stroke-opacity="0.6" stroke-width="0.9" paint-order="stroke">Paranavaí</text>
<text x="168.0" y="343.3" font-size="5.4" font-weight="bold" fill="#333" text-anchor="middle" stroke="#fff" stroke-opacity="0.6" stroke-width="0.9" paint-order="stroke">Londrina</text>
<text x="137.1" y="347.6" font-size="5.5" font-weight="bold" fill="#333" text-anchor="middle" stroke="#fff" stroke-opacity="0.6" stroke-width="0.9" paint-order="stroke">Maringá</text>
<text x="156.4" y="354.1" font-size="5.4" fill="#484848" text-anchor="middle" stroke="#fff" stroke-opacity="0.6" stroke-width="0.9" paint-order="stroke">Apucarana</text>
<text x="110.0" y="357.9" font-size="5.4" fill="#484848" text-anchor="middle" stroke="#fff" stroke-opacity="0.6" stroke-width="0.9" paint-order="stroke">Cianorte</text>
<text x="119.3" y="369.9" font-size="5.4" fill="#484848" text-anchor="middle" stroke="#fff" stroke-opacity="0.6" stroke-width="0.9" paint-order="stroke">Campo</text>
<text x="119.3" y="374.9" font-size="5.4" fill="#484848" text-anchor="middle" stroke="#fff" stroke-opacity="0.6" stroke-width="0.9" paint-order="stroke">Mourão</text>
<text x="156.2" y="435.1" font-size="5.2" fill="#484848" text-anchor="middle" stroke="#fff" stroke-opacity="0.6" stroke-width="0.9" paint-order="stroke">Guarapuava</text>
<text x="209.0" y="422.1" font-size="5.3" font-weight="bold" fill="#333" text-anchor="middle" stroke="#fff" stroke-opacity="0.6" stroke-width="0.9" paint-order="stroke">Ponta Grossa</text>
<text x="245.2" y="436.6" font-size="6.4" font-weight="bold" fill="#333" text-anchor="middle" stroke="#fff" stroke-opacity="0.6" stroke-width="0.9" paint-order="stroke">Curitiba</text>
<text x="240.0" y="452.7" font-size="5.4" fill="#484848" text-anchor="middle" stroke="#fff" stroke-opacity="0.6" stroke-width="0.9" paint-order="stroke">Araucária</text>
<text x="529.0" y="143.5" font-size="5.4" fill="#484848" text-anchor="middle" stroke="#fff" stroke-opacity="0.6" stroke-width="0.9" paint-order="stroke">Go</text>
<text x="529.0" y="149.7" font-size="5.4" fill="#484848" text-anchor="middle" stroke="#fff" stroke-opacity="0.6" stroke-width="0.9" paint-order="stroke">V</text>
<text x="529.0" y="218.4" font-size="5.4" fill="#484848" text-anchor="middle" stroke="#fff" stroke-opacity="0.6" stroke-width="0.9" paint-order="stroke">Ma</text>
<text x="530.0" y="333.6" font-size="5.4" fill="#484848" text-anchor="middle" stroke="#fff" stroke-opacity="0.6" stroke-width="0.9" paint-order="stroke">Ca</text>
<circle cx="351.5" cy="355.8" r="11" fill="url(#hR)"/>
<circle cx="363" cy="353.5" r="6" fill="url(#hG)"/>
<circle cx="340" cy="354" r="5" fill="url(#hG)"/>
<circle cx="358" cy="362" r="5" fill="url(#hG)"/>
<circle cx="363" cy="377" r="4" fill="url(#hG)"/>
<circle cx="491" cy="327.4" r="9.5" fill="url(#hO)"/>
<circle cx="496.5" cy="316.5" r="6" fill="url(#hG)"/>
<circle cx="333.1" cy="328.6" r="5" fill="url(#hG)"/>
<circle cx="444.7" cy="331" r="4.5" fill="url(#hG)"/>
<circle cx="378.7" cy="341.7" r="4" fill="url(#hG)"/>
<circle cx="137.1" cy="349.5" r="9.5" fill="url(#hO)"/>
<circle cx="154.9" cy="356.4" r="6.5" fill="url(#hG)"/>
<circle cx="168" cy="345.6" r="6" fill="url(#hG)"/>
<circle cx="141.7" cy="333.2" r="4.5" fill="url(#hG)"/>
<circle cx="109.3" cy="320" r="4" fill="url(#hG)"/>
<circle cx="158.7" cy="320" r="4.5" fill="url(#hG)"/>
<circle cx="243.7" cy="441.5" r="7" fill="url(#hY)"/>
<circle cx="223" cy="380.4" r="4" fill="url(#hG)"/>
<circle cx="316.6" cy="351" r="4.5" fill="url(#hG)"/>
<circle cx="460.5" cy="198" r="5.5" fill="url(#hG)"/>
<circle cx="320.5" cy="224.7" r="5.5" fill="url(#hG)"/>
<circle cx="352.5" cy="232" r="5.5" fill="url(#hG)"/>
<circle cx="378.7" cy="221.2" r="4.5" fill="url(#hG)"/>
<circle cx="399.6" cy="220.4" r="4.5" fill="url(#hG)"/>
<circle cx="240.1" cy="236.3" r="4.5" fill="url(#hG)"/>
<circle cx="304.3" cy="252.5" r="5.5" fill="url(#hG)"/>
<circle cx="254.8" cy="290.4" r="4.5" fill="url(#hG)"/>
</g>
<rect x="106" y="135" width="74" height="17.8" fill="#fff" rx="1"/>
<rect x="136" y="137" width="0.6" height="14" fill="#e6e6e6"/>
<text x="121" y="147" font-size="8" font-weight="bold" fill="#222" text-anchor="middle">Map</text>
<text x="158" y="147" font-size="8" fill="#666" text-anchor="middle">Satellite</text>
<rect x="508.5" y="135.5" width="17.5" height="35.2" fill="#fff" rx="1"/>
<rect x="510.5" y="153" width="13.5" height="0.5" fill="#e6e6e6"/>
<path d="M517.25 140v8.5M513 144.25h8.5" stroke="#666" stroke-width="1.5"/>
<path d="M513 161.8h8.5" stroke="#666" stroke-width="1.5"/>
<rect x="508.5" y="180" width="17.5" height="17.5" fill="#fff" rx="1"/>
<path d="M513.5 187v-2.7h2.7M518.3 184.3h2.7v2.7M521 190.7v2.7h-2.7M516.2 193.4h-2.7v-2.7" stroke="#666" stroke-width="1.1" fill="none"/>
</svg>
<svg class="abs" style="left:0;top:0" width="800" height="647">
<path d="M657.70 203.20 A74.8 74.8 0 1 1 587.78 304.56 L607.59 297.03 A53.6 53.6 0 1 0 657.70 224.40Z" fill="#e96a61"/>
<path d="M587.78 304.56 A74.8 74.8 0 0 1 657.70 203.20 L657.70 224.40 A53.6 53.6 0 0 0 607.59 297.03Z" fill="#efd15c"/>
<path d="M584.5 232.5h6.5l5.4 3.3" stroke="#efd15c" stroke-width="0.8" fill="none"/>
<path d="M719.6 321.2l4.6 3h7.4" stroke="#e96a61" stroke-width="0.8" fill="none"/>
<text x="557.4" y="234" font-size="4.95" fill="#555" font-family="Liberation Sans">Parc Proc...</text>
<text x="733.8" y="326" font-size="4.75" fill="#555" font-family="Liberation Sans">Improcede...</text>
<clipPath id="legclip"><rect x="548" y="440" width="220" height="15.3"/></clipPath><g clip-path="url(#legclip)">
<rect x="604" y="450.3" width="10.8" height="7" rx="1.5" fill="#e96a61"/>
<text x="617" y="455" font-size="5.65" fill="#555" font-family="Liberation Sans">Improcedente/Extinto</text>
<rect x="672" y="450.3" width="10.8" height="7" rx="1.5" fill="#efd15c"/>
<text x="685.5" y="455" font-size="5.7" fill="#555" letter-spacing="-0.1" font-family="Liberation Sans">Parc Procedente/Procedente</text>
</g>
</svg>
<svg class="abs" style="left:0;top:0" width="800" height="647">
<rect x="128.0" y="588.90" width="613" height="1" fill="#dfe1e8"/>
<text x="124.2" y="591.40" font-size="5.4" fill="#6e7079" text-anchor="end" font-family="Liberation Sans">0</text>
<rect x="128.0" y="575.28" width="613" height="1" fill="#e9ebf2"/>
<text x="124.2" y="577.78" font-size="5.4" fill="#6e7079" text-anchor="end" font-family="Liberation Sans">200</text>
<rect x="128.0" y="561.66" width="613" height="1" fill="#e9ebf2"/>
<text x="124.2" y="564.16" font-size="5.4" fill="#6e7079" text-anchor="end" font-family="Liberation Sans">400</text>
<rect x="128.0" y="548.04" width="613" height="1" fill="#e9ebf2"/>
<text x="124.2" y="550.54" font-size="5.4" fill="#6e7079" text-anchor="end" font-family="Liberation Sans">600</text>
<rect x="128.0" y="534.42" width="613" height="1" fill="#e9ebf2"/>
<text x="124.2" y="536.92" font-size="5.4" fill="#6e7079" text-anchor="end" font-family="Liberation Sans">800</text>
<rect x="128.0" y="520.80" width="613" height="1" fill="#e9ebf2"/>
<text x="124.2" y="523.30" font-size="5.4" fill="#6e7079" text-anchor="end" font-family="Liberation Sans">1,000</text>
<rect x="128.75" y="587.02" width="4.1" height="2.38" fill="#efd15c"/>
<rect x="128.75" y="585.65" width="4.1" height="1.36" fill="#e96a61"/>
<rect x="134.75" y="587.36" width="4.1" height="2.04" fill="#efd15c"/>
<rect x="134.75" y="586.00" width="4.1" height="1.36" fill="#e96a61"/>
<rect x="140.75" y="587.22" width="4.1" height="2.18" fill="#efd15c"/>
<rect x="140.75" y="585.72" width="4.1" height="1.50" fill="#e96a61"/>
<rect x="146.75" y="586.34" width="4.1" height="3.06" fill="#efd15c"/>
<rect x="146.75" y="585.11" width="4.1" height="1.23" fill="#e96a61"/>
<rect x="152.75" y="587.02" width="4.1" height="2.38" fill="#efd15c"/>
<rect x="152.75" y="586.00" width="4.1" height="1.02" fill="#e96a61"/>
<rect x="158.75" y="587.02" width="4.1" height="2.38" fill="#efd15c"/>
<rect x="158.75" y="585.79" width="4.1" height="1.23" fill="#e96a61"/>
<rect x="164.75" y="587.36" width="4.1" height="2.04" fill="#efd15c"/>
<rect x="164.75" y="587.02" width="4.1" height="0.34" fill="#e96a61"/>
<rect x="170.75" y="588.04" width="4.1" height="1.36" fill="#efd15c"/>
<rect x="170.75" y="587.49" width="4.1" height="0.54" fill="#e96a61"/>
<rect x="176.75" y="587.90" width="4.1" height="1.50" fill="#efd15c"/>
<rect x="176.75" y="587.08" width="4.1" height="0.82" fill="#e96a61"/>
<rect x="182.75" y="587.36" width="4.1" height="2.04" fill="#efd15c"/>
<rect x="182.75" y="586.13" width="4.1" height="1.23" fill="#e96a61"/>
<rect x="188.75" y="588.17" width="4.1" height="1.23" fill="#efd15c"/>
<rect x="188.75" y="587.36" width="4.1" height="0.82" fill="#e96a61"/>
<rect x="194.75" y="588.17" width="4.1" height="1.23" fill="#efd15c"/>
<rect x="194.75" y="587.36" width="4.1" height="0.82" fill="#e96a61"/>
<rect x="200.75" y="588.17" width="4.1" height="1.23" fill="#efd15c"/>
<rect x="200.75" y="587.49" width="4.1" height="0.68" fill="#e96a61"/>
<rect x="206.75" y="588.99" width="4.1" height="0.41" fill="#efd15c"/>
<rect x="206.75" y="588.31" width="4.1" height="0.68" fill="#e96a61"/>
<rect x="212.75" y="588.38" width="4.1" height="1.02" fill="#efd15c"/>
<rect x="212.75" y="587.83" width="4.1" height="0.54" fill="#e96a61"/>
<rect x="218.75" y="584.29" width="4.1" height="5.11" fill="#efd15c"/>
<rect x="218.75" y="583.07" width="4.1" height="1.23" fill="#e96a61"/>
<rect x="224.75" y="588.58" width="4.1" height="0.82" fill="#efd15c"/>
<rect x="224.75" y="588.38" width="4.1" height="0.20" fill="#e96a61"/>
<rect x="230.75" y="588.72" width="4.1" height="0.68" fill="#efd15c"/>
<rect x="230.75" y="588.31" width="4.1" height="0.41" fill="#e96a61"/>
<rect x="236.75" y="588.17" width="4.1" height="1.23" fill="#efd15c"/>
<rect x="236.75" y="587.36" width="4.1" height="0.82" fill="#e96a61"/>
<rect x="242.75" y="588.58" width="4.1" height="0.82" fill="#efd15c"/>
<rect x="242.75" y="588.24" width="4.1" height="0.34" fill="#e96a61"/>
<rect x="248.75" y="588.99" width="4.1" height="0.41" fill="#efd15c"/>
<rect x="248.75" y="588.45" width="4.1" height="0.54" fill="#e96a61"/>
<rect x="254.75" y="543.91" width="4.1" height="45.49" fill="#efd15c"/>
<rect x="254.75" y="530.43" width="4.1" height="13.48" fill="#e96a61"/>
<rect x="260.75" y="588.58" width="4.1" height="0.82" fill="#efd15c"/>
<rect x="260.75" y="588.24" width="4.1" height="0.34" fill="#e96a61"/>
<rect x="266.75" y="586.34" width="4.1" height="3.06" fill="#efd15c"/>
<rect x="266.75" y="585.38" width="4.1" height="0.95" fill="#e96a61"/>
<rect x="272.75" y="588.86" width="4.1" height="0.54" fill="#efd15c"/>
<rect x="272.75" y="588.38" width="4.1" height="0.48" fill="#e96a61"/>
<rect x="278.75" y="568.90" width="4.1" height="20.50" fill="#efd15c"/>
<rect x="284.75" y="589.13" width="4.1" height="0.27" fill="#efd15c"/>
<rect x="284.75" y="588.65" width="4.1" height="0.48" fill="#e96a61"/>
<rect x="290.75" y="588.58" width="4.1" height="0.82" fill="#efd15c"/>
<rect x="290.75" y="588.04" width="4.1" height="0.54" fill="#e96a61"/>
<rect x="296.75" y="588.04" width="4.1" height="1.36" fill="#efd15c"/>
<rect x="296.75" y="587.49" width="4.1" height="0.54" fill="#e96a61"/>
<rect x="302.75" y="587.90" width="4.1" height="1.50" fill="#efd15c"/>
<rect x="302.75" y="587.36" width="4.1" height="0.54" fill="#e96a61"/>
<rect x="308.75" y="589.13" width="4.1" height="0.27" fill="#efd15c"/>
<rect x="308.75" y="588.58" width="4.1" height="0.54" fill="#e96a61"/>
<rect x="314.75" y="588.38" width="4.1" height="1.02" fill="#efd15c"/>
<rect x="314.75" y="588.11" width="4.1" height="0.27" fill="#e96a61"/>
<rect x="320.75" y="588.86" width="4.1" height="0.54" fill="#efd15c"/>
<rect x="320.75" y="588.72" width="4.1" height="0.14" fill="#e96a61"/>
<rect x="326.75" y="588.58" width="4.1" height="0.82" fill="#efd15c"/>
<rect x="326.75" y="588.38" width="4.1" height="0.20" fill="#e96a61"/>
<rect x="332.75" y="588.38" width="4.1" height="1.02" fill="#efd15c"/>
<rect x="332.75" y="588.24" width="4.1" height="0.14" fill="#e96a61"/>
<rect x="338.75" y="589.06" width="4.1" height="0.34" fill="#efd15c"/>
<rect x="338.75" y="588.65" width="4.1" height="0.41" fill="#e96a61"/>
<rect x="344.75" y="588.45" width="4.1" height="0.95" fill="#efd15c"/>
<rect x="344.75" y="588.31" width="4.1" height="0.14" fill="#e96a61"/>
<rect x="350.75" y="586.54" width="4.1" height="2.86" fill="#efd15c"/>
<rect x="350.75" y="586.34" width="4.1" height="0.20" fill="#e96a61"/>
<rect x="356.75" y="588.99" width="4.1" height="0.41" fill="#efd15c"/>
<rect x="356.75" y="588.92" width="4.1" height="0.07" fill="#e96a61"/>
<rect x="362.75" y="589.13" width="4.1" height="0.27" fill="#efd15c"/>
<rect x="362.75" y="588.72" width="4.1" height="0.41" fill="#e96a61"/>
<rect x="368.75" y="588.72" width="4.1" height="0.68" fill="#efd15c"/>
<rect x="368.75" y="588.58" width="4.1" height="0.14" fill="#e96a61"/>
<rect x="374.75" y="589.20" width="4.1" height="0.20" fill="#efd15c"/>
<rect x="374.75" y="588.65" width="4.1" height="0.54" fill="#e96a61"/>
<rect x="380.75" y="587.70" width="4.1" height="1.70" fill="#efd15c"/>
<rect x="380.75" y="587.43" width="4.1" height="0.27" fill="#e96a61"/>
<rect x="386.75" y="588.86" width="4.1" height="0.54" fill="#efd15c"/>
<rect x="386.75" y="588.72" width="4.1" height="0.14" fill="#e96a61"/>
<rect x="392.75" y="589.20" width="4.1" height="0.20" fill="#efd15c"/>
<rect x="392.75" y="589.13" width="4.1" height="0.07" fill="#e96a61"/>
<rect x="398.75" y="589.20" width="4.1" height="0.20" fill="#efd15c"/>
<rect x="398.75" y="589.13" width="4.1" height="0.07" fill="#e96a61"/>
<rect x="404.75" y="589.26" width="4.1" height="0.14" fill="#efd15c"/>
<rect x="404.75" y="588.92" width="4.1" height="0.34" fill="#e96a61"/>
<rect x="410.75" y="589.13" width="4.1" height="0.27" fill="#efd15c"/>
<rect x="410.75" y="589.06" width="4.1" height="0.07" fill="#e96a61"/>
<rect x="416.75" y="589.20" width="4.1" height="0.20" fill="#efd15c"/>
<rect x="416.75" y="589.13" width="4.1" height="0.07" fill="#e96a61"/>
<rect x="422.75" y="588.17" width="4.1" height="1.23" fill="#efd15c"/>
<rect x="422.75" y="588.11" width="4.1" height="0.07" fill="#e96a61"/>
<rect x="428.75" y="586.13" width="4.1" height="3.27" fill="#efd15c"/>
<rect x="428.75" y="585.99" width="4.1" height="0.14" fill="#e96a61"/>
<rect x="434.75" y="588.38" width="4.1" height="1.02" fill="#efd15c"/>
<rect x="434.75" y="588.31" width="4.1" height="0.07" fill="#e96a61"/>
<rect x="440.75" y="589.20" width="4.1" height="0.20" fill="#efd15c"/>
<rect x="440.75" y="589.13" width="4.1" height="0.07" fill="#e96a61"/>
<rect x="446.75" y="588.86" width="4.1" height="0.54" fill="#efd15c"/>
<rect x="446.75" y="588.79" width="4.1" height="0.07" fill="#e96a61"/>
<rect x="452.75" y="588.45" width="4.1" height="0.95" fill="#efd15c"/>
<rect x="452.75" y="588.31" width="4.1" height="0.14" fill="#e96a61"/>
<rect x="458.75" y="589.20" width="4.1" height="0.20" fill="#efd15c"/>
<rect x="458.75" y="589.13" width="4.1" height="0.07" fill="#e96a61"/>
<rect x="464.75" y="589.26" width="4.1" height="0.14" fill="#efd15c"/>
<rect x="464.75" y="589.20" width="4.1" height="0.07" fill="#e96a61"/>
<rect x="470.75" y="588.99" width="4.1" height="0.41" fill="#efd15c"/>
<rect x="470.75" y="588.92" width="4.1" height="0.07" fill="#e96a61"/>
<rect x="476.75" y="589.26" width="4.1" height="0.14" fill="#efd15c"/>
<rect x="476.75" y="588.92" width="4.1" height="0.34" fill="#e96a61"/>
<rect x="482.75" y="588.58" width="4.1" height="0.82" fill="#efd15c"/>
<rect x="482.75" y="588.45" width="4.1" height="0.14" fill="#e96a61"/>
<rect x="488.75" y="589.26" width="4.1" height="0.14" fill="#efd15c"/>
<rect x="488.75" y="589.20" width="4.1" height="0.07" fill="#e96a61"/>
<rect x="494.75" y="589.26" width="4.1" height="0.14" fill="#efd15c"/>
<rect x="494.75" y="588.86" width="4.1" height="0.41" fill="#e96a61"/>
<rect x="500.75" y="589.26" width="4.1" height="0.14" fill="#efd15c"/>
<rect x="500.75" y="589.20" width="4.1" height="0.07" fill="#e96a61"/>
<rect x="506.75" y="589.26" width="4.1" height="0.14" fill="#efd15c"/>
<rect x="506.75" y="589.06" width="4.1" height="0.20" fill="#e96a61"/>
<rect x="512.75" y="589.26" width="4.1" height="0.14" fill="#efd15c"/>
<rect x="512.75" y="589.20" width="4.1" height="0.07" fill="#e96a61"/>
<rect x="518.75" y="588.86" width="4.1" height="0.54" fill="#efd15c"/>
<rect x="518.75" y="588.79" width="4.1" height="0.07" fill="#e96a61"/>
<rect x="524.75" y="589.26" width="4.1" height="0.14" fill="#efd15c"/>
<rect x="524.75" y="589.20" width="4.1" height="0.07" fill="#e96a61"/>
<rect x="530.75" y="589.13" width="4.1" height="0.27" fill="#efd15c"/>
<rect x="530.75" y="589.06" width="4.1" height="0.07" fill="#e96a61"/>
<rect x="536.75" y="589.26" width="4.1" height="0.14" fill="#efd15c"/>
<rect x="536.75" y="589.20" width="4.1" height="0.07" fill="#e96a61"/>
<rect x="542.75" y="589.26" width="4.1" height="0.14" fill="#efd15c"/>
<rect x="542.75" y="589.20" width="4.1" height="0.07" fill="#e96a61"/>
<rect x="548.75" y="589.20" width="4.1" height="0.20" fill="#efd15c"/>
<rect x="548.75" y="589.13" width="4.1" height="0.07" fill="#e96a61"/>
<rect x="554.75" y="589.26" width="4.1" height="0.14" fill="#efd15c"/>
<rect x="554.75" y="589.20" width="4.1" height="0.07" fill="#e96a61"/>
<rect x="560.75" y="589.26" width="4.1" height="0.14" fill="#efd15c"/>
<rect x="560.75" y="589.20" width="4.1" height="0.07" fill="#e96a61"/>
<rect x="566.75" y="589.13" width="4.1" height="0.27" fill="#efd15c"/>
<rect x="566.75" y="589.06" width="4.1" height="0.07" fill="#e96a61"/>
<rect x="572.75" y="589.26" width="4.1" height="0.14" fill="#efd15c"/>
<rect x="572.75" y="589.20" width="4.1" height="0.07" fill="#e96a61"/>
<rect x="578.75" y="589.20" width="4.1" height="0.20" fill="#efd15c"/>
<rect x="578.75" y="589.13" width="4.1" height="0.07" fill="#e96a61"/>
<rect x="584.75" y="589.26" width="4.1" height="0.14" fill="#efd15c"/>
<rect x="584.75" y="589.20" width="4.1" height="0.07" fill="#e96a61"/>
<rect x="590.75" y="589.26" width="4.1" height="0.14" fill="#efd15c"/>
<rect x="590.75" y="589.20" width="4.1" height="0.07" fill="#e96a61"/>
<rect x="596.75" y="589.26" width="4.1" height="0.14" fill="#efd15c"/>
<rect x="596.75" y="589.20" width="4.1" height="0.07" fill="#e96a61"/>
<rect x="602.75" y="589.26" width="4.1" height="0.14" fill="#efd15c"/>
<rect x="602.75" y="589.20" width="4.1" height="0.07" fill="#e96a61"/>
<rect x="608.75" y="589.26" width="4.1" height="0.14" fill="#efd15c"/>
<rect x="608.75" y="589.20" width="4.1" height="0.07" fill="#e96a61"/>
<rect x="614.75" y="588.86" width="4.1" height="0.54" fill="#efd15c"/>
<rect x="614.75" y="588.79" width="4.1" height="0.07" fill="#e96a61"/>
<rect x="620.75" y="589.26" width="4.1" height="0.14" fill="#efd15c"/>
<rect x="620.75" y="589.20" width="4.1" height="0.07" fill="#e96a61"/>
<rect x="626.75" y="589.20" width="4.1" height="0.20" fill="#efd15c"/>
<rect x="626.75" y="589.13" width="4.1" height="0.07" fill="#e96a61"/>
<rect x="632.75" y="588.58" width="4.1" height="0.82" fill="#efd15c"/>
<rect x="632.75" y="588.51" width="4.1" height="0.07" fill="#e96a61"/>
<rect x="638.75" y="589.26" width="4.1" height="0.14" fill="#efd15c"/>
<rect x="638.75" y="589.20" width="4.1" height="0.07" fill="#e96a61"/>
<rect x="644.75" y="589.26" width="4.1" height="0.14" fill="#efd15c"/>
<rect x="644.75" y="589.20" width="4.1" height="0.07" fill="#e96a61"/>
<rect x="650.75" y="589.26" width="4.1" height="0.14" fill="#efd15c"/>
<rect x="650.75" y="589.20" width="4.1" height="0.07" fill="#e96a61"/>
<rect x="656.75" y="589.26" width="4.1" height="0.14" fill="#efd15c"/>
<rect x="656.75" y="589.20" width="4.1" height="0.07" fill="#e96a61"/>
<rect x="662.75" y="589.26" width="4.1" height="0.14" fill="#efd15c"/>
<rect x="662.75" y="589.20" width="4.1" height="0.07" fill="#e96a61"/>
<rect x="668.75" y="589.26" width="4.1" height="0.14" fill="#efd15c"/>
<rect x="668.75" y="589.20" width="4.1" height="0.07" fill="#e96a61"/>
<rect x="674.75" y="589.26" width="4.1" height="0.14" fill="#efd15c"/>
<rect x="674.75" y="589.20" width="4.1" height="0.07" fill="#e96a61"/>
<rect x="680.75" y="589.26" width="4.1" height="0.14" fill="#efd15c"/>
<rect x="680.75" y="589.20" width="4.1" height="0.07" fill="#e96a61"/>
<rect x="686.75" y="589.13" width="4.1" height="0.27" fill="#e96a61"/>
<rect x="692.75" y="589.13" width="4.1" height="0.27" fill="#e96a61"/>
<rect x="698.75" y="589.26" width="4.1" height="0.14" fill="#efd15c"/>
<rect x="698.75" y="589.20" width="4.1" height="0.07" fill="#e96a61"/>
<rect x="704.75" y="589.26" width="4.1" height="0.14" fill="#efd15c"/>
<rect x="704.75" y="589.20" width="4.1" height="0.07" fill="#e96a61"/>
<rect x="710.75" y="589.13" width="4.1" height="0.27" fill="#efd15c"/>
<rect x="710.75" y="589.06" width="4.1" height="0.07" fill="#e96a61"/>
<rect x="716.75" y="589.26" width="4.1" height="0.14" fill="#efd15c"/>
<rect x="716.75" y="589.20" width="4.1" height="0.07" fill="#e96a61"/>
<rect x="722.75" y="589.26" width="4.1" height="0.14" fill="#efd15c"/>
<rect x="722.75" y="589.20" width="4.1" height="0.07" fill="#e96a61"/>
<rect x="728.75" y="589.26" width="4.1" height="0.14" fill="#efd15c"/>
<rect x="728.75" y="589.20" width="4.1" height="0.07" fill="#e96a61"/>
<rect x="734.75" y="589.26" width="4.1" height="0.14" fill="#efd15c"/>
<rect x="734.75" y="589.20" width="4.1" height="0.07" fill="#e96a61"/>
<text x="137.0" y="597.6" font-size="5.4" fill="#6e7079" text-anchor="middle" font-family="Liberation Sans">14/07/2025</text>
<text x="173.0" y="597.6" font-size="5.4" fill="#6e7079" text-anchor="middle" font-family="Liberation Sans">25/08/2025</text>
<text x="209.0" y="597.6" font-size="5.4" fill="#6e7079" text-anchor="middle" font-family="Liberation Sans">06/10/2025</text>
<text x="245.0" y="597.6" font-size="5.4" fill="#6e7079" text-anchor="middle" font-family="Liberation Sans">17/11/2025</text>
<text x="281.0" y="597.6" font-size="5.4" fill="#6e7079" text-anchor="middle" font-family="Liberation Sans">29/12/2025</text>
<text x="317.0" y="597.6" font-size="5.4" fill="#6e7079" text-anchor="middle" font-family="Liberation Sans">09/02/2026</text>
<text x="353.0" y="597.6" font-size="5.4" fill="#6e7079" text-anchor="middle" font-family="Liberation Sans">23/03/2026</text>
<text x="389.0" y="597.6" font-size="5.4" fill="#6e7079" text-anchor="middle" font-family="Liberation Sans">04/05/2026</text>
<text x="425.0" y="597.6" font-size="5.4" fill="#6e7079" text-anchor="middle" font-family="Liberation Sans">15/06/2026</text>
<text x="461.0" y="597.6" font-size="5.4" fill="#6e7079" text-anchor="middle" font-family="Liberation Sans">27/07/2026</text>
<text x="497.0" y="597.6" font-size="5.4" fill="#6e7079" text-anchor="middle" font-family="Liberation Sans">21/09/2026</text>
<text x="533.0" y="597.6" font-size="5.4" fill="#6e7079" text-anchor="middle" font-family="Liberation Sans">16/11/2026</text>
<text x="569.0" y="597.6" font-size="5.4" fill="#6e7079" text-anchor="middle" font-family="Liberation Sans">11/01/2027</text>
<text x="605.0" y="597.6" font-size="5.4" fill="#6e7079" text-anchor="middle" font-family="Liberation Sans">12/04/2027</text>
<text x="641.0" y="597.6" font-size="5.4" fill="#6e7079" text-anchor="middle" font-family="Liberation Sans">31/05/2027</text>
<text x="677.0" y="597.6" font-size="5.4" fill="#6e7079" text-anchor="middle" font-family="Liberation Sans">06/09/2027</text>
<text x="713.0" y="597.6" font-size="5.4" fill="#6e7079" text-anchor="middle" font-family="Liberation Sans">20/11/2028</text>
<rect x="129" y="608.2" width="306" height="12.4" fill="#fff" stroke="#dfe3ee" stroke-width="0.8" rx="1.5"/>
<rect x="435.3" y="605" width="306" height="15.6" fill="#e7edfb"/>
<rect x="435.3" y="605" width="306" height="3" fill="#d9e0f0"/>
<rect x="435.3" y="619" width="306" height="1.6" fill="#c9d5f5"/>
<path d="M129 619.5 L160 618.8 L200 618.2 L240 617.5 L270 615 L289.5 610.5 L296 614.5 L301.5 611 L307 615.5 L313.5 613 L320 616.5 L335 617.8 L380 618.5 L435 619" stroke="#d8dcea" stroke-width="0.6" fill="#f3f4f9"/>
<path d="M436 619 L480 618.7 L486 618.2 L490 618.8 L495 617.5 L498.5 611.8 L502 618 L506 617.8 L509.8 615.5 L514 618.6 L560 618.9 L741 619" stroke="#b4c3ec" stroke-width="0.6" fill="#d7e0f8"/>
<rect x="433.6" y="609.8" width="3.4" height="8.6" rx="1" fill="#fff" stroke="#b3bdd8" stroke-width="0.5"/>
<rect x="739.6" y="609.8" width="3.4" height="8.6" rx="1" fill="#fff" stroke="#b3bdd8" stroke-width="0.5"/>
<rect x="588.5" y="623" width="10.4" height="6.4" rx="1.5" fill="#efd15c"/>
<text x="601" y="628.4" font-size="5.6" fill="#555" font-family="Liberation Sans">Improcedente/Extinto</text>
<rect x="656" y="623" width="10.4" height="6.4" rx="1.5" fill="#e96a61"/>
<text x="669" y="628.4" font-size="5.6" fill="#555" font-family="Liberation Sans">Parc Procedente/Procedente</text>
</svg>
</body></html>
